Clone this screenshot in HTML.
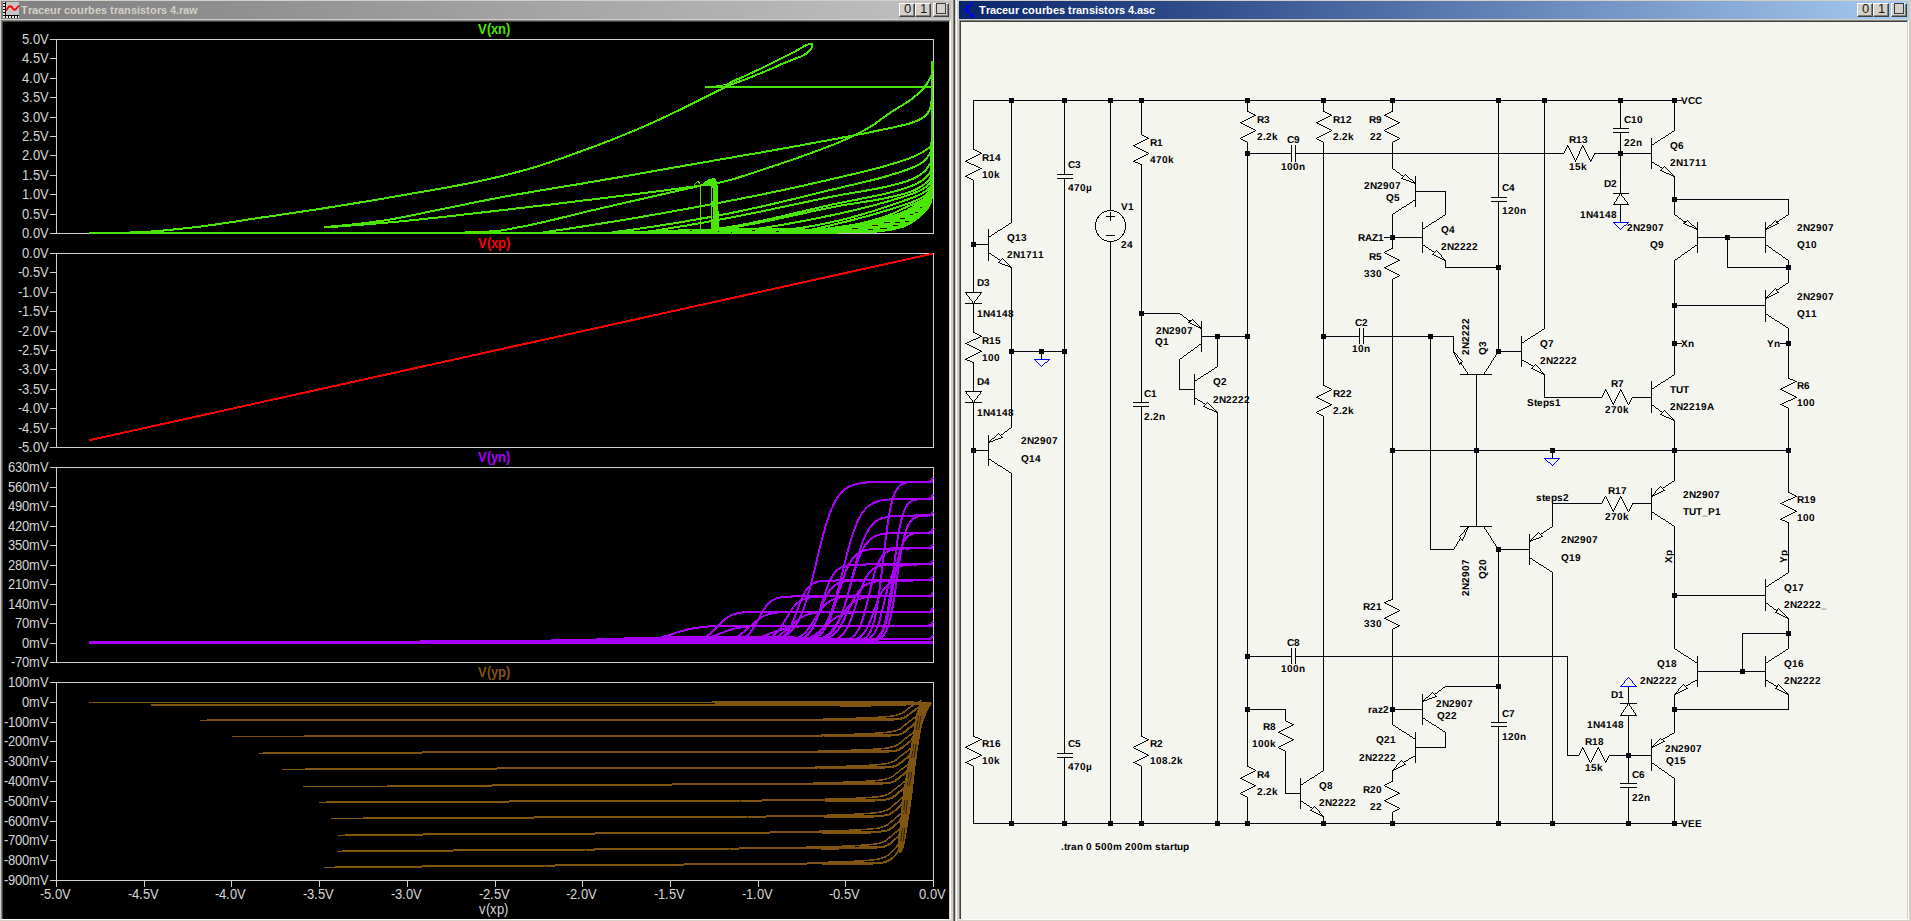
<!DOCTYPE html>
<html><head><meta charset="utf-8"><title>LTspice</title>
<style>
html,body{margin:0;padding:0}
body{width:1911px;height:921px;overflow:hidden;background:#d4d0c8;position:relative;font-family:"Liberation Sans",sans-serif}
.abs,.btn,.t,.r{position:absolute}
.r{display:block}
.t{top:1px;height:18px;font-weight:bold;font-size:11px;line-height:18px;white-space:nowrap}
.btn{top:3px;width:16px;height:14px;background:#d4d0c8;box-sizing:border-box;border-top:1px solid #fff;border-left:1px solid #fff;border-right:1px solid #404040;border-bottom:1px solid #404040;font-size:13px;line-height:12px;color:#1a1a1a;text-align:center}
.btn:after{content:"";position:absolute;left:0;top:0;right:0;bottom:0;border-right:1px solid #808080;border-bottom:1px solid #808080}
.btn span{position:relative;top:-1px;left:0.5px}
.bx{position:absolute;left:2px;top:-1px;width:8px;height:9px;border:1px solid #3a3a44}
svg text{font-family:"Liberation Sans",sans-serif}
#sch text{font-weight:bold;font-size:10px;fill:#000;text-rendering:geometricPrecision}
#plot .tk{font-size:13px;fill:#d6d6d6}
#plot .tt{font-size:13px;font-weight:bold}
</style></head><body>
<!-- left window (waveform viewer) -->
<div class="t" style="left:1px;width:950px;background:linear-gradient(to right,#808080,#c0c0c0);color:#d4d0c8"></div>
<svg class="abs" style="left:3px;top:2px" width="16" height="16" viewBox="0 0 16 16" shape-rendering="crispEdges"><rect x="0" y="0" width="16" height="16" fill="#000"/><rect x="3" y="0" width="13" height="13" fill="#c6c6c6"/><rect x="0" y="0" width="2" height="1" fill="#e8e8e8"/><rect x="0" y="2" width="2" height="2" fill="#e8e8e8"/><rect x="0" y="5" width="2" height="2" fill="#e8e8e8"/><rect x="0" y="8" width="2" height="2" fill="#e8e8e8"/><rect x="0" y="11" width="2" height="2" fill="#e8e8e8"/><rect x="0" y="14" width="2" height="2" fill="#e8e8e8"/><rect x="3" y="14" width="2" height="2" fill="#e8e8e8"/><rect x="6" y="14" width="2" height="2" fill="#e8e8e8"/><rect x="9" y="14" width="2" height="2" fill="#e8e8e8"/><rect x="12" y="14" width="2" height="2" fill="#e8e8e8"/><rect x="15" y="14" width="1" height="2" fill="#e8e8e8"/><path d="M3 8.5L6 4.5H8.5L10.5 7.5H12.5L16 3.5" stroke="#f00" stroke-width="1.8" fill="none" shape-rendering="auto"/></svg>
<div class="btn" style="left:899px"><span>0</span></div><div class="btn" style="left:915px"><span>1</span></div><div class="btn" style="left:933px"><i class="bx"></i></div>
<div class="r" style="left:1px;top:20px;width:950px;height:900px;background:#fff"></div>
<div class="r" style="left:1px;top:20px;width:949px;height:899px;background:#808080"></div>
<div class="r" style="left:2px;top:21px;width:948px;height:898px;background:#d4d0c8"></div>
<div class="r" style="left:2px;top:21px;width:947px;height:898px;background:#404040"></div>
<div class="r" style="left:3px;top:22px;width:946px;height:897px;background:#000"></div>
<div class="r" style="left:953px;top:0;width:1px;height:921px;background:#808080"></div>
<div class="r" style="left:954px;top:0;width:1px;height:921px;background:#404040"></div>
<div class="r" style="left:956px;top:0;width:1px;height:921px;background:#fff"></div>
<!-- right window (schematic) -->
<div class="t" style="left:959px;width:950px;background:linear-gradient(to right,#0a246a,#a6caf0);color:#fff"></div>
<svg class="abs" style="left:962px;top:1px" width="14" height="18" viewBox="0 0 14 18"><g stroke="#0000ff" fill="none" stroke-width="1.1"><path d="M1 8.5H5.5"/><path d="M5.6 4.3V12.7" stroke-width="2.2"/><path d="M6.3 6.4L11.3 1.3"/><path d="M6.3 10.8L12 16.5"/><path d="M12 16.7L8.4 15.4L10.8 13Z" fill="#0000ff" stroke-width="0.8"/></g></svg>
<div class="btn" style="left:1857px"><span>0</span></div><div class="btn" style="left:1873px"><span>1</span></div><div class="btn" style="left:1891px"><i class="bx"></i></div>
<div class="r" style="left:959px;top:20px;width:950px;height:900px;background:#fff"></div>
<div class="r" style="left:959px;top:20px;width:949px;height:899px;background:#808080"></div>
<div class="r" style="left:960px;top:21px;width:948px;height:898px;background:#d4d0c8"></div>
<div class="r" style="left:960px;top:21px;width:947px;height:898px;background:#404040"></div>
<div class="r" style="left:961px;top:22px;width:946px;height:897px;background:#f5f5f0"></div>
<svg class="abs" style="left:0;top:0" width="1911" height="22" viewBox="0 0 1911 22"><g font-weight="bold" font-size="11">
<text x="21 28 32 38 44 50 57 61 64 70 77 84 88 95 101 107 110 114 118 124 131 137 140 146 150 157 161 167 170 176 179 183 189" y="14" fill="#d4d0c8">Traceur courbes transistors 4.raw</text>
<text x="979 986 990 996 1002 1008 1015 1019 1022 1028 1035 1042 1046 1053 1059 1065 1068 1072 1076 1082 1089 1095 1098 1104 1108 1115 1119 1125 1128 1134 1137 1143 1149" y="14" fill="#ffffff">Traceur courbes transistors 4.asc</text>
</g></svg>
<svg id="plot" class="abs" style="left:0;top:0" width="955" height="921" viewBox="0 0 955 921">
<defs><clipPath id="cp"><rect x="3" y="22" width="946" height="897"/></clipPath></defs>
<g clip-path="url(#cp)">
<g fill="none" shape-rendering="crispEdges">
<path d="M56.5 39.5H933.5V233.5H56.5Z" stroke="#cfcfcf" stroke-width="1"/>
<text shape-rendering="auto" transform="translate(0 44) scale(1 1.075)" x="22 29 33 40" y="0" class="tk">5.0V</text>
<text shape-rendering="auto" transform="translate(0 63) scale(1 1.075)" x="22 29 33 40" y="0" class="tk">4.5V</text>
<text shape-rendering="auto" transform="translate(0 83) scale(1 1.075)" x="22 29 33 40" y="0" class="tk">4.0V</text>
<text shape-rendering="auto" transform="translate(0 102) scale(1 1.075)" x="22 29 33 40" y="0" class="tk">3.5V</text>
<text shape-rendering="auto" transform="translate(0 122) scale(1 1.075)" x="22 29 33 40" y="0" class="tk">3.0V</text>
<text shape-rendering="auto" transform="translate(0 141) scale(1 1.075)" x="22 29 33 40" y="0" class="tk">2.5V</text>
<text shape-rendering="auto" transform="translate(0 160) scale(1 1.075)" x="22 29 33 40" y="0" class="tk">2.0V</text>
<text shape-rendering="auto" transform="translate(0 180) scale(1 1.075)" x="22 29 33 40" y="0" class="tk">1.5V</text>
<text shape-rendering="auto" transform="translate(0 199) scale(1 1.075)" x="22 29 33 40" y="0" class="tk">1.0V</text>
<text shape-rendering="auto" transform="translate(0 219) scale(1 1.075)" x="22 29 33 40" y="0" class="tk">0.5V</text>
<text shape-rendering="auto" transform="translate(0 238) scale(1 1.075)" x="22 29 33 40" y="0" class="tk">0.0V</text>
<path d="M50 39.5H56M50 58.5H56M50 78.5H56M50 97.5H56M50 117.5H56M50 136.5H56M50 155.5H56M50 175.5H56M50 194.5H56M50 214.5H56M50 233.5H56" stroke="#cfcfcf" stroke-width="1"/>
<text shape-rendering="auto" transform="translate(0 34) scale(1 1.075)" x="478 487 491 498 506" y="0" class="tt" fill="#48e600">V(xn)</text>
<path d="M56.5 253.5H933.5V447.5H56.5Z" stroke="#cfcfcf" stroke-width="1"/>
<text shape-rendering="auto" transform="translate(0 258) scale(1 1.075)" x="22 29 33 40" y="0" class="tk">0.0V</text>
<text shape-rendering="auto" transform="translate(0 277) scale(1 1.075)" x="18 22 29 33 40" y="0" class="tk">-0.5V</text>
<text shape-rendering="auto" transform="translate(0 297) scale(1 1.075)" x="18 22 29 33 40" y="0" class="tk">-1.0V</text>
<text shape-rendering="auto" transform="translate(0 316) scale(1 1.075)" x="18 22 29 33 40" y="0" class="tk">-1.5V</text>
<text shape-rendering="auto" transform="translate(0 336) scale(1 1.075)" x="18 22 29 33 40" y="0" class="tk">-2.0V</text>
<text shape-rendering="auto" transform="translate(0 355) scale(1 1.075)" x="18 22 29 33 40" y="0" class="tk">-2.5V</text>
<text shape-rendering="auto" transform="translate(0 374) scale(1 1.075)" x="18 22 29 33 40" y="0" class="tk">-3.0V</text>
<text shape-rendering="auto" transform="translate(0 394) scale(1 1.075)" x="18 22 29 33 40" y="0" class="tk">-3.5V</text>
<text shape-rendering="auto" transform="translate(0 413) scale(1 1.075)" x="18 22 29 33 40" y="0" class="tk">-4.0V</text>
<text shape-rendering="auto" transform="translate(0 433) scale(1 1.075)" x="18 22 29 33 40" y="0" class="tk">-4.5V</text>
<text shape-rendering="auto" transform="translate(0 452) scale(1 1.075)" x="18 22 29 33 40" y="0" class="tk">-5.0V</text>
<path d="M50 253.5H56M50 272.5H56M50 292.5H56M50 311.5H56M50 331.5H56M50 350.5H56M50 369.5H56M50 389.5H56M50 408.5H56M50 428.5H56M50 447.5H56" stroke="#cfcfcf" stroke-width="1"/>
<text shape-rendering="auto" transform="translate(0 248) scale(1 1.075)" x="478 487 491 498 506" y="0" class="tt" fill="#ff0000">V(xp)</text>
<path d="M56.5 467.5H933.5V662.5H56.5Z" stroke="#cfcfcf" stroke-width="1"/>
<text shape-rendering="auto" transform="translate(0 472) scale(1 1.075)" x="8 15 22 29 40" y="0" class="tk">630mV</text>
<text shape-rendering="auto" transform="translate(0 492) scale(1 1.075)" x="8 15 22 29 40" y="0" class="tk">560mV</text>
<text shape-rendering="auto" transform="translate(0 511) scale(1 1.075)" x="8 15 22 29 40" y="0" class="tk">490mV</text>
<text shape-rendering="auto" transform="translate(0 531) scale(1 1.075)" x="8 15 22 29 40" y="0" class="tk">420mV</text>
<text shape-rendering="auto" transform="translate(0 550) scale(1 1.075)" x="8 15 22 29 40" y="0" class="tk">350mV</text>
<text shape-rendering="auto" transform="translate(0 570) scale(1 1.075)" x="8 15 22 29 40" y="0" class="tk">280mV</text>
<text shape-rendering="auto" transform="translate(0 589) scale(1 1.075)" x="8 15 22 29 40" y="0" class="tk">210mV</text>
<text shape-rendering="auto" transform="translate(0 609) scale(1 1.075)" x="8 15 22 29 40" y="0" class="tk">140mV</text>
<text shape-rendering="auto" transform="translate(0 628) scale(1 1.075)" x="15 22 29 40" y="0" class="tk">70mV</text>
<text shape-rendering="auto" transform="translate(0 648) scale(1 1.075)" x="22 29 40" y="0" class="tk">0mV</text>
<text shape-rendering="auto" transform="translate(0 667) scale(1 1.075)" x="11 15 22 29 40" y="0" class="tk">-70mV</text>
<path d="M50 467.5H56M50 487.5H56M50 506.5H56M50 526.5H56M50 545.5H56M50 565.5H56M50 584.5H56M50 604.5H56M50 623.5H56M50 643.5H56M50 662.5H56" stroke="#cfcfcf" stroke-width="1"/>
<text shape-rendering="auto" transform="translate(0 462) scale(1 1.075)" x="478 487 491 498 506" y="0" class="tt" fill="#a800f8">V(yn)</text>
<path d="M56.5 682.5H933.5V880.5H56.5Z" stroke="#cfcfcf" stroke-width="1"/>
<text shape-rendering="auto" transform="translate(0 687) scale(1 1.075)" x="8 15 22 29 40" y="0" class="tk">100mV</text>
<text shape-rendering="auto" transform="translate(0 707) scale(1 1.075)" x="22 29 40" y="0" class="tk">0mV</text>
<text shape-rendering="auto" transform="translate(0 727) scale(1 1.075)" x="4 8 15 22 29 40" y="0" class="tk">-100mV</text>
<text shape-rendering="auto" transform="translate(0 746) scale(1 1.075)" x="4 8 15 22 29 40" y="0" class="tk">-200mV</text>
<text shape-rendering="auto" transform="translate(0 766) scale(1 1.075)" x="4 8 15 22 29 40" y="0" class="tk">-300mV</text>
<text shape-rendering="auto" transform="translate(0 786) scale(1 1.075)" x="4 8 15 22 29 40" y="0" class="tk">-400mV</text>
<text shape-rendering="auto" transform="translate(0 806) scale(1 1.075)" x="4 8 15 22 29 40" y="0" class="tk">-500mV</text>
<text shape-rendering="auto" transform="translate(0 826) scale(1 1.075)" x="4 8 15 22 29 40" y="0" class="tk">-600mV</text>
<text shape-rendering="auto" transform="translate(0 845) scale(1 1.075)" x="4 8 15 22 29 40" y="0" class="tk">-700mV</text>
<text shape-rendering="auto" transform="translate(0 865) scale(1 1.075)" x="4 8 15 22 29 40" y="0" class="tk">-800mV</text>
<text shape-rendering="auto" transform="translate(0 885) scale(1 1.075)" x="4 8 15 22 29 40" y="0" class="tk">-900mV</text>
<path d="M50 682.5H56M50 702.5H56M50 722.5H56M50 741.5H56M50 761.5H56M50 781.5H56M50 801.5H56M50 821.5H56M50 840.5H56M50 860.5H56M50 880.5H56" stroke="#cfcfcf" stroke-width="1"/>
<text shape-rendering="auto" transform="translate(0 677) scale(1 1.075)" x="478 487 491 498 506" y="0" class="tt" fill="#80550f">V(yp)</text>
<text shape-rendering="auto" transform="translate(0 899) scale(1 1.075)" x="40 44 51 55 62" y="0" class="tk">-5.0V</text>
<text shape-rendering="auto" transform="translate(0 899) scale(1 1.075)" x="128 132 139 143 150" y="0" class="tk">-4.5V</text>
<text shape-rendering="auto" transform="translate(0 899) scale(1 1.075)" x="215 219 226 230 237" y="0" class="tk">-4.0V</text>
<text shape-rendering="auto" transform="translate(0 899) scale(1 1.075)" x="303 307 314 318 325" y="0" class="tk">-3.5V</text>
<text shape-rendering="auto" transform="translate(0 899) scale(1 1.075)" x="391 395 402 406 413" y="0" class="tk">-3.0V</text>
<text shape-rendering="auto" transform="translate(0 899) scale(1 1.075)" x="479 483 490 494 501" y="0" class="tk">-2.5V</text>
<text shape-rendering="auto" transform="translate(0 899) scale(1 1.075)" x="566 570 577 581 588" y="0" class="tk">-2.0V</text>
<text shape-rendering="auto" transform="translate(0 899) scale(1 1.075)" x="654 658 665 669 676" y="0" class="tk">-1.5V</text>
<text shape-rendering="auto" transform="translate(0 899) scale(1 1.075)" x="742 746 753 757 764" y="0" class="tk">-1.0V</text>
<text shape-rendering="auto" transform="translate(0 899) scale(1 1.075)" x="829 833 840 844 851" y="0" class="tk">-0.5V</text>
<text shape-rendering="auto" transform="translate(0 899) scale(1 1.075)" x="919 926 930 937" y="0" class="tk">0.0V</text>
<path d="M56.5 880V887M144.5 880V887M231.5 880V887M319.5 880V887M407.5 880V887M495.5 880V887M582.5 880V887M670.5 880V887M758.5 880V887M845.5 880V887M933.5 880V887" stroke="#cfcfcf" stroke-width="1"/>
<text shape-rendering="auto" transform="translate(0 914) scale(1 1.075)" x="479 486 490 497 504" y="0" class="tk">v(xp)</text>
</g>
<g fill="none" shape-rendering="crispEdges" stroke-linejoin="round">
<path d="M89 233L838 233" stroke="#48e600" stroke-width="2"/>
<path d="M120.6 232.8L123.6 232.7L126.6 232.6L129.6 232.5L132.6 232.4L135.6 232.3L138.6 232.1L141.6 232L144.6 231.8L147.6 231.6L150.6 231.5L153.6 231.3L156.6 231.1L159.6 230.8L162.6 230.6L165.6 230.3L168.6 230L171.6 229.7L174.6 229.4L177.6 229.1L180.5 228.8L183.5 228.5L186.5 228.1L189.5 227.8L192.5 227.5L195.5 227.1L198.5 226.8L201.4 226.4L204.4 226L207.4 225.6L210.4 225.2L213.3 224.8L216.3 224.4L219.3 223.9L222.3 223.5L225.2 223.1L228.2 222.6L231.2 222.2L234.2 221.7L237.1 221.3L240.1 220.8L243.1 220.3L246 219.9L249 219.4L252 219L255 218.5L257.9 218.1L260.9 217.6L263.9 217.2L266.8 216.8L269.8 216.3L272.8 215.9L275.8 215.5L278.7 215L281.7 214.6L284.7 214.2L287.7 213.7L290.6 213.3L293.6 212.8L296.6 212.4L299.5 212L302.5 211.5L305.5 211.1L308.5 210.6L311.4 210.2L314.4 209.7L317.4 209.3L320.3 208.8L323.3 208.4L326.3 207.9L329.2 207.4L332.2 207L335.2 206.5L338.1 206L341.1 205.5L344.1 205.1L347 204.6L350 204.1L353 203.6L355.9 203.1L358.9 202.6L361.9 202.2L364.8 201.7L367.8 201.2L370.8 200.7L373.7 200.2L376.7 199.7L379.6 199.2L382.6 198.7L385.6 198.2L388.5 197.6L391.5 197.1L394.5 196.6L397.4 196.1L400.4 195.6L403.3 195.1L406.3 194.6L409.3 194L412.2 193.5L415.2 193L418.1 192.5L421.1 192L424.1 191.5L427 191L430 190.5L433 189.9L435.9 189.4L438.9 188.9L441.8 188.4L444.8 187.8L447.8 187.3L450.7 186.8L453.7 186.2L456.6 185.7L459.6 185.1L462.5 184.5L465.5 184L468.4 183.4L471.4 182.8L474.3 182.2L477.2 181.6L480.2 181L483.1 180.3L486 179.7L489 179L491.9 178.4L494.8 177.7L497.8 177L500.7 176.3L503.6 175.6L506.5 174.9L509.4 174.1L512.4 173.4L515.3 172.6L518.2 171.8L521.1 171.1L524 170.3L526.9 169.5L529.7 168.6L532.6 167.8L535.5 166.9L538.4 166.1L541.2 165.2L544.1 164.2L546.9 163.3L549.8 162.4L552.6 161.4L555.5 160.4L558.3 159.4L561.2 158.4L564 157.4L566.8 156.4L569.7 155.4L572.5 154.4L575.3 153.4L578.2 152.3L581 151.3L583.8 150.3L586.6 149.3L589.4 148.2L592.3 147.2L595.1 146.1L597.9 145.1L600.7 144L603.5 142.9L606.3 141.9L609.1 140.8L611.9 139.7L614.7 138.6L617.5 137.5L620.3 136.3L623.1 135.2L625.9 134.1L628.6 132.9L631.4 131.8L634.2 130.6L637 129.5L639.7 128.3L642.5 127.1L645.2 125.9L648 124.7L650.7 123.4L653.5 122.2L656.2 121L658.9 119.7L661.6 118.4L664.4 117.2L667.1 115.9L669.8 114.6L672.5 113.3L675.2 112L677.9 110.7L680.6 109.4L683.3 108.1L686 106.7L688.7 105.4L691.4 104L694.1 102.7L696.8 101.3L699.5 100L702.1 98.7L704.8 97.3L707.5 96L710.2 94.6L712.9 93.3L715.6 91.9L718.3 90.6L721.1 89.4L723.8 88L726.1 86.3L728.2 84L730.5 82.3L733.1 80.9L735.9 79.8L738.8 78.7L741.6 77.5L744.4 76.3L747.1 75L749.8 73.7L752.5 72.5L755.2 71.2L758 69.9L760.7 68.6L763.4 67.3L766.1 66L768.8 64.7L771.5 63.3L774.2 62L776.8 60.6L779.5 59.2L782.2 57.9L784.9 56.6L787.6 55.2L790.3 53.9L793 52.6L795.6 51.1L798.2 49.6L800.8 48.1L803.4 46.6L806.1 45.3L808.9 44.1L812 44.2L812.1 47L810.4 49.6L808.4 51.8L806 53.7L803.5 55.2L800.8 56.5L797.9 57.6L795.1 58.7L792.3 59.8L789.5 60.9L786.7 62L783.9 63.1L781.1 64.3L778.4 65.5L775.7 66.8L772.9 68L770.2 69.3L767.4 70.4L764.7 71.6L761.9 72.7L759.1 73.8L756.3 74.9L753.5 76.1L750.7 77.2L747.9 78.3L745.1 79.4L742.3 80.5L739.5 81.5L736.7 82.5L733.8 83.5L731 84.5L728.2 85.5L725.3 86.4" stroke="#48e600" stroke-width="2"/>
<path d="M705 86.5L933 86.5" stroke="#48e600" stroke-width="2"/>
<path d="M706 86.5L716 86L727 84.5L742 78" stroke="#48e600" stroke-width="1"/>
<path d="M324 227L327 226.8L330 226.6L333 226.3L336 226.1L339 225.8L342 225.5L345 225.2L348 224.9L351 224.6L354 224.3L357 223.9L360 223.6L363 223.2L365.9 222.8L368.9 222.5L371.9 222.1L374.9 221.7L377.8 221.3L380.8 220.9L383.8 220.5L386.8 220L389.7 219.5L392.7 219L395.6 218.5L398.6 217.9L401.6 217.4L404.5 216.8L407.5 216.2L410.4 215.6L413.4 215L416.3 214.4L419.3 213.8L422.2 213.2L425.2 212.5L428.1 211.9L431 211.3L434 210.7L436.9 210.1L439.9 209.5L442.8 208.9L445.8 208.4L448.7 207.8L451.7 207.2L454.6 206.6L457.6 206L460.5 205.4L463.5 204.8L466.4 204.2L469.4 203.5L472.3 202.9L475.3 202.3L478.2 201.7L481.2 201.2L484.1 200.6L487.1 200L490 199.4L493 198.8L495.9 198.3L498.9 197.7L501.8 197.2L504.8 196.6L507.8 196.1L510.7 195.6L513.7 195L516.6 194.5L519.6 194L522.6 193.5L525.5 193L528.5 192.5L531.5 191.9L534.4 191.4L537.4 190.9L540.4 190.4L543.3 190L546.3 189.5L549.3 189L552.2 188.5L555.2 188L558.2 187.5L561.1 187L564.1 186.5L567.1 186L570 185.5L573 185L576 184.6L578.9 184.1L581.9 183.6L584.9 183.1L587.8 182.6L590.8 182.1L593.8 181.6L596.7 181.1L599.7 180.6L602.7 180L605.6 179.5L608.6 179L611.6 178.5L614.5 178L617.5 177.5L620.4 177L623.4 176.4L626.4 175.9L629.3 175.4L632.3 174.9L635.3 174.4L638.2 173.8L641.2 173.3L644.2 172.8L647.1 172.3L650.1 171.8L653 171.2L656 170.7L659 170.2L661.9 169.7L664.9 169.2L667.9 168.6L670.8 168.1L673.8 167.6L676.7 167.1L679.7 166.6L682.7 166L685.6 165.5L688.6 165L691.5 164.5L694.5 164L697.5 163.4L700.4 162.9L703.4 162.4L706.4 161.9L709.3 161.4L712.3 160.8L715.3 160.3L718.2 159.8L721.2 159.3L724.1 158.8L727.1 158.3L730.1 157.8L733 157.3L736 156.7L739 156.2L741.9 155.7L744.9 155.2L747.9 154.7L750.8 154.2L753.8 153.7L756.8 153.2L759.7 152.7L762.7 152.1L765.6 151.6L768.6 151.1L771.6 150.6L774.5 150.1L777.5 149.5L780.4 149L783.4 148.5L786.4 147.9L789.3 147.4L792.3 146.9L795.3 146.3L798.2 145.8L801.2 145.3L804.1 144.7L807.1 144.2L810 143.6L813 143.1L816 142.5L818.9 142L821.9 141.4L824.8 140.9L827.8 140.3L830.7 139.8L833.7 139.2L836.7 138.7L839.6 138.1L842.6 137.5L845.5 137L848.5 136.4L851.4 135.8L854.4 135.3L857.3 134.7L860.3 134.1L863.3 133.6L866.2 133L869.2 132.4L872.1 131.8L875.1 131.2L878 130.6L880.9 130L883.9 129.4L886.8 128.8L889.8 128.1L892.7 127.5L895.7 126.8L898.6 126.2L901.6 125.5L904.5 124.8L907.5 124.1L910.3 123.3L913.1 122.3L915.9 121.3L918.8 120L921.5 118.5L924 116.9L926.1 114.9L928.1 112.5L929.6 109.8L930.5 107.1L931.1 104.2L931.5 101.2L931.8 98.1L932 95.1L932.1 92.1L932.2 89.1L932.2 86.1L932.3 83.1L932.4 80.1L932.4 77.1L932.4 74.1L932.5 71.1L932.5 68L932.5 65L932.5 62" stroke="#48e600" stroke-width="2"/>
<path d="M324 227.5L327 227.3L330 227.1L333 226.9L336 226.7L339 226.4L342 226.2L345 226L348 225.8L351 225.5L354 225.3L357 225.1L360 224.8L363 224.6L366 224.4L369 224.1L372 223.9L375 223.6L378 223.3L381 223.1L384 222.8L387 222.6L390 222.3L392.9 222L395.9 221.7L398.9 221.5L401.9 221.2L404.9 220.9L407.9 220.6L410.9 220.3L413.9 220L416.9 219.7L419.9 219.4L422.9 219.1L425.9 218.8L428.9 218.4L431.8 218.1L434.8 217.8L437.8 217.5L440.8 217.1L443.8 216.8L446.8 216.5L449.8 216.1L452.8 215.8L455.8 215.5L458.7 215.1L461.7 214.8L464.7 214.4L467.7 214.1L470.7 213.8L473.7 213.4L476.7 213.1L479.7 212.7L482.6 212.4L485.6 212L488.6 211.7L491.6 211.4L494.6 211L497.6 210.7L500.6 210.3L503.6 210L506.6 209.7L509.5 209.3L512.5 209L515.5 208.6L518.5 208.3L521.5 207.9L524.5 207.6L527.5 207.2L530.4 206.9L533.4 206.5L536.4 206.2L539.4 205.8L542.4 205.5L545.4 205.1L548.4 204.8L551.4 204.4L554.3 204.1L557.3 203.7L560.3 203.3L563.3 203L566.3 202.6L569.3 202.3L572.3 201.9L575.2 201.5L578.2 201.2L581.2 200.8L584.2 200.4L587.2 200.1L590.2 199.7L593.1 199.3L596.1 199L599.1 198.6L602.1 198.2L605.1 197.9L608.1 197.5L611.1 197.1L614 196.8L617 196.4L620 196L623 195.6L626 195.3L629 194.9L631.9 194.5L634.9 194.2L637.9 193.8L640.9 193.4L643.9 193L646.9 192.7L649.9 192.3L652.8 191.9L655.8 191.5L658.8 191.2L661.8 190.8L664.8 190.4L667.7 190L670.7 189.6L673.7 189.2L676.7 188.8L679.7 188.4L682.7 188L685.6 187.6L688.6 187.2L691.6 186.8L694.6 186.4L697.5 185.9L700.5 185.5L703.5 185.1L706.5 184.7L709.5 184.3L712.5 183.8L715.4 183.3L718.4 182.8L721.3 182.2L724.2 181.5L727.1 180.8L730 180L732.9 179.2L735.8 178.4L738.7 177.5L741.5 176.5L744.4 175.6L747.3 174.7L750.1 173.7L753 172.8L755.9 171.8L758.7 170.9L761.6 170L764.5 169.1L767.3 168.2L770.2 167.2L773.1 166.3L775.9 165.3L778.8 164.4L781.6 163.4L784.5 162.4L787.3 161.5L790.1 160.5L793 159.5L795.8 158.5L798.6 157.5L801.5 156.5L804.3 155.5L807.1 154.4L810 153.4L812.8 152.4L815.6 151.4L818.5 150.3L821.3 149.3L824.1 148.2L826.9 147.2L829.7 146.1L832.5 145L835.3 143.9L838.1 142.7L840.9 141.5L843.6 140.3L846.4 139.1L849.1 137.9L851.8 136.6L854.5 135.3L857.2 134L859.9 132.6L862.6 131.2L865.2 129.7L867.8 128.3L870.4 126.7L873 125.1L875.4 123.5L877.9 121.7L880.3 119.9L882.7 118.1L885.2 116.3L887.6 114.6L890.1 112.9L892.6 111.2L895.1 109.6L897.7 108L900.3 106.4L902.9 104.9L905.5 103.3L908 101.7L910.5 100L912.8 98.2L915.1 96.3L917.4 94.3L919.7 92.2L921.8 90.1L923.8 87.8L925.7 85.5L927.3 83.1L928.8 80.5L930.2 77.8L931.5 75" stroke="#48e600" stroke-width="2"/>
<path d="M462 232.5L465.1 232.5L468.1 232.4L471.2 232.4L474.2 232.3L477.2 232.1L480.3 232L483.3 231.8L486.3 231.7L489.3 231.5L492.4 231.3L495.4 231L498.4 230.8L501.4 230.4L504.4 230L507.4 229.5L510.4 228.9L513.4 228.3L516.4 227.7L519.4 227.1L522.3 226.6L525.3 226L528.3 225.4L531.3 224.8L534.2 224.1L537.2 223.5L540.2 222.8L543.1 222.1L546.1 221.5L549 220.8L552 220.1L555 219.4L557.9 218.7L560.9 217.9L563.8 217.2L566.8 216.5L569.7 215.8L572.7 215.1L575.6 214.3L578.6 213.6L581.5 212.9L584.5 212.2L587.4 211.5L590.4 210.7L593.3 210L596.3 209.4L599.3 208.7L602.2 208L605.2 207.3L608.2 206.6L611.1 206L614.1 205.3L617 204.6L620 203.9L623 203.3L625.9 202.6L628.9 201.9L631.8 201.2L634.8 200.6L637.8 199.9L640.7 199.2L643.7 198.6L646.7 197.9L649.6 197.2L652.6 196.5L655.5 195.9L658.5 195.2L661.5 194.5L664.4 193.9L667.4 193.2L670.4 192.5L673.3 191.9L676.3 191.2L679.3 190.5L682.2 189.9L685.2 189.2L688.1 188.5L691.1 187.9L694.1 187.2L697 186.6L700 185.9" stroke="#48e600" stroke-width="2"/>
<path d="M542.8 232.4L545.8 232L548.7 231.5L551.7 231.1L554.7 230.7L557.7 230.2L560.6 229.8L563.6 229.4L566.6 228.9L569.5 228.5L572.5 228L575.5 227.6L578.5 227.1L581.4 226.7L584.4 226.2L587.4 225.7L590.3 225.3L593.3 224.8L596.3 224.3L599.2 223.9L602.2 223.4L605.1 222.9L608.1 222.4L611.1 221.9L614 221.5L617 221L620 220.5L622.9 220L625.9 219.5L628.8 219L631.8 218.5L634.8 218L637.7 217.5L640.7 217L643.6 216.5L646.6 216L649.6 215.4L652.5 214.9L655.5 214.4L658.4 213.9L661.4 213.4L664.3 212.9L667.3 212.3L670.3 211.8L673.2 211.3L676.2 210.7L679.1 210.2L682.1 209.7L685 209.1L688 208.6L690.9 208.1L693.9 207.5L696.8 207L699.8 206.4L702.7 205.9L705.7 205.4L708.6 204.8L711.6 204.3L714.5 203.7L717.5 203.1L720.4 202.6L723.4 202L726.3 201.5L729.3 200.9L732.2 200.3L735.2 199.8L738.1 199.2L741.1 198.6L744 198L746.9 197.4L749.9 196.9L752.8 196.3L755.8 195.7L758.7 195.1L761.7 194.5L764.6 193.9L767.5 193.3L770.5 192.7L773.4 192L776.4 191.4L779.3 190.8L782.2 190.2L785.2 189.6L788.1 188.9L791.1 188.3L794 187.7L796.9 187L799.9 186.4L802.8 185.7L805.7 185.1L808.6 184.4L811.6 183.7L814.5 183.1L817.4 182.4L820.3 181.7L823.3 181.1L826.2 180.4L829.1 179.7L832 179L835 178.3L837.9 177.7L840.8 177L843.7 176.3L846.7 175.6L849.6 174.9L852.6 174.3L855.5 173.6L858.4 172.9L861.4 172.2L864.3 171.5L867.2 170.8L870.1 170L873.1 169.3L876 168.5L878.9 167.8L881.8 167L884.7 166.2L887.5 165.3L890.4 164.5L893.3 163.6L896.1 162.8L899 161.9L901.8 160.9L904.6 160L907.5 159L910.3 157.9L913.1 156.8L915.9 155.6L918.6 154.3L921.2 152.9L923.8 151.4L926.3 149.8L928.7 147.9L931 146" stroke="#48e600" stroke-width="2"/>
<path d="M611.9 232.4L614.9 232L617.9 231.6L620.9 231.2L623.9 230.8L626.9 230.4L629.9 230L632.9 229.6L635.9 229.2L638.9 228.7L641.9 228.3L644.9 227.9L647.9 227.4L650.8 227L653.8 226.5L656.8 226L659.8 225.6L662.8 225.1L665.8 224.6L668.8 224.1L671.7 223.7L674.7 223.2L677.7 222.7L680.7 222.2L683.7 221.7L686.6 221.2L689.6 220.6L692.6 220.1L695.6 219.6L698.5 219.1L701.5 218.5L704.5 218L707.5 217.5L710.4 216.9L713.4 216.4L716.4 215.8L719.3 215.3L722.3 214.7L725.3 214.1L728.2 213.6L731.2 213L734.1 212.4L737.1 211.8L740.1 211.2L743 210.5L746 209.9L748.9 209.3L751.9 208.6L754.8 208L757.8 207.3L760.7 206.7L763.7 206L766.6 205.3L769.6 204.7L772.5 204L775.5 203.3L778.4 202.6L781.4 201.9L784.3 201.2L787.2 200.5L790.2 199.8L793.1 199.1L796.1 198.4L799 197.7L801.9 197L804.9 196.3L807.8 195.5L810.7 194.8L813.7 194.1L816.6 193.4L819.6 192.7L822.5 191.9L825.4 191.2L828.4 190.5L831.3 189.8L834.2 189.1L837.2 188.4L840.1 187.7L843.1 187L846 186.3L849 185.6L852 184.9L854.9 184.2L857.9 183.5L860.8 182.8L863.8 182.1L866.7 181.4L869.7 180.7L872.6 180L875.6 179.2L878.5 178.5L881.4 177.7L884.3 176.9L887.2 176L890.1 175.2L893 174.3L895.9 173.4L898.7 172.5L901.6 171.6L904.4 170.6L907.2 169.6L910.1 168.5L913 167.3L915.8 166.1L918.5 164.7L921 163.2L923.3 161.5L925.4 159.5L927.4 157.2L929.3 154.7L931 152" stroke="#48e600" stroke-width="2"/>
<path d="M643.3 232.4L646.3 231.9L649.2 231.5L652.2 231L655.2 230.6L658.1 230.1L661.1 229.6L664.1 229.2L667 228.7L670 228.2L673 227.7L675.9 227.2L678.9 226.7L681.8 226.3L684.8 225.8L687.8 225.3L690.7 224.8L693.7 224.2L696.6 223.7L699.6 223.2L702.5 222.7L705.5 222.2L708.4 221.7L711.4 221.1L714.3 220.6L717.3 220.1L720.3 219.5L723.2 219L726.1 218.4L729.1 217.9L732 217.3L735 216.7L737.9 216.2L740.9 215.6L743.8 215L746.8 214.4L749.7 213.8L752.6 213.2L755.6 212.6L758.5 212L761.5 211.4L764.4 210.8L767.3 210.2L770.3 209.6L773.2 208.9L776.2 208.3L779.1 207.7L782 207.1L785 206.5L787.9 205.8L790.8 205.2L793.8 204.6L796.7 204L799.6 203.4L802.6 202.7L805.5 202.1L808.5 201.5L811.4 200.9L814.3 200.3L817.3 199.6L820.2 199L823.1 198.4L826.1 197.8L829 197.2L832 196.6L834.9 196L837.9 195.5L840.8 194.9L843.8 194.4L846.8 193.9L849.8 193.4L852.8 192.9L855.8 192.3L858.8 191.8L861.8 191.3L864.7 190.8L867.7 190.3L870.7 189.8L873.7 189.2L876.6 188.7L879.6 188.1L882.5 187.5L885.5 186.9L888.4 186.2L891.3 185.5L894.1 184.8L897 184.1L899.9 183.3L902.7 182.4L905.5 181.6L908.3 180.6L911.2 179.5L914 178.3L916.8 176.9L919.3 175.4L921.7 173.7L923.8 171.9L925.9 169.8L927.7 167.4L929.4 164.8L931 162" stroke="#48e600" stroke-width="2"/>
<path d="M690 232.4L693 232L696 231.7L699 231.3L702 230.9L705 230.5L708 230.1L711 229.7L714 229.3L717 228.9L720 228.4L723 228L726 227.5L729 227L732 226.5L735 226L737.9 225.5L740.9 225L743.9 224.4L746.9 223.8L749.8 223.3L752.8 222.7L755.8 222L758.7 221.4L761.7 220.8L764.6 220.1L767.6 219.5L770.6 218.8L773.5 218.2L776.5 217.5L779.4 216.8L782.4 216.1L785.3 215.4L788.3 214.7L791.2 214L794.2 213.3L797.1 212.6L800.1 211.9L803 211.2L806 210.5L808.9 209.9L811.9 209.2L814.8 208.5L817.8 207.8L820.7 207.1L823.7 206.4L826.6 205.8L829.6 205.1L832.6 204.4L835.5 203.8L838.5 203.2L841.5 202.6L844.5 202L847.5 201.4L850.5 200.8L853.5 200.3L856.5 199.7L859.5 199.1L862.4 198.5L865.4 197.9L868.4 197.3L871.4 196.7L874.4 196.1L877.4 195.5L880.3 194.8L883.3 194.2L886.2 193.5L889.1 192.7L892.1 192L895 191.2L897.8 190.4L900.7 189.6L903.6 188.7L906.4 187.8L909.3 186.8L912.2 185.6L915 184.4L917.7 183.1L920.3 181.6L922.7 180L925 178.1L927.1 175.9L929.1 173.5L931 171" stroke="#48e600" stroke-width="2"/>
<path d="M704 232.4L707 231.9L710 231.4L713 230.9L715.9 230.4L718.9 229.9L721.9 229.4L724.9 228.9L727.9 228.4L730.9 227.9L733.8 227.3L736.8 226.8L739.8 226.3L742.8 225.7L745.8 225.2L748.7 224.6L751.7 224.1L754.7 223.5L757.7 223L760.6 222.4L763.6 221.8L766.6 221.2L769.5 220.6L772.5 220L775.4 219.4L778.4 218.7L781.4 218.1L784.3 217.5L787.3 216.8L790.2 216.2L793.2 215.5L796.2 214.9L799.1 214.2L802.1 213.6L805 212.9L808 212.3L810.9 211.6L813.9 211L816.9 210.3L819.8 209.7L822.8 209.1L825.7 208.5L828.7 207.9L831.7 207.3L834.6 206.7L837.6 206.2L840.6 205.6L843.6 205.1L846.6 204.6L849.7 204.1L852.7 203.7L855.7 203.2L858.7 202.7L861.7 202.2L864.7 201.8L867.7 201.3L870.8 200.8L873.8 200.3L876.8 199.8L879.7 199.3L882.7 198.7L885.7 198.1L888.6 197.5L891.6 196.9L894.5 196.2L897.4 195.5L900.3 194.8L903.2 194L906 193.2L908.9 192.3L911.8 191.2L914.6 190L917.4 188.7L920 187.2L922.5 185.7L924.8 183.8L927 181.8L929.1 179.5L931 177" stroke="#48e600" stroke-width="2"/>
<path d="M728 232.4L731 232.1L734 231.8L737 231.4L740 231.1L743 230.7L746 230.3L748.9 229.9L751.9 229.5L754.9 229.1L757.9 228.7L760.9 228.2L763.8 227.8L766.8 227.3L769.8 226.9L772.8 226.4L775.7 225.9L778.7 225.4L781.7 224.9L784.7 224.4L787.6 223.9L790.6 223.3L793.6 222.8L796.5 222.3L799.5 221.7L802.5 221.1L805.4 220.6L808.4 220L811.3 219.4L814.3 218.8L817.2 218.2L820.2 217.6L823.1 217L826.1 216.4L829 215.8L832 215.2L834.9 214.5L837.9 213.9L840.8 213.3L843.7 212.6L846.7 211.9L849.6 211.3L852.6 210.6L855.5 209.9L858.4 209.2L861.4 208.5L864.3 207.7L867.2 207L870.2 206.2L873.1 205.5L876 204.7L878.9 203.9L881.8 203.1L884.7 202.3L887.6 201.5L890.5 200.6L893.4 199.8L896.3 198.9L899.1 198L902 197.1L904.9 196.2L907.7 195.2L910.6 194.3L913.5 193.3L916.3 192.2L919.1 191L921.7 189.7L924.2 188.1L926.6 186.3L928.8 184.2L931 182" stroke="#48e600" stroke-width="2"/>
<path d="M768 232.4L771 232L774 231.7L777 231.3L780.1 230.9L783.1 230.5L786.1 230.1L789.1 229.6L792.1 229.2L795.1 228.7L798.1 228.3L801.1 227.8L804.1 227.3L807.1 226.8L810.1 226.3L813.1 225.8L816.1 225.3L819.1 224.7L822 224.1L825 223.5L828 222.9L830.9 222.3L833.9 221.6L836.8 221L839.8 220.3L842.7 219.6L845.7 218.8L848.6 218.1L851.6 217.3L854.5 216.5L857.4 215.7L860.3 214.8L863.3 214L866.2 213.1L869.1 212.3L872 211.4L874.9 210.5L877.8 209.5L880.7 208.6L883.6 207.7L886.5 206.7L889.4 205.7L892.3 204.8L895.2 203.8L898 202.8L900.9 201.8L903.8 200.8L906.6 199.8L909.5 198.8L912.4 197.7L915.2 196.6L918 195.5L920.8 194.2L923.3 192.7L925.8 191L928.2 189.1L930.5 187" stroke="#48e600" stroke-width="2"/>
<path d="M790 232.4L793 232.1L796 231.8L799 231.4L802 231L805 230.6L807.9 230.1L810.9 229.7L813.9 229.1L816.8 228.5L819.8 227.9L822.7 227.2L825.6 226.5L828.6 225.8L831.5 225.1L834.4 224.4L837.4 223.7L840.3 223L843.2 222.3L846.1 221.6L849.1 220.9L852 220.1L854.9 219.4L857.8 218.6L860.8 217.8L863.7 217.1L866.6 216.3L869.5 215.5L872.4 214.7L875.3 213.9L878.2 213L881.1 212.2L884 211.3L886.9 210.4L889.8 209.6L892.6 208.7L895.5 207.7L898.4 206.8L901.2 205.9L904 204.9L906.9 203.9L909.7 202.9L912.6 201.8L915.4 200.7L918.1 199.5L920.8 198.1L923.3 196.6L925.8 194.9L928.2 193L930.5 191" stroke="#48e600" stroke-width="2"/>
<path d="M818 232.4L821 231.9L824.1 231.4L827.1 230.8L830.1 230.2L833.1 229.6L836.1 229L839.1 228.4L842.1 227.8L845.1 227.1L848.1 226.4L851.1 225.7L854.1 225L857.1 224.3L860.1 223.6L863.1 222.9L866.1 222.1L869.1 221.3L872.1 220.5L875 219.7L878 218.8L880.9 217.9L883.8 216.9L886.7 216L889.6 214.9L892.4 213.7L895.2 212.5L897.9 211.1L900.7 209.7L903.5 208.4L906.3 207.1L909.1 205.9L911.9 204.7L914.8 203.5L917.6 202.2L920.3 200.9L923 199.4L925.5 197.7L928 195.9L930.5 194" stroke="#48e600" stroke-width="2"/>
<path d="M800 230.5L803 230.2L806.1 229.9L809.1 229.6L812.1 229.3L815.1 229L818.2 228.6L821.2 228.3L824.2 227.9L827.2 227.6L830.2 227.2L833.2 226.8L836.3 226.4L839.3 226L842.3 225.5L845.3 225.1L848.3 224.6L851.3 224.2L854.3 223.7L857.3 223.2L860.3 222.7L863.3 222.1L866.3 221.5L869.3 220.9L872.2 220.3L875.2 219.7L878.2 219L881.2 218.2L884.1 217.5L887.1 216.6L890 215.8L892.9 214.9L895.8 213.9L898.6 212.9L901.4 211.8L904.2 210.6L907 209.3L909.7 207.8L912.3 206.3L914.9 204.7L917.5 202.9L920 201.1L922.3 199L924.3 196.9L926 194.5L927.4 191.9L928.6 189L929.6 186L932.6 186L932.6 189.1L932.6 192.2L932.5 195.3L932.4 198.3L932 201.3L931 204.2L929.7 206.9L927.9 209.4L925.8 211.7L923.7 214L921.5 216.1L919.2 218.2L916.8 220L914.3 221.9L911.7 223.6L909.1 225.2L906.4 226.5L903.5 227.5L900.6 228.4L897.6 229.2L894.6 229.9L891.6 230.5L888.6 230.9L885.6 231.4L882.6 231.8L879.5 232.2L876.5 232.6L873.4 232.9L870.4 233.2L867.3 233.3L864.2 233.4L800 233.4Z" fill="#48e600" stroke="none"/>
<rect x="872" y="224.5" width="6" height="1" fill="#000" stroke="none"/>
<rect x="884" y="221.5" width="6" height="1" fill="#000" stroke="none"/>
<rect x="895" y="221.8" width="5" height="1" fill="#000" stroke="none"/>
<rect x="880" y="227.5" width="7" height="1" fill="#000" stroke="none"/>
<rect x="900" y="217.5" width="5" height="1" fill="#000" stroke="none"/>
<rect x="910" y="214" width="3" height="1" fill="#000" stroke="none"/>
<rect x="868" y="228.8" width="5" height="1" fill="#000" stroke="none"/>
<rect x="893" y="225.2" width="5" height="1" fill="#000" stroke="none"/>
<rect x="905" y="221.3" width="4" height="1" fill="#000" stroke="none"/>
<rect x="915" y="211.5" width="3" height="1" fill="#000" stroke="none"/>
<rect x="852" y="228.2" width="6" height="1" fill="#000" stroke="none"/>
<rect x="920" y="207" width="2" height="1" fill="#000" stroke="none"/>
<path d="M700.5 187L700.5 229" stroke="#48e600" stroke-width="1"/>
<path d="M694 184.6L698.2 181.2L700.4 184.4" stroke="#48e600" stroke-width="1"/>
<path d="M710.5 232L710.5 186L702.8 185.2L702.8 183.6L708.5 179.1L714.6 178L715.9 179.9L717.3 182.4L718.1 192.8L718.9 228.5L718.9 232Z" fill="#48e600" stroke="none"/>
<rect x="711.6" y="187.5" width="1.2" height="13.5" fill="#000" stroke="none"/>
<rect x="711.6" y="207" width="1.2" height="12" fill="#000" stroke="none"/>
<path d="M600 232.2L620 231.2L660 230.2L694 228.9L720 228.4L800 228.4L838 229.2L838 234L600 234Z" fill="#48e600" stroke="none"/>
<rect x="690" y="230.3" width="2" height="1" fill="#000" stroke="none"/>
<rect x="718" y="231.2" width="1.4" height="1" fill="#000" stroke="none"/>
<rect x="731" y="232" width="1.4" height="1" fill="#000" stroke="none"/>
<rect x="752" y="230.4" width="3" height="1" fill="#000" stroke="none"/>
<rect x="776" y="231.3" width="3" height="1" fill="#000" stroke="none"/>
<path d="M931.2 61L933 61L933 199L928.8 199L929.5 186L930.4 150L931 110L931.2 75Z" fill="#48e600" stroke="none"/>
<path d="M89 440.3L933 253.6" stroke="#ff0000" stroke-width="2"/>
<path d="M89 642.2L933 642.2" stroke="#a800f8" stroke-width="3"/>
<path d="M89 641.3L95 641.3" stroke="#a800f8" stroke-width="1"/>
<path d="M430 641.2L480 640.4L560 639.4L600 638.4L640 636.9L700 635.8L760 635.9L800 636.6L830 637.9L830 643.7L430 643.7Z" fill="#a800f8" stroke="none"/>
<path d="M712 641.4L713.5 641.4L715 641.4L716.5 641.4L718 641.4L719.5 641.4L721 641.4L722.5 641.4L724 641.4L725.5 641.4L727 641.4L728.5 641.4L730 641.4L731.5 641.4L733 641.4L734.5 641.4L736 641.4L737.5 641.4L739 641.4L740.5 641.3L742 641.3L743.5 641.3L745 641.3L746.5 641.3L748 641.3L749.5 641.3L751 641.2L752.5 641.2L754 641.2L755.5 641.1L757 641.1L758.5 641L760 641L761.5 640.9L763 640.8L764.5 640.7L766 640.6L767.5 640.5L769 640.3L770.5 640.1L772 639.9L773.5 639.7L775 639.4L776.5 639.1L778 638.7L779.5 638.2L781 637.7L782.5 637.1L784 636.3L785.5 635.5L787 634.6L788.5 633.4L790 632.2L791.5 630.7L793 629L794.5 627.1L796 624.9L797.5 622.4L799 619.6L800.5 616.4L802 612.9L803.5 609L805 604.7L806.5 600.1L808 595.1L809.5 589.7L811 584L812.5 578.1L814 572L815.5 565.7L817 559.4L818.5 553.2L820 547L821.5 541L823 535.3L824.5 529.8L826 524.6L827.5 519.9L829 515.5L830.5 511.5L832 507.8L833.5 504.6L835 501.6L836.5 499L838 496.7L839.5 494.7L841 493L842.5 491.4L844 490.1L845.5 488.9L847 487.9L848.5 487L850 486.3L851.5 485.6L853 485.1L854.5 484.6L856 484.2L857.5 483.8L859 483.5L860.5 483.2L862 483L863.5 482.8L865 482.7L866.5 482.5L868 482.4L869.5 482.3L871 482.2L872.5 482.1L874 482.1L875.5 482L877 482L878.5 481.9L880 481.9L881.5 481.9L883 481.8L884.5 481.8L886 481.8L887.5 481.8L889 481.8L890.5 481.8L892 481.8L893.5 481.7L895 481.7L896.5 481.7L898 481.7L899.5 481.7L901 481.7L902.5 481.7L904 481.7L905.5 481.7L907 481.7L908.5 481.7L910 481.7L911.5 481.7L913 481.7L914.5 481.7L916 481.7L917.5 481.7L919 481.7L920.5 481.7L922 481.7L923.5 481.7L925 481.7L926.5 481.7L928 481.7L929.5 481.7L931.5 480.5L933 477.7" stroke="#a800f8" stroke-width="2"/>
<path d="M832.4 641.4L833.9 641.4L835.4 641.4L836.9 641.4L838.4 641.4L839.9 641.4L841.4 641.4L842.9 641.4L844.4 641.4L845.9 641.3L847.4 641.3L848.9 641.3L850.4 641.3L851.9 641.2L853.4 641.1L854.9 641L856.4 640.9L857.9 640.7L859.4 640.5L860.9 640.1L862.4 639.6L863.9 638.9L865.4 638L866.9 636.7L868.4 635L869.9 632.6L871.4 629.5L872.9 625.4L874.4 620.1L875.9 613.3L877.4 604.9L878.9 595L880.4 583.5L881.9 571.1L883.4 558.1L884.9 545.3L886.4 533.3L887.9 522.6L889.4 513.5L890.9 506L892.4 500L893.9 495.4L895.4 491.8L896.9 489.1L898.4 487.1L899.9 485.7L901.4 484.6L902.9 483.8L904.4 483.2L905.9 482.8L907.4 482.5L908.9 482.3L910.4 482.1L911.9 482L913.4 481.9L914.9 481.9L916.4 481.8L917.9 481.8L919.4 481.8L920.9 481.7L922.4 481.7L923.9 481.7L925.4 481.7L926.9 481.7L928.4 481.7L929.9 481.7L933 481.7" stroke="#a800f8" stroke-width="2"/>
<path d="M746.2 641.4L747.7 641.4L749.2 641.4L750.7 641.4L752.2 641.4L753.7 641.4L755.2 641.4L756.7 641.4L758.2 641.4L759.7 641.4L761.2 641.4L762.7 641.4L764.2 641.4L765.7 641.4L767.2 641.4L768.7 641.4L770.2 641.4L771.7 641.4L773.2 641.3L774.7 641.3L776.2 641.3L777.7 641.3L779.2 641.3L780.7 641.3L782.2 641.3L783.7 641.2L785.2 641.2L786.7 641.2L788.2 641.1L789.7 641.1L791.2 641L792.7 640.9L794.2 640.8L795.7 640.7L797.2 640.6L798.7 640.5L800.2 640.3L801.7 640.1L803.2 639.9L804.7 639.6L806.2 639.3L807.7 638.9L809.2 638.4L810.7 637.9L812.2 637.2L813.7 636.5L815.2 635.6L816.7 634.6L818.2 633.4L819.7 632L821.2 630.3L822.7 628.5L824.2 626.3L825.7 623.9L827.2 621.1L828.7 617.9L830.2 614.4L831.7 610.5L833.2 606.1L834.7 601.4L836.2 596.3L837.7 590.9L839.2 585.2L840.7 579.3L842.2 573.3L843.7 567.2L845.2 561.2L846.7 555.3L848.2 549.6L849.7 544.1L851.2 539L852.7 534.3L854.2 529.9L855.7 526L857.2 522.4L858.7 519.2L860.2 516.4L861.7 513.9L863.2 511.8L864.7 509.9L866.2 508.2L867.7 506.8L869.2 505.6L870.7 504.6L872.2 503.7L873.7 502.9L875.2 502.3L876.7 501.7L878.2 501.3L879.7 500.9L881.2 500.5L882.7 500.3L884.2 500L885.7 499.8L887.2 499.6L888.7 499.5L890.2 499.4L891.7 499.3L893.2 499.2L894.7 499.1L896.2 499L897.7 499L899.2 498.9L900.7 498.9L902.2 498.9L903.7 498.8L905.2 498.8L906.7 498.8L908.2 498.8L909.7 498.8L911.2 498.8L912.7 498.8L914.2 498.7L915.7 498.7L917.2 498.7L918.7 498.7L920.2 498.7L921.7 498.7L923.2 498.7L924.7 498.7L926.2 498.7L927.7 498.7L929.2 498.7L931.5 497.5L933 494.7" stroke="#a800f8" stroke-width="2"/>
<path d="M844 641.4L845.5 641.4L847 641.4L848.5 641.4L850 641.4L851.5 641.4L853 641.4L854.5 641.4L856 641.4L857.5 641.4L859 641.3L860.5 641.3L862 641.3L863.5 641.2L865 641.1L866.5 641L868 640.9L869.5 640.7L871 640.4L872.5 640.1L874 639.6L875.5 638.8L877 637.8L878.5 636.5L880 634.6L881.5 632.1L883 628.8L884.5 624.4L886 618.7L887.5 611.6L889 603L890.5 593L892 581.8L893.5 570L895 558.3L896.5 547.1L898 537.1L899.5 528.5L901 521.4L902.5 515.7L904 511.3L905.5 508L907 505.5L908.5 503.6L910 502.3L911.5 501.3L913 500.5L914.5 500L916 499.7L917.5 499.4L919 499.2L920.5 499.1L922 499L923.5 498.9L925 498.8L926.5 498.8L928 498.8L929.5 498.7L933 498.7" stroke="#a800f8" stroke-width="2"/>
<path d="M764 641.4L765.5 641.4L767 641.4L768.5 641.4L770 641.4L771.5 641.4L773 641.4L774.5 641.4L776 641.4L777.5 641.4L779 641.4L780.5 641.4L782 641.4L783.5 641.4L785 641.4L786.5 641.4L788 641.4L789.5 641.3L791 641.3L792.5 641.3L794 641.3L795.5 641.3L797 641.3L798.5 641.2L800 641.2L801.5 641.2L803 641.1L804.5 641.1L806 641L807.5 640.9L809 640.8L810.5 640.7L812 640.6L813.5 640.4L815 640.2L816.5 639.9L818 639.6L819.5 639.3L821 638.8L822.5 638.3L824 637.7L825.5 637L827 636.1L828.5 635.1L830 633.8L831.5 632.4L833 630.7L834.5 628.7L836 626.4L837.5 623.7L839 620.7L840.5 617.2L842 613.3L843.5 609L845 604.3L846.5 599.2L848 593.8L849.5 588.2L851 582.3L852.5 576.4L854 570.6L855.5 564.8L857 559.3L858.5 554.1L860 549.3L861.5 544.8L863 540.8L864.5 537.2L866 534.1L867.5 531.3L869 528.8L870.5 526.8L872 525L873.5 523.4L875 522.1L876.5 521L878 520.1L879.5 519.3L881 518.7L882.5 518.1L884 517.7L885.5 517.3L887 517L888.5 516.7L890 516.5L891.5 516.3L893 516.1L894.5 516L896 515.9L897.5 515.8L899 515.8L900.5 515.7L902 515.6L903.5 515.6L905 515.6L906.5 515.5L908 515.5L909.5 515.5L911 515.5L912.5 515.5L914 515.5L915.5 515.4L917 515.4L918.5 515.4L920 515.4L921.5 515.4L923 515.4L924.5 515.4L926 515.4L927.5 515.4L929 515.4L931.5 514.2L933 511.4" stroke="#a800f8" stroke-width="2"/>
<path d="M847.5 641.4L849 641.4L850.5 641.4L852 641.4L853.5 641.4L855 641.4L856.5 641.4L858 641.4L859.5 641.4L861 641.4L862.5 641.3L864 641.3L865.5 641.3L867 641.2L868.5 641.2L870 641.1L871.5 641L873 640.8L874.5 640.6L876 640.2L877.5 639.8L879 639.1L880.5 638.3L882 637.1L883.5 635.4L885 633.2L886.5 630.3L888 626.4L889.5 621.4L891 615.1L892.5 607.5L894 598.7L895.5 588.8L897 578.4L898.5 568L900 558.1L901.5 549.3L903 541.7L904.5 535.4L906 530.4L907.5 526.5L909 523.6L910.5 521.4L912 519.7L913.5 518.5L915 517.7L916.5 517L918 516.6L919.5 516.2L921 516L922.5 515.8L924 515.7L925.5 515.6L927 515.6L928.5 515.5L930 515.5L933 515.4" stroke="#a800f8" stroke-width="2"/>
<path d="M767.5 641.4L769 641.4L770.5 641.4L772 641.4L773.5 641.4L775 641.4L776.5 641.4L778 641.4L779.5 641.4L781 641.4L782.5 641.4L784 641.4L785.5 641.4L787 641.4L788.5 641.4L790 641.4L791.5 641.4L793 641.3L794.5 641.3L796 641.3L797.5 641.3L799 641.3L800.5 641.3L802 641.2L803.5 641.2L805 641.1L806.5 641.1L808 641L809.5 640.9L811 640.8L812.5 640.7L814 640.5L815.5 640.3L817 640.1L818.5 639.8L820 639.4L821.5 639L823 638.5L824.5 637.9L826 637.1L827.5 636.2L829 635.2L830.5 633.9L832 632.3L833.5 630.5L835 628.4L836.5 626L838 623.1L839.5 619.9L841 616.2L842.5 612.1L844 607.6L845.5 602.8L847 597.7L848.5 592.4L850 587L851.5 581.5L853 576.2L854.5 571.1L856 566.3L857.5 561.8L859 557.7L860.5 554L862 550.8L863.5 547.9L865 545.5L866.5 543.4L868 541.6L869.5 540L871 538.7L872.5 537.7L874 536.8L875.5 536L877 535.4L878.5 534.9L880 534.5L881.5 534.1L883 533.8L884.5 533.6L886 533.4L887.5 533.2L889 533.1L890.5 533L892 532.9L893.5 532.8L895 532.8L896.5 532.7L898 532.7L899.5 532.6L901 532.6L902.5 532.6L904 532.6L905.5 532.6L907 532.6L908.5 532.5L910 532.5L911.5 532.5L913 532.5L914.5 532.5L916 532.5L917.5 532.5L919 532.5L920.5 532.5L922 532.5L923.5 532.5L925 532.5L926.5 532.5L928 532.5L929.5 532.5L931.5 531.3L933 528.5" stroke="#a800f8" stroke-width="2"/>
<path d="M843.5 641.4L845 641.4L846.5 641.4L848 641.4L849.5 641.4L851 641.4L852.5 641.4L854 641.4L855.5 641.4L857 641.4L858.5 641.3L860 641.3L861.5 641.3L863 641.3L864.5 641.2L866 641.1L867.5 641L869 640.9L870.5 640.7L872 640.4L873.5 640L875 639.4L876.5 638.7L878 637.6L879.5 636.2L881 634.3L882.5 631.8L884 628.4L885.5 624.1L887 618.7L888.5 612.1L890 604.5L891.5 595.9L893 587L894.5 578L896 569.4L897.5 561.8L899 555.2L900.5 549.8L902 545.5L903.5 542.1L905 539.6L906.5 537.7L908 536.3L909.5 535.2L911 534.5L912.5 533.9L914 533.5L915.5 533.2L917 533L918.5 532.9L920 532.8L921.5 532.7L923 532.6L924.5 532.6L926 532.6L927.5 532.6L929 532.5L933 532.5" stroke="#a800f8" stroke-width="2"/>
<path d="M761 641.4L762.5 641.4L764 641.4L765.5 641.4L767 641.4L768.5 641.4L770 641.4L771.5 641.4L773 641.4L774.5 641.4L776 641.4L777.5 641.4L779 641.4L780.5 641.4L782 641.4L783.5 641.4L785 641.4L786.5 641.3L788 641.3L789.5 641.3L791 641.3L792.5 641.3L794 641.2L795.5 641.2L797 641.1L798.5 641.1L800 641L801.5 640.9L803 640.8L804.5 640.6L806 640.4L807.5 640.2L809 639.9L810.5 639.6L812 639.2L813.5 638.7L815 638L816.5 637.3L818 636.3L819.5 635.2L821 633.9L822.5 632.2L824 630.3L825.5 628L827 625.4L828.5 622.4L830 618.9L831.5 615.1L833 610.8L834.5 606.3L836 601.5L837.5 596.6L839 591.6L840.5 586.7L842 582L843.5 577.5L845 573.4L846.5 569.7L848 566.4L849.5 563.5L851 561L852.5 558.8L854 557L855.5 555.5L857 554.2L858.5 553.1L860 552.2L861.5 551.5L863 550.9L864.5 550.5L866 550.1L867.5 549.8L869 549.5L870.5 549.3L872 549.1L873.5 549L875 548.9L876.5 548.8L878 548.7L879.5 548.6L881 548.6L882.5 548.6L884 548.5L885.5 548.5L887 548.5L888.5 548.5L890 548.5L891.5 548.4L893 548.4L894.5 548.4L896 548.4L897.5 548.4L899 548.4L900.5 548.4L902 548.4L903.5 548.4L905 548.4L906.5 548.4L908 548.4L909.5 548.4L911 548.4L912.5 548.4L914 548.4L915.5 548.4L917 548.4L918.5 548.4L920 548.4L921.5 548.4L923 548.4L924.5 548.4L926 548.4L927.5 548.4L929 548.4L931.5 547.2L933 544.4" stroke="#a800f8" stroke-width="2"/>
<path d="M808.5 641.4L810 641.4L811.5 641.4L813 641.4L814.5 641.4L816 641.4L817.5 641.4L819 641.4L820.5 641.4L822 641.4L823.5 641.4L825 641.4L826.5 641.4L828 641.3L829.5 641.3L831 641.3L832.5 641.3L834 641.2L835.5 641.2L837 641.1L838.5 641L840 640.9L841.5 640.8L843 640.6L844.5 640.3L846 640L847.5 639.6L849 639L850.5 638.3L852 637.4L853.5 636.2L855 634.6L856.5 632.7L858 630.3L859.5 627.4L861 623.8L862.5 619.6L864 614.7L865.5 609.2L867 603.3L868.5 597L870 590.7L871.5 584.5L873 578.7L874.5 573.4L876 568.7L877.5 564.7L879 561.4L880.5 558.6L882 556.4L883.5 554.6L885 553.2L886.5 552.1L888 551.2L889.5 550.6L891 550.1L892.5 549.7L894 549.4L895.5 549.1L897 549L898.5 548.8L900 548.7L901.5 548.7L903 548.6L904.5 548.5L906 548.5L907.5 548.5L909 548.5L910.5 548.4L912 548.4L913.5 548.4L915 548.4L916.5 548.4L918 548.4L919.5 548.4L921 548.4L922.5 548.4L924 548.4L925.5 548.4L927 548.4L928.5 548.4L930 548.4L933 548.4" stroke="#a800f8" stroke-width="2"/>
<path d="M756 641.4L757.5 641.4L759 641.4L760.5 641.4L762 641.4L763.5 641.4L765 641.4L766.5 641.4L768 641.4L769.5 641.4L771 641.4L772.5 641.4L774 641.4L775.5 641.4L777 641.4L778.5 641.3L780 641.3L781.5 641.3L783 641.3L784.5 641.3L786 641.2L787.5 641.2L789 641.1L790.5 641L792 640.9L793.5 640.7L795 640.6L796.5 640.3L798 640L799.5 639.6L801 639.1L802.5 638.5L804 637.7L805.5 636.8L807 635.6L808.5 634.1L810 632.2L811.5 630L813 627.4L814.5 624.3L816 620.7L817.5 616.7L819 612.3L820.5 607.7L822 602.9L823.5 598.1L825 593.5L826.5 589.1L828 585.1L829.5 581.5L831 578.4L832.5 575.8L834 573.6L835.5 571.7L837 570.2L838.5 569L840 568.1L841.5 567.3L843 566.7L844.5 566.2L846 565.8L847.5 565.5L849 565.2L850.5 565.1L852 564.9L853.5 564.8L855 564.7L856.5 564.6L858 564.6L859.5 564.5L861 564.5L862.5 564.5L864 564.5L865.5 564.5L867 564.4L868.5 564.4L870 564.4L871.5 564.4L873 564.4L874.5 564.4L876 564.4L877.5 564.4L879 564.4L880.5 564.4L882 564.4L883.5 564.4L885 564.4L886.5 564.4L888 564.4L889.5 564.4L891 564.4L892.5 564.4L894 564.4L895.5 564.4L897 564.4L898.5 564.4L900 564.4L901.5 564.4L903 564.4L904.5 564.4L906 564.4L907.5 564.4L909 564.4L910.5 564.4L912 564.4L913.5 564.4L915 564.4L916.5 564.4L918 564.4L919.5 564.4L921 564.4L922.5 564.4L924 564.4L925.5 564.4L927 564.4L928.5 564.4L930 564.4L931.5 563.2L933 560.4" stroke="#a800f8" stroke-width="2"/>
<path d="M790.5 641.4L792 641.4L793.5 641.4L795 641.4L796.5 641.4L798 641.4L799.5 641.4L801 641.4L802.5 641.4L804 641.4L805.5 641.4L807 641.4L808.5 641.4L810 641.4L811.5 641.4L813 641.3L814.5 641.3L816 641.3L817.5 641.3L819 641.3L820.5 641.2L822 641.2L823.5 641.1L825 641L826.5 640.9L828 640.7L829.5 640.6L831 640.3L832.5 640L834 639.6L835.5 639.1L837 638.5L838.5 637.7L840 636.8L841.5 635.6L843 634.1L844.5 632.2L846 630L847.5 627.4L849 624.3L850.5 620.7L852 616.7L853.5 612.3L855 607.7L856.5 602.9L858 598.1L859.5 593.5L861 589.1L862.5 585.1L864 581.5L865.5 578.4L867 575.8L868.5 573.6L870 571.7L871.5 570.2L873 569L874.5 568.1L876 567.3L877.5 566.7L879 566.2L880.5 565.8L882 565.5L883.5 565.2L885 565.1L886.5 564.9L888 564.8L889.5 564.7L891 564.6L892.5 564.6L894 564.5L895.5 564.5L897 564.5L898.5 564.5L900 564.5L901.5 564.4L903 564.4L904.5 564.4L906 564.4L907.5 564.4L909 564.4L910.5 564.4L912 564.4L913.5 564.4L915 564.4L916.5 564.4L918 564.4L919.5 564.4L921 564.4L922.5 564.4L924 564.4L925.5 564.4L927 564.4L928.5 564.4L930 564.4L933 564.4" stroke="#a800f8" stroke-width="2"/>
<path d="M834.5 641.4L836 641.4L837.5 641.4L839 641.4L840.5 641.4L842 641.4L843.5 641.4L845 641.4L846.5 641.4L848 641.4L849.5 641.4L851 641.3L852.5 641.3L854 641.3L855.5 641.3L857 641.2L858.5 641.1L860 641L861.5 640.9L863 640.7L864.5 640.4L866 640L867.5 639.5L869 638.7L870.5 637.7L872 636.4L873.5 634.6L875 632.2L876.5 629.2L878 625.3L879.5 620.7L881 615.3L882.5 609.3L884 602.9L885.5 596.5L887 590.5L888.5 585.1L890 580.5L891.5 576.6L893 573.6L894.5 571.2L896 569.4L897.5 568.1L899 567.1L900.5 566.3L902 565.8L903.5 565.4L905 565.1L906.5 564.9L908 564.8L909.5 564.7L911 564.6L912.5 564.5L914 564.5L915.5 564.5L917 564.5L918.5 564.4L920 564.4L921.5 564.4L923 564.4L924.5 564.4L926 564.4L927.5 564.4L929 564.4L933 564.4" stroke="#a800f8" stroke-width="2"/>
<path d="M736.5 641.4L738 641.4L739.5 641.4L741 641.4L742.5 641.4L744 641.4L745.5 641.4L747 641.4L748.5 641.4L750 641.4L751.5 641.4L753 641.4L754.5 641.4L756 641.4L757.5 641.4L759 641.3L760.5 641.3L762 641.3L763.5 641.3L765 641.2L766.5 641.2L768 641.1L769.5 641L771 640.9L772.5 640.7L774 640.5L775.5 640.2L777 639.8L778.5 639.4L780 638.7L781.5 638L783 637L784.5 635.7L786 634.1L787.5 632.2L789 629.9L790.5 627.1L792 623.9L793.5 620.3L795 616.4L796.5 612.3L798 608.1L799.5 604.1L801 600.3L802.5 596.8L804 593.7L805.5 591.1L807 588.9L808.5 587.1L810 585.6L811.5 584.5L813 583.6L814.5 582.8L816 582.3L817.5 581.8L819 581.5L820.5 581.2L822 581L823.5 580.9L825 580.8L826.5 580.7L828 580.6L829.5 580.6L831 580.5L832.5 580.5L834 580.5L835.5 580.5L837 580.4L838.5 580.4L840 580.4L841.5 580.4L843 580.4L844.5 580.4L846 580.4L847.5 580.4L849 580.4L850.5 580.4L852 580.4L853.5 580.4L855 580.4L856.5 580.4L858 580.4L859.5 580.4L861 580.4L862.5 580.4L864 580.4L865.5 580.4L867 580.4L868.5 580.4L870 580.4L871.5 580.4L873 580.4L874.5 580.4L876 580.4L877.5 580.4L879 580.4L880.5 580.4L882 580.4L883.5 580.4L885 580.4L886.5 580.4L888 580.4L889.5 580.4L891 580.4L892.5 580.4L894 580.4L895.5 580.4L897 580.4L898.5 580.4L900 580.4L901.5 580.4L903 580.4L904.5 580.4L906 580.4L907.5 580.4L909 580.4L910.5 580.4L912 580.4L913.5 580.4L915 580.4L916.5 580.4L918 580.4L919.5 580.4L921 580.4L922.5 580.4L924 580.4L925.5 580.4L927 580.4L928.5 580.4L930 580.4L931.5 579.2L933 576.4" stroke="#a800f8" stroke-width="2"/>
<path d="M754 641.4L755.5 641.4L757 641.4L758.5 641.4L760 641.4L761.5 641.4L763 641.4L764.5 641.4L766 641.4L767.5 641.4L769 641.4L770.5 641.4L772 641.4L773.5 641.4L775 641.4L776.5 641.4L778 641.3L779.5 641.3L781 641.3L782.5 641.3L784 641.2L785.5 641.2L787 641.2L788.5 641.1L790 641L791.5 640.9L793 640.7L794.5 640.5L796 640.3L797.5 640L799 639.6L800.5 639.1L802 638.5L803.5 637.7L805 636.8L806.5 635.6L808 634.1L809.5 632.4L811 630.3L812.5 627.8L814 625L815.5 621.8L817 618.4L818.5 614.7L820 610.9L821.5 607.1L823 603.4L824.5 600L826 596.8L827.5 594L829 591.5L830.5 589.4L832 587.7L833.5 586.2L835 585L836.5 584.1L838 583.3L839.5 582.7L841 582.2L842.5 581.8L844 581.5L845.5 581.3L847 581.1L848.5 580.9L850 580.8L851.5 580.7L853 580.6L854.5 580.6L856 580.6L857.5 580.5L859 580.5L860.5 580.5L862 580.5L863.5 580.4L865 580.4L866.5 580.4L868 580.4L869.5 580.4L871 580.4L872.5 580.4L874 580.4L875.5 580.4L877 580.4L878.5 580.4L880 580.4L881.5 580.4L883 580.4L884.5 580.4L886 580.4L887.5 580.4L889 580.4L890.5 580.4L892 580.4L893.5 580.4L895 580.4L896.5 580.4L898 580.4L899.5 580.4L901 580.4L902.5 580.4L904 580.4L905.5 580.4L907 580.4L908.5 580.4L910 580.4L911.5 580.4L913 580.4L914.5 580.4L916 580.4L917.5 580.4L919 580.4L920.5 580.4L922 580.4L923.5 580.4L925 580.4L926.5 580.4L928 580.4L929.5 580.4L933 580.4" stroke="#a800f8" stroke-width="2"/>
<path d="M771 641.4L772.5 641.4L774 641.4L775.5 641.4L777 641.4L778.5 641.4L780 641.4L781.5 641.4L783 641.4L784.5 641.4L786 641.4L787.5 641.4L789 641.4L790.5 641.4L792 641.4L793.5 641.4L795 641.4L796.5 641.4L798 641.4L799.5 641.3L801 641.3L802.5 641.3L804 641.3L805.5 641.3L807 641.2L808.5 641.2L810 641.1L811.5 641.1L813 641L814.5 640.9L816 640.8L817.5 640.6L819 640.4L820.5 640.2L822 639.9L823.5 639.6L825 639.2L826.5 638.7L828 638.1L829.5 637.3L831 636.5L832.5 635.4L834 634.1L835.5 632.6L837 630.9L838.5 628.9L840 626.7L841.5 624.1L843 621.4L844.5 618.4L846 615.2L847.5 612L849 608.7L850.5 605.5L852 602.4L853.5 599.5L855 596.8L856.5 594.4L858 592.2L859.5 590.3L861 588.6L862.5 587.2L864 586L865.5 585L867 584.2L868.5 583.5L870 582.9L871.5 582.5L873 582.1L874.5 581.8L876 581.5L877.5 581.3L879 581.1L880.5 581L882 580.9L883.5 580.8L885 580.7L886.5 580.6L888 580.6L889.5 580.6L891 580.5L892.5 580.5L894 580.5L895.5 580.5L897 580.5L898.5 580.4L900 580.4L901.5 580.4L903 580.4L904.5 580.4L906 580.4L907.5 580.4L909 580.4L910.5 580.4L912 580.4L913.5 580.4L915 580.4L916.5 580.4L918 580.4L919.5 580.4L921 580.4L922.5 580.4L924 580.4L925.5 580.4L927 580.4L928.5 580.4L930 580.4L933 580.4" stroke="#a800f8" stroke-width="2"/>
<path d="M813.5 641.4L815 641.4L816.5 641.4L818 641.4L819.5 641.4L821 641.4L822.5 641.4L824 641.4L825.5 641.4L827 641.4L828.5 641.4L830 641.4L831.5 641.4L833 641.4L834.5 641.4L836 641.3L837.5 641.3L839 641.3L840.5 641.3L842 641.2L843.5 641.2L845 641.1L846.5 641L848 640.9L849.5 640.7L851 640.5L852.5 640.2L854 639.8L855.5 639.4L857 638.7L858.5 638L860 637L861.5 635.7L863 634.1L864.5 632.2L866 629.9L867.5 627.1L869 623.9L870.5 620.3L872 616.4L873.5 612.3L875 608.1L876.5 604.1L878 600.3L879.5 596.8L881 593.7L882.5 591.1L884 588.9L885.5 587.1L887 585.6L888.5 584.5L890 583.6L891.5 582.8L893 582.3L894.5 581.8L896 581.5L897.5 581.2L899 581L900.5 580.9L902 580.8L903.5 580.7L905 580.6L906.5 580.6L908 580.5L909.5 580.5L911 580.5L912.5 580.5L914 580.4L915.5 580.4L917 580.4L918.5 580.4L920 580.4L921.5 580.4L923 580.4L924.5 580.4L926 580.4L927.5 580.4L929 580.4L933 580.4" stroke="#a800f8" stroke-width="2"/>
<path d="M692.5 641.4L694 641.4L695.5 641.4L697 641.4L698.5 641.4L700 641.4L701.5 641.4L703 641.4L704.5 641.4L706 641.4L707.5 641.4L709 641.4L710.5 641.4L712 641.4L713.5 641.4L715 641.4L716.5 641.4L718 641.3L719.5 641.3L721 641.3L722.5 641.3L724 641.3L725.5 641.2L727 641.2L728.5 641.1L730 641L731.5 640.9L733 640.8L734.5 640.6L736 640.4L737.5 640.1L739 639.7L740.5 639.3L742 638.7L743.5 638L745 637.1L746.5 636L748 634.7L749.5 633.2L751 631.4L752.5 629.3L754 626.9L755.5 624.4L757 621.7L758.5 618.8L760 616L761.5 613.3L763 610.8L764.5 608.4L766 606.3L767.5 604.5L769 603L770.5 601.7L772 600.6L773.5 599.7L775 599L776.5 598.4L778 598L779.5 597.6L781 597.3L782.5 597.1L784 596.9L785.5 596.8L787 596.7L788.5 596.6L790 596.5L791.5 596.5L793 596.4L794.5 596.4L796 596.4L797.5 596.4L799 596.4L800.5 596.3L802 596.3L803.5 596.3L805 596.3L806.5 596.3L808 596.3L809.5 596.3L811 596.3L812.5 596.3L814 596.3L815.5 596.3L817 596.3L818.5 596.3L820 596.3L821.5 596.3L823 596.3L824.5 596.3L826 596.3L827.5 596.3L829 596.3L830.5 596.3L832 596.3L833.5 596.3L835 596.3L836.5 596.3L838 596.3L839.5 596.3L841 596.3L842.5 596.3L844 596.3L845.5 596.3L847 596.3L848.5 596.3L850 596.3L851.5 596.3L853 596.3L854.5 596.3L856 596.3L857.5 596.3L859 596.3L860.5 596.3L862 596.3L863.5 596.3L865 596.3L866.5 596.3L868 596.3L869.5 596.3L871 596.3L872.5 596.3L874 596.3L875.5 596.3L877 596.3L878.5 596.3L880 596.3L881.5 596.3L883 596.3L884.5 596.3L886 596.3L887.5 596.3L889 596.3L890.5 596.3L892 596.3L893.5 596.3L895 596.3L896.5 596.3L898 596.3L899.5 596.3L901 596.3L902.5 596.3L904 596.3L905.5 596.3L907 596.3L908.5 596.3L910 596.3L911.5 596.3L913 596.3L914.5 596.3L916 596.3L917.5 596.3L919 596.3L920.5 596.3L922 596.3L923.5 596.3L925 596.3L926.5 596.3L928 596.3L929.5 596.3L931.5 595.1L933 592.3" stroke="#a800f8" stroke-width="2"/>
<path d="M714.5 641.4L716 641.4L717.5 641.4L719 641.4L720.5 641.4L722 641.4L723.5 641.4L725 641.4L726.5 641.4L728 641.4L729.5 641.4L731 641.4L732.5 641.4L734 641.4L735.5 641.4L737 641.4L738.5 641.4L740 641.4L741.5 641.4L743 641.3L744.5 641.3L746 641.3L747.5 641.3L749 641.2L750.5 641.2L752 641.2L753.5 641.1L755 641L756.5 640.9L758 640.8L759.5 640.6L761 640.5L762.5 640.2L764 639.9L765.5 639.6L767 639.1L768.5 638.5L770 637.9L771.5 637L773 636L774.5 634.8L776 633.4L777.5 631.8L779 629.9L780.5 627.9L782 625.6L783.5 623.1L785 620.6L786.5 618L788 615.4L789.5 612.9L791 610.6L792.5 608.4L794 606.5L795.5 604.8L797 603.3L798.5 602.1L800 601L801.5 600.1L803 599.4L804.5 598.8L806 598.3L807.5 597.9L809 597.6L810.5 597.3L812 597.1L813.5 596.9L815 596.8L816.5 596.7L818 596.6L819.5 596.6L821 596.5L822.5 596.5L824 596.4L825.5 596.4L827 596.4L828.5 596.4L830 596.4L831.5 596.3L833 596.3L834.5 596.3L836 596.3L837.5 596.3L839 596.3L840.5 596.3L842 596.3L843.5 596.3L845 596.3L846.5 596.3L848 596.3L849.5 596.3L851 596.3L852.5 596.3L854 596.3L855.5 596.3L857 596.3L858.5 596.3L860 596.3L861.5 596.3L863 596.3L864.5 596.3L866 596.3L867.5 596.3L869 596.3L870.5 596.3L872 596.3L873.5 596.3L875 596.3L876.5 596.3L878 596.3L879.5 596.3L881 596.3L882.5 596.3L884 596.3L885.5 596.3L887 596.3L888.5 596.3L890 596.3L891.5 596.3L893 596.3L894.5 596.3L896 596.3L897.5 596.3L899 596.3L900.5 596.3L902 596.3L903.5 596.3L905 596.3L906.5 596.3L908 596.3L909.5 596.3L911 596.3L912.5 596.3L914 596.3L915.5 596.3L917 596.3L918.5 596.3L920 596.3L921.5 596.3L923 596.3L924.5 596.3L926 596.3L927.5 596.3L929 596.3L933 596.3" stroke="#a800f8" stroke-width="2"/>
<path d="M738 641.4L739.5 641.4L741 641.4L742.5 641.4L744 641.4L745.5 641.4L747 641.4L748.5 641.4L750 641.4L751.5 641.4L753 641.4L754.5 641.4L756 641.4L757.5 641.4L759 641.4L760.5 641.4L762 641.4L763.5 641.4L765 641.4L766.5 641.4L768 641.3L769.5 641.3L771 641.3L772.5 641.3L774 641.3L775.5 641.2L777 641.2L778.5 641.2L780 641.1L781.5 641L783 640.9L784.5 640.8L786 640.7L787.5 640.5L789 640.3L790.5 640.1L792 639.8L793.5 639.4L795 639L796.5 638.4L798 637.7L799.5 637L801 636L802.5 634.9L804 633.6L805.5 632.2L807 630.5L808.5 628.6L810 626.6L811.5 624.4L813 622L814.5 619.7L816 617.2L817.5 614.9L819 612.6L820.5 610.4L822 608.4L823.5 606.6L825 605L826.5 603.6L828 602.4L829.5 601.3L831 600.5L832.5 599.7L834 599.1L835.5 598.6L837 598.2L838.5 597.8L840 597.5L841.5 597.3L843 597.1L844.5 597L846 596.8L847.5 596.7L849 596.6L850.5 596.6L852 596.5L853.5 596.5L855 596.4L856.5 596.4L858 596.4L859.5 596.4L861 596.4L862.5 596.4L864 596.3L865.5 596.3L867 596.3L868.5 596.3L870 596.3L871.5 596.3L873 596.3L874.5 596.3L876 596.3L877.5 596.3L879 596.3L880.5 596.3L882 596.3L883.5 596.3L885 596.3L886.5 596.3L888 596.3L889.5 596.3L891 596.3L892.5 596.3L894 596.3L895.5 596.3L897 596.3L898.5 596.3L900 596.3L901.5 596.3L903 596.3L904.5 596.3L906 596.3L907.5 596.3L909 596.3L910.5 596.3L912 596.3L913.5 596.3L915 596.3L916.5 596.3L918 596.3L919.5 596.3L921 596.3L922.5 596.3L924 596.3L925.5 596.3L927 596.3L928.5 596.3L930 596.3L933 596.3" stroke="#a800f8" stroke-width="2"/>
<path d="M763 641.4L764.5 641.4L766 641.4L767.5 641.4L769 641.4L770.5 641.4L772 641.4L773.5 641.4L775 641.4L776.5 641.4L778 641.4L779.5 641.4L781 641.4L782.5 641.4L784 641.4L785.5 641.4L787 641.4L788.5 641.4L790 641.4L791.5 641.4L793 641.3L794.5 641.3L796 641.3L797.5 641.3L799 641.3L800.5 641.2L802 641.2L803.5 641.2L805 641.1L806.5 641L808 640.9L809.5 640.8L811 640.7L812.5 640.5L814 640.3L815.5 640.1L817 639.8L818.5 639.4L820 639L821.5 638.4L823 637.7L824.5 637L826 636L827.5 634.9L829 633.6L830.5 632.2L832 630.5L833.5 628.6L835 626.6L836.5 624.4L838 622L839.5 619.7L841 617.2L842.5 614.9L844 612.6L845.5 610.4L847 608.4L848.5 606.6L850 605L851.5 603.6L853 602.4L854.5 601.3L856 600.5L857.5 599.7L859 599.1L860.5 598.6L862 598.2L863.5 597.8L865 597.5L866.5 597.3L868 597.1L869.5 597L871 596.8L872.5 596.7L874 596.6L875.5 596.6L877 596.5L878.5 596.5L880 596.4L881.5 596.4L883 596.4L884.5 596.4L886 596.4L887.5 596.4L889 596.3L890.5 596.3L892 596.3L893.5 596.3L895 596.3L896.5 596.3L898 596.3L899.5 596.3L901 596.3L902.5 596.3L904 596.3L905.5 596.3L907 596.3L908.5 596.3L910 596.3L911.5 596.3L913 596.3L914.5 596.3L916 596.3L917.5 596.3L919 596.3L920.5 596.3L922 596.3L923.5 596.3L925 596.3L926.5 596.3L928 596.3L929.5 596.3L933 596.3" stroke="#a800f8" stroke-width="2"/>
<path d="M640.5 641.4L642 641.4L643.5 641.4L645 641.4L646.5 641.4L648 641.4L649.5 641.4L651 641.4L652.5 641.4L654 641.4L655.5 641.4L657 641.4L658.5 641.4L660 641.4L661.5 641.4L663 641.4L664.5 641.4L666 641.4L667.5 641.4L669 641.4L670.5 641.4L672 641.4L673.5 641.3L675 641.3L676.5 641.3L678 641.3L679.5 641.3L681 641.2L682.5 641.2L684 641.2L685.5 641.1L687 641L688.5 640.9L690 640.8L691.5 640.7L693 640.5L694.5 640.3L696 640.1L697.5 639.8L699 639.4L700.5 639L702 638.5L703.5 637.8L705 637.1L706.5 636.3L708 635.3L709.5 634.2L711 633L712.5 631.6L714 630.1L715.5 628.6L717 627L718.5 625.4L720 623.9L721.5 622.4L723 620.9L724.5 619.6L726 618.4L727.5 617.4L729 616.4L730.5 615.6L732 614.9L733.5 614.4L735 613.9L736.5 613.5L738 613.1L739.5 612.8L741 612.6L742.5 612.4L744 612.3L745.5 612.1L747 612L748.5 612L750 611.9L751.5 611.8L753 611.8L754.5 611.8L756 611.7L757.5 611.7L759 611.7L760.5 611.7L762 611.7L763.5 611.6L765 611.6L766.5 611.6L768 611.6L769.5 611.6L771 611.6L772.5 611.6L774 611.6L775.5 611.6L777 611.6L778.5 611.6L780 611.6L781.5 611.6L783 611.6L784.5 611.6L786 611.6L787.5 611.6L789 611.6L790.5 611.6L792 611.6L793.5 611.6L795 611.6L796.5 611.6L798 611.6L799.5 611.6L801 611.6L802.5 611.6L804 611.6L805.5 611.6L807 611.6L808.5 611.6L810 611.6L811.5 611.6L813 611.6L814.5 611.6L816 611.6L817.5 611.6L819 611.6L820.5 611.6L822 611.6L823.5 611.6L825 611.6L826.5 611.6L828 611.6L829.5 611.6L831 611.6L832.5 611.6L834 611.6L835.5 611.6L837 611.6L838.5 611.6L840 611.6L841.5 611.6L843 611.6L844.5 611.6L846 611.6L847.5 611.6L849 611.6L850.5 611.6L852 611.6L853.5 611.6L855 611.6L856.5 611.6L858 611.6L859.5 611.6L861 611.6L862.5 611.6L864 611.6L865.5 611.6L867 611.6L868.5 611.6L870 611.6L871.5 611.6L873 611.6L874.5 611.6L876 611.6L877.5 611.6L879 611.6L880.5 611.6L882 611.6L883.5 611.6L885 611.6L886.5 611.6L888 611.6L889.5 611.6L891 611.6L892.5 611.6L894 611.6L895.5 611.6L897 611.6L898.5 611.6L900 611.6L901.5 611.6L903 611.6L904.5 611.6L906 611.6L907.5 611.6L909 611.6L910.5 611.6L912 611.6L913.5 611.6L915 611.6L916.5 611.6L918 611.6L919.5 611.6L921 611.6L922.5 611.6L924 611.6L925.5 611.6L927 611.6L928.5 611.6L930 611.6L931.5 610.4L933 607.6" stroke="#a800f8" stroke-width="2"/>
<path d="M662 641.4L663.5 641.4L665 641.4L666.5 641.4L668 641.4L669.5 641.4L671 641.4L672.5 641.4L674 641.4L675.5 641.4L677 641.4L678.5 641.4L680 641.4L681.5 641.4L683 641.4L684.5 641.4L686 641.4L687.5 641.4L689 641.4L690.5 641.4L692 641.4L693.5 641.4L695 641.4L696.5 641.4L698 641.4L699.5 641.3L701 641.3L702.5 641.3L704 641.3L705.5 641.3L707 641.3L708.5 641.2L710 641.2L711.5 641.2L713 641.1L714.5 641.1L716 641L717.5 640.9L719 640.8L720.5 640.7L722 640.5L723.5 640.4L725 640.1L726.5 639.9L728 639.6L729.5 639.3L731 638.9L732.5 638.4L734 637.8L735.5 637.2L737 636.5L738.5 635.7L740 634.8L741.5 633.7L743 632.6L744.5 631.4L746 630.1L747.5 628.8L749 627.4L750.5 626L752 624.6L753.5 623.3L755 622L756.5 620.8L758 619.6L759.5 618.6L761 617.6L762.5 616.8L764 616L765.5 615.4L767 614.8L768.5 614.3L770 613.9L771.5 613.5L773 613.2L774.5 612.9L776 612.7L777.5 612.5L779 612.4L780.5 612.2L782 612.1L783.5 612L785 612L786.5 611.9L788 611.9L789.5 611.8L791 611.8L792.5 611.7L794 611.7L795.5 611.7L797 611.7L798.5 611.7L800 611.7L801.5 611.6L803 611.6L804.5 611.6L806 611.6L807.5 611.6L809 611.6L810.5 611.6L812 611.6L813.5 611.6L815 611.6L816.5 611.6L818 611.6L819.5 611.6L821 611.6L822.5 611.6L824 611.6L825.5 611.6L827 611.6L828.5 611.6L830 611.6L831.5 611.6L833 611.6L834.5 611.6L836 611.6L837.5 611.6L839 611.6L840.5 611.6L842 611.6L843.5 611.6L845 611.6L846.5 611.6L848 611.6L849.5 611.6L851 611.6L852.5 611.6L854 611.6L855.5 611.6L857 611.6L858.5 611.6L860 611.6L861.5 611.6L863 611.6L864.5 611.6L866 611.6L867.5 611.6L869 611.6L870.5 611.6L872 611.6L873.5 611.6L875 611.6L876.5 611.6L878 611.6L879.5 611.6L881 611.6L882.5 611.6L884 611.6L885.5 611.6L887 611.6L888.5 611.6L890 611.6L891.5 611.6L893 611.6L894.5 611.6L896 611.6L897.5 611.6L899 611.6L900.5 611.6L902 611.6L903.5 611.6L905 611.6L906.5 611.6L908 611.6L909.5 611.6L911 611.6L912.5 611.6L914 611.6L915.5 611.6L917 611.6L918.5 611.6L920 611.6L921.5 611.6L923 611.6L924.5 611.6L926 611.6L927.5 611.6L929 611.6L933 611.6" stroke="#a800f8" stroke-width="2"/>
<path d="M702 641.4L703.5 641.4L705 641.4L706.5 641.4L708 641.4L709.5 641.4L711 641.4L712.5 641.4L714 641.4L715.5 641.4L717 641.4L718.5 641.4L720 641.4L721.5 641.4L723 641.4L724.5 641.4L726 641.4L727.5 641.4L729 641.4L730.5 641.4L732 641.4L733.5 641.4L735 641.4L736.5 641.4L738 641.4L739.5 641.3L741 641.3L742.5 641.3L744 641.3L745.5 641.3L747 641.3L748.5 641.2L750 641.2L751.5 641.2L753 641.1L754.5 641.1L756 641L757.5 640.9L759 640.8L760.5 640.7L762 640.5L763.5 640.4L765 640.1L766.5 639.9L768 639.6L769.5 639.3L771 638.9L772.5 638.4L774 637.8L775.5 637.2L777 636.5L778.5 635.7L780 634.8L781.5 633.7L783 632.6L784.5 631.4L786 630.1L787.5 628.8L789 627.4L790.5 626L792 624.6L793.5 623.3L795 622L796.5 620.8L798 619.6L799.5 618.6L801 617.6L802.5 616.8L804 616L805.5 615.4L807 614.8L808.5 614.3L810 613.9L811.5 613.5L813 613.2L814.5 612.9L816 612.7L817.5 612.5L819 612.4L820.5 612.2L822 612.1L823.5 612L825 612L826.5 611.9L828 611.9L829.5 611.8L831 611.8L832.5 611.7L834 611.7L835.5 611.7L837 611.7L838.5 611.7L840 611.7L841.5 611.6L843 611.6L844.5 611.6L846 611.6L847.5 611.6L849 611.6L850.5 611.6L852 611.6L853.5 611.6L855 611.6L856.5 611.6L858 611.6L859.5 611.6L861 611.6L862.5 611.6L864 611.6L865.5 611.6L867 611.6L868.5 611.6L870 611.6L871.5 611.6L873 611.6L874.5 611.6L876 611.6L877.5 611.6L879 611.6L880.5 611.6L882 611.6L883.5 611.6L885 611.6L886.5 611.6L888 611.6L889.5 611.6L891 611.6L892.5 611.6L894 611.6L895.5 611.6L897 611.6L898.5 611.6L900 611.6L901.5 611.6L903 611.6L904.5 611.6L906 611.6L907.5 611.6L909 611.6L910.5 611.6L912 611.6L913.5 611.6L915 611.6L916.5 611.6L918 611.6L919.5 611.6L921 611.6L922.5 611.6L924 611.6L925.5 611.6L927 611.6L928.5 611.6L930 611.6L933 611.6" stroke="#a800f8" stroke-width="2"/>
<path d="M737 641.4L738.5 641.4L740 641.4L741.5 641.4L743 641.4L744.5 641.4L746 641.4L747.5 641.4L749 641.4L750.5 641.4L752 641.4L753.5 641.4L755 641.4L756.5 641.4L758 641.4L759.5 641.4L761 641.4L762.5 641.4L764 641.4L765.5 641.4L767 641.4L768.5 641.4L770 641.4L771.5 641.4L773 641.4L774.5 641.3L776 641.3L777.5 641.3L779 641.3L780.5 641.3L782 641.3L783.5 641.2L785 641.2L786.5 641.2L788 641.1L789.5 641.1L791 641L792.5 640.9L794 640.8L795.5 640.7L797 640.5L798.5 640.4L800 640.1L801.5 639.9L803 639.6L804.5 639.3L806 638.9L807.5 638.4L809 637.8L810.5 637.2L812 636.5L813.5 635.7L815 634.8L816.5 633.7L818 632.6L819.5 631.4L821 630.1L822.5 628.8L824 627.4L825.5 626L827 624.6L828.5 623.3L830 622L831.5 620.8L833 619.6L834.5 618.6L836 617.6L837.5 616.8L839 616L840.5 615.4L842 614.8L843.5 614.3L845 613.9L846.5 613.5L848 613.2L849.5 612.9L851 612.7L852.5 612.5L854 612.4L855.5 612.2L857 612.1L858.5 612L860 612L861.5 611.9L863 611.9L864.5 611.8L866 611.8L867.5 611.7L869 611.7L870.5 611.7L872 611.7L873.5 611.7L875 611.7L876.5 611.6L878 611.6L879.5 611.6L881 611.6L882.5 611.6L884 611.6L885.5 611.6L887 611.6L888.5 611.6L890 611.6L891.5 611.6L893 611.6L894.5 611.6L896 611.6L897.5 611.6L899 611.6L900.5 611.6L902 611.6L903.5 611.6L905 611.6L906.5 611.6L908 611.6L909.5 611.6L911 611.6L912.5 611.6L914 611.6L915.5 611.6L917 611.6L918.5 611.6L920 611.6L921.5 611.6L923 611.6L924.5 611.6L926 611.6L927.5 611.6L929 611.6L933 611.6" stroke="#a800f8" stroke-width="2"/>
<path d="M542 641.4L543.5 641.4L545 641.4L546.5 641.4L548 641.4L549.5 641.4L551 641.4L552.5 641.4L554 641.4L555.5 641.4L557 641.4L558.5 641.4L560 641.4L561.5 641.4L563 641.4L564.5 641.4L566 641.4L567.5 641.4L569 641.4L570.5 641.4L572 641.4L573.5 641.4L575 641.4L576.5 641.4L578 641.4L579.5 641.4L581 641.4L582.5 641.4L584 641.4L585.5 641.4L587 641.4L588.5 641.4L590 641.4L591.5 641.4L593 641.4L594.5 641.4L596 641.4L597.5 641.4L599 641.4L600.5 641.4L602 641.4L603.5 641.4L605 641.4L606.5 641.3L608 641.3L609.5 641.3L611 641.3L612.5 641.3L614 641.3L615.5 641.3L617 641.3L618.5 641.2L620 641.2L621.5 641.2L623 641.2L624.5 641.2L626 641.1L627.5 641.1L629 641L630.5 641L632 640.9L633.5 640.9L635 640.8L636.5 640.7L638 640.7L639.5 640.6L641 640.5L642.5 640.3L644 640.2L645.5 640.1L647 639.9L648.5 639.7L650 639.5L651.5 639.3L653 639.1L654.5 638.8L656 638.5L657.5 638.2L659 637.9L660.5 637.6L662 637.2L663.5 636.8L665 636.4L666.5 635.9L668 635.5L669.5 635L671 634.5L672.5 634L674 633.5L675.5 633.1L677 632.6L678.5 632.1L680 631.6L681.5 631.2L683 630.7L684.5 630.3L686 629.9L687.5 629.5L689 629.2L690.5 628.9L692 628.6L693.5 628.3L695 628L696.5 627.8L698 627.6L699.5 627.4L701 627.2L702.5 627L704 626.9L705.5 626.8L707 626.6L708.5 626.5L710 626.4L711.5 626.4L713 626.3L714.5 626.2L716 626.2L717.5 626.1L719 626.1L720.5 626L722 626L723.5 625.9L725 625.9L726.5 625.9L728 625.9L729.5 625.9L731 625.8L732.5 625.8L734 625.8L735.5 625.8L737 625.8L738.5 625.8L740 625.8L741.5 625.8L743 625.7L744.5 625.7L746 625.7L747.5 625.7L749 625.7L750.5 625.7L752 625.7L753.5 625.7L755 625.7L756.5 625.7L758 625.7L759.5 625.7L761 625.7L762.5 625.7L764 625.7L765.5 625.7L767 625.7L768.5 625.7L770 625.7L771.5 625.7L773 625.7L774.5 625.7L776 625.7L777.5 625.7L779 625.7L780.5 625.7L782 625.7L783.5 625.7L785 625.7L786.5 625.7L788 625.7L789.5 625.7L791 625.7L792.5 625.7L794 625.7L795.5 625.7L797 625.7L798.5 625.7L800 625.7L801.5 625.7L803 625.7L804.5 625.7L806 625.7L807.5 625.7L809 625.7L810.5 625.7L812 625.7L813.5 625.7L815 625.7L816.5 625.7L818 625.7L819.5 625.7L821 625.7L822.5 625.7L824 625.7L825.5 625.7L827 625.7L828.5 625.7L830 625.7L831.5 625.7L833 625.7L834.5 625.7L836 625.7L837.5 625.7L839 625.7L840.5 625.7L842 625.7L843.5 625.7L845 625.7L846.5 625.7L848 625.7L849.5 625.7L851 625.7L852.5 625.7L854 625.7L855.5 625.7L857 625.7L858.5 625.7L860 625.7L861.5 625.7L863 625.7L864.5 625.7L866 625.7L867.5 625.7L869 625.7L870.5 625.7L872 625.7L873.5 625.7L875 625.7L876.5 625.7L878 625.7L879.5 625.7L881 625.7L882.5 625.7L884 625.7L885.5 625.7L887 625.7L888.5 625.7L890 625.7L891.5 625.7L893 625.7L894.5 625.7L896 625.7L897.5 625.7L899 625.7L900.5 625.7L902 625.7L903.5 625.7L905 625.7L906.5 625.7L908 625.7L909.5 625.7L911 625.7L912.5 625.7L914 625.7L915.5 625.7L917 625.7L918.5 625.7L920 625.7L921.5 625.7L923 625.7L924.5 625.7L926 625.7L927.5 625.7L929 625.7L931.5 624.5L933 621.7" stroke="#a800f8" stroke-width="2"/>
<path d="M610 641.4L611.5 641.4L613 641.4L614.5 641.4L616 641.4L617.5 641.4L619 641.4L620.5 641.4L622 641.4L623.5 641.4L625 641.4L626.5 641.4L628 641.4L629.5 641.4L631 641.4L632.5 641.4L634 641.4L635.5 641.4L637 641.4L638.5 641.4L640 641.4L641.5 641.4L643 641.4L644.5 641.4L646 641.4L647.5 641.4L649 641.4L650.5 641.4L652 641.4L653.5 641.4L655 641.4L656.5 641.4L658 641.4L659.5 641.4L661 641.4L662.5 641.4L664 641.3L665.5 641.3L667 641.3L668.5 641.3L670 641.3L671.5 641.3L673 641.3L674.5 641.2L676 641.2L677.5 641.2L679 641.1L680.5 641.1L682 641.1L683.5 641L685 640.9L686.5 640.9L688 640.8L689.5 640.7L691 640.6L692.5 640.5L694 640.3L695.5 640.2L697 640L698.5 639.8L700 639.5L701.5 639.3L703 639L704.5 638.7L706 638.3L707.5 637.9L709 637.5L710.5 637L712 636.5L713.5 636L715 635.5L716.5 634.9L718 634.3L719.5 633.7L721 633.2L722.5 632.6L724 632L725.5 631.4L727 630.9L728.5 630.4L730 629.9L731.5 629.5L733 629.1L734.5 628.7L736 628.3L737.5 628L739 627.7L740.5 627.5L742 627.3L743.5 627.1L745 626.9L746.5 626.7L748 626.6L749.5 626.5L751 626.4L752.5 626.3L754 626.2L755.5 626.1L757 626.1L758.5 626L760 626L761.5 625.9L763 625.9L764.5 625.9L766 625.9L767.5 625.8L769 625.8L770.5 625.8L772 625.8L773.5 625.8L775 625.8L776.5 625.8L778 625.7L779.5 625.7L781 625.7L782.5 625.7L784 625.7L785.5 625.7L787 625.7L788.5 625.7L790 625.7L791.5 625.7L793 625.7L794.5 625.7L796 625.7L797.5 625.7L799 625.7L800.5 625.7L802 625.7L803.5 625.7L805 625.7L806.5 625.7L808 625.7L809.5 625.7L811 625.7L812.5 625.7L814 625.7L815.5 625.7L817 625.7L818.5 625.7L820 625.7L821.5 625.7L823 625.7L824.5 625.7L826 625.7L827.5 625.7L829 625.7L830.5 625.7L832 625.7L833.5 625.7L835 625.7L836.5 625.7L838 625.7L839.5 625.7L841 625.7L842.5 625.7L844 625.7L845.5 625.7L847 625.7L848.5 625.7L850 625.7L851.5 625.7L853 625.7L854.5 625.7L856 625.7L857.5 625.7L859 625.7L860.5 625.7L862 625.7L863.5 625.7L865 625.7L866.5 625.7L868 625.7L869.5 625.7L871 625.7L872.5 625.7L874 625.7L875.5 625.7L877 625.7L878.5 625.7L880 625.7L881.5 625.7L883 625.7L884.5 625.7L886 625.7L887.5 625.7L889 625.7L890.5 625.7L892 625.7L893.5 625.7L895 625.7L896.5 625.7L898 625.7L899.5 625.7L901 625.7L902.5 625.7L904 625.7L905.5 625.7L907 625.7L908.5 625.7L910 625.7L911.5 625.7L913 625.7L914.5 625.7L916 625.7L917.5 625.7L919 625.7L920.5 625.7L922 625.7L923.5 625.7L925 625.7L926.5 625.7L928 625.7L929.5 625.7L933 625.7" stroke="#a800f8" stroke-width="2"/>
<path d="M660 641.4L661.5 641.4L663 641.4L664.5 641.4L666 641.4L667.5 641.4L669 641.4L670.5 641.4L672 641.4L673.5 641.4L675 641.4L676.5 641.4L678 641.4L679.5 641.4L681 641.4L682.5 641.4L684 641.4L685.5 641.4L687 641.4L688.5 641.4L690 641.4L691.5 641.4L693 641.4L694.5 641.4L696 641.4L697.5 641.4L699 641.4L700.5 641.4L702 641.4L703.5 641.4L705 641.4L706.5 641.4L708 641.4L709.5 641.4L711 641.4L712.5 641.4L714 641.3L715.5 641.3L717 641.3L718.5 641.3L720 641.3L721.5 641.3L723 641.3L724.5 641.2L726 641.2L727.5 641.2L729 641.1L730.5 641.1L732 641.1L733.5 641L735 640.9L736.5 640.9L738 640.8L739.5 640.7L741 640.6L742.5 640.5L744 640.3L745.5 640.2L747 640L748.5 639.8L750 639.5L751.5 639.3L753 639L754.5 638.7L756 638.3L757.5 637.9L759 637.5L760.5 637L762 636.5L763.5 636L765 635.5L766.5 634.9L768 634.3L769.5 633.7L771 633.2L772.5 632.6L774 632L775.5 631.4L777 630.9L778.5 630.4L780 629.9L781.5 629.5L783 629.1L784.5 628.7L786 628.3L787.5 628L789 627.7L790.5 627.5L792 627.3L793.5 627.1L795 626.9L796.5 626.7L798 626.6L799.5 626.5L801 626.4L802.5 626.3L804 626.2L805.5 626.1L807 626.1L808.5 626L810 626L811.5 625.9L813 625.9L814.5 625.9L816 625.9L817.5 625.8L819 625.8L820.5 625.8L822 625.8L823.5 625.8L825 625.8L826.5 625.8L828 625.7L829.5 625.7L831 625.7L832.5 625.7L834 625.7L835.5 625.7L837 625.7L838.5 625.7L840 625.7L841.5 625.7L843 625.7L844.5 625.7L846 625.7L847.5 625.7L849 625.7L850.5 625.7L852 625.7L853.5 625.7L855 625.7L856.5 625.7L858 625.7L859.5 625.7L861 625.7L862.5 625.7L864 625.7L865.5 625.7L867 625.7L868.5 625.7L870 625.7L871.5 625.7L873 625.7L874.5 625.7L876 625.7L877.5 625.7L879 625.7L880.5 625.7L882 625.7L883.5 625.7L885 625.7L886.5 625.7L888 625.7L889.5 625.7L891 625.7L892.5 625.7L894 625.7L895.5 625.7L897 625.7L898.5 625.7L900 625.7L901.5 625.7L903 625.7L904.5 625.7L906 625.7L907.5 625.7L909 625.7L910.5 625.7L912 625.7L913.5 625.7L915 625.7L916.5 625.7L918 625.7L919.5 625.7L921 625.7L922.5 625.7L924 625.7L925.5 625.7L927 625.7L928.5 625.7L930 625.7L933 625.7" stroke="#a800f8" stroke-width="2"/>
<path d="M420 641.4L421.5 641.4L423 641.4L424.5 641.4L426 641.4L427.5 641.4L429 641.4L430.5 641.4L432 641.4L433.5 641.4L435 641.4L436.5 641.4L438 641.4L439.5 641.4L441 641.4L442.5 641.4L444 641.4L445.5 641.4L447 641.4L448.5 641.4L450 641.4L451.5 641.4L453 641.4L454.5 641.4L456 641.4L457.5 641.4L459 641.4L460.5 641.4L462 641.4L463.5 641.4L465 641.4L466.5 641.4L468 641.4L469.5 641.4L471 641.4L472.5 641.4L474 641.4L475.5 641.4L477 641.4L478.5 641.4L480 641.4L481.5 641.4L483 641.4L484.5 641.3L486 641.3L487.5 641.3L489 641.3L490.5 641.3L492 641.3L493.5 641.3L495 641.3L496.5 641.3L498 641.3L499.5 641.3L501 641.3L502.5 641.3L504 641.3L505.5 641.3L507 641.3L508.5 641.3L510 641.3L511.5 641.3L513 641.3L514.5 641.3L516 641.3L517.5 641.2L519 641.2L520.5 641.2L522 641.2L523.5 641.2L525 641.2L526.5 641.2L528 641.2L529.5 641.2L531 641.2L532.5 641.2L534 641.2L535.5 641.1L537 641.1L538.5 641.1L540 641.1L541.5 641.1L543 641.1L544.5 641.1L546 641L547.5 641L549 641L550.5 641L552 641L553.5 641L555 640.9L556.5 640.9L558 640.9L559.5 640.9L561 640.9L562.5 640.8L564 640.8L565.5 640.8L567 640.8L568.5 640.8L570 640.7L571.5 640.7L573 640.7L574.5 640.7L576 640.6L577.5 640.6L579 640.6L580.5 640.5L582 640.5L583.5 640.5L585 640.5L586.5 640.4L588 640.4L589.5 640.4L591 640.3L592.5 640.3L594 640.3L595.5 640.2L597 640.2L598.5 640.2L600 640.1L601.5 640.1L603 640.1L604.5 640.1L606 640L607.5 640L609 640L610.5 639.9L612 639.9L613.5 639.9L615 639.8L616.5 639.8L618 639.8L619.5 639.8L621 639.7L622.5 639.7L624 639.7L625.5 639.6L627 639.6L628.5 639.6L630 639.6L631.5 639.5L633 639.5L634.5 639.5L636 639.5L637.5 639.5L639 639.4L640.5 639.4L642 639.4L643.5 639.4L645 639.4L646.5 639.3L648 639.3L649.5 639.3L651 639.3L652.5 639.3L654 639.3L655.5 639.2L657 639.2L658.5 639.2L660 639.2L661.5 639.2L663 639.2L664.5 639.2L666 639.1L667.5 639.1L669 639.1L670.5 639.1L672 639.1L673.5 639.1L675 639.1L676.5 639.1L678 639.1L679.5 639.1L681 639.1L682.5 639.1L684 639L685.5 639L687 639L688.5 639L690 639L691.5 639L693 639L694.5 639L696 639L697.5 639L699 639L700.5 639L702 639L703.5 639L705 639L706.5 639L708 639L709.5 639L711 639L712.5 639L714 639L715.5 639L717 638.9L718.5 638.9L720 638.9L721.5 638.9L723 638.9L724.5 638.9L726 638.9L727.5 638.9L729 638.9L730.5 638.9L732 638.9L733.5 638.9L735 638.9L736.5 638.9L738 638.9L739.5 638.9L741 638.9L742.5 638.9L744 638.9L745.5 638.9L747 638.9L748.5 638.9L750 638.9L751.5 638.9L753 638.9L754.5 638.9L756 638.9L757.5 638.9L759 638.9L760.5 638.9L762 638.9L763.5 638.9L765 638.9L766.5 638.9L768 638.9L769.5 638.9L771 638.9L772.5 638.9L774 638.9L775.5 638.9L777 638.9L778.5 638.9L780 638.9L781.5 638.9L783 638.9L784.5 638.9L786 638.9L787.5 638.9L789 638.9L790.5 638.9L792 638.9L793.5 638.9L795 638.9L796.5 638.9L798 638.9L799.5 638.9L801 638.9L802.5 638.9L804 638.9L805.5 638.9L807 638.9L808.5 638.9L810 638.9L811.5 638.9L813 638.9L814.5 638.9L816 638.9L817.5 638.9L819 638.9L820.5 638.9L822 638.9L823.5 638.9L825 638.9L826.5 638.9L828 638.9L829.5 638.9L831 638.9L832.5 638.9L834 638.9L835.5 638.9L837 638.9L838.5 638.9L840 638.9L841.5 638.9L843 638.9L844.5 638.9L846 638.9L847.5 638.9L849 638.9L850.5 638.9L852 638.9L853.5 638.9L855 638.9L856.5 638.9L858 638.9L859.5 638.9L861 638.9L862.5 638.9L864 638.9L865.5 638.9L867 638.9L868.5 638.9L870 638.9L871.5 638.9L873 638.9L874.5 638.9L876 638.9L877.5 638.9L879 638.9L880.5 638.9L882 638.9L883.5 638.9L885 638.9L886.5 638.9L888 638.9L889.5 638.9L891 638.9L892.5 638.9L894 638.9L895.5 638.9L897 638.9L898.5 638.9L900 638.9L901.5 638.9L903 638.9L904.5 638.9L906 638.9L907.5 638.9L909 638.9L910.5 638.9L912 638.9L913.5 638.9L915 638.9L916.5 638.9L918 638.9L919.5 638.9L921 638.9L922.5 638.9L924 638.9L925.5 638.9L927 638.9L928.5 638.9L930 638.9L931.5 637.7L933 634.9" stroke="#a800f8" stroke-width="2"/>
<path d="M932.2 703.1L930.5 705.7L928.9 708.3L927.5 710.9L926.3 713.7L925.1 716.5L924 719.4L923.1 722.3L922.3 725.2L921.6 728.1L920.9 731.1L920.3 734L919.8 737L919.3 740.1L918.8 743.1L918.3 746.1L917.9 749.1L917.4 752.1L917 755.1L916.6 758.1L916.2 761.1L915.8 764.1L915.4 767.1L915.1 770.1L914.7 773.2L914.4 776.2L914 779.2L913.7 782.2L913.4 785.2L913 788.3L912.7 791.3L912.3 794.3L911.9 797.3L911.5 800.3L911.1 803.3L910.7 806.3L910.2 809.3L909.8 812.3L909.3 815.3L908.8 818.3L908.4 821.3L907.9 824.3L907.4 827.3L906.9 830.3L906.5 833.3L906 836.3L905.5 839.3L904.9 842.3L904.3 845.3L903.5 848.2L902.2 850.9L900.5 853.5L898.5 852L897.7 849.1L897.7 846.1L898 843.1L898.3 840L898.6 837L899 834L899.4 831L899.7 828L900 825L900.2 822L900.5 819L900.7 816L901 813L901.2 809.9L901.5 806.9L901.7 803.9L902 800.9L902.4 797.9L902.7 794.9L903.1 791.9L903.6 788.9L904.1 786L904.6 783L905.1 780L905.7 777L906.2 774L906.8 771.1L907.3 768.1L907.8 765.1L908.3 762.1L908.8 759.1L909.3 756.2L909.7 753.2L910.2 750.2L910.6 747.2L911.1 744.2L911.6 741.2L912.2 738.2L912.7 735.3L913.2 732.3L913.7 729.3L914.2 726.3L914.7 723.3L915 720.3L915.5 717.3L916 714.4L916.9 711.5L918.1 708.7L919.5 706L921 703.4Z" fill="#80550f" stroke="none"/>
<path d="M918.4 716L918.1 718L917.8 720L917.5 722L917.2 724L916.9 726L916.5 728L916.2 730" stroke="#1a1103" stroke-width="0.8"/>
<path d="M913.8 744L913.4 746L913.1 748L912.8 750L912.5 752L912.2 754L911.9 756L911.6 758" stroke="#1a1103" stroke-width="0.8"/>
<path d="M909.3 772L908.9 774L908.6 776L908.3 778L907.9 780L907.6 782L907.3 784L906.9 786" stroke="#1a1103" stroke-width="0.8"/>
<path d="M904.8 800L904.6 802L904.4 804L904.2 806L904.1 808L903.9 810L903.7 812L903.5 814" stroke="#1a1103" stroke-width="0.8"/>
<path d="M902.3 828L902.1 830L901.9 832L901.6 834L901.4 836L901.2 838L900.9 840L900.7 842" stroke="#1a1103" stroke-width="0.8"/>
<path d="M920.8 716L920.5 718L920.2 720L919.9 722L919.6 724L919.3 726L918.9 728L918.6 730" stroke="#1a1103" stroke-width="0.8"/>
<path d="M916.2 744L915.8 746L915.5 748L915.2 750L914.9 752L914.6 754L914.3 756L914 758" stroke="#1a1103" stroke-width="0.8"/>
<path d="M911.7 772L911.3 774L911 776L910.7 778L910.3 780L910 782L909.7 784L909.3 786" stroke="#1a1103" stroke-width="0.8"/>
<path d="M907.2 800L907 802L906.8 804L906.6 806L906.5 808L906.3 810L906.1 812L905.9 814" stroke="#1a1103" stroke-width="0.8"/>
<path d="M904.7 828L904.5 830L904.3 832L904 834L903.8 836L903.6 838L903.3 840L903.1 842" stroke="#1a1103" stroke-width="0.8"/>
<path d="M89 702.4L760 702" stroke="#80550f" stroke-width="1"/>
<path d="M151 704.9L700 704.6L860 705.2" stroke="#80550f" stroke-width="2"/>
<path d="M700 701.6L780 701L860 700.6L905 701L932.2 702.6L932.2 703.8L905 705.6L860 706.8L780 705.6L700 703Z" fill="#80550f" stroke="none"/>
<path d="M200 720.6L207 720.4" stroke="#80550f" stroke-width="1"/>
<path d="M207 720L210 720L213 720L216 720L219 720L222.1 720L225.1 720L228.1 720L231.1 720L234.1 720L237.1 720L240.1 720L243.1 720L246.1 720L249.1 720L252.2 720L255.2 720L258.2 720L261.2 720L264.2 720L267.2 719.9L270.2 719.9L273.2 719.9L276.2 719.9L279.2 719.9L282.3 719.9L285.3 719.9L288.3 719.9L291.3 719.9L294.3 719.9L297.3 719.9L300.3 719.9L303.3 719.9L306.3 719.9L309.3 719.9L312.4 719.9L315.4 719.9L318.4 719.9L321.4 719.9L324.4 719.9L327.4 719.9L330.4 719.9L333.4 719.9L336.4 719.9L339.5 719.9L342.5 719.9L345.5 719.9L348.5 719.9L351.5 719.9L354.5 719.9L357.5 719.9L360.5 719.9L363.5 719.9L366.5 719.9L369.6 719.9L372.6 719.9L375.6 719.9L378.6 719.9L381.6 719.9L384.6 719.8L387.6 719.8L390.6 719.8L393.6 719.8L396.6 719.8L399.7 719.8L402.7 719.8L405.7 719.8L408.7 719.8L411.7 719.8L414.7 719.8L417.7 719.8L420.7 719.8L423.7 719.8L426.8 719.8L429.8 719.8L432.8 719.8L435.8 719.8L438.8 719.8L441.8 719.8L444.8 719.8L447.8 719.8L450.8 719.8L453.8 719.8L456.9 719.8L459.9 719.8L462.9 719.8L465.9 719.8L468.9 719.8L471.9 719.8L474.9 719.8L477.9 719.8L480.9 719.8L483.9 719.8L487 719.8L490 719.8L493 719.8L496 719.8L499 719.7L502 719.7L505 719.7L508 719.7L511 719.7L514 719.7L517.1 719.7L520.1 719.7L523.1 719.7L526.1 719.7L529.1 719.7L532.1 719.7L535.1 719.7L538.1 719.7L541.1 719.7L544.2 719.7L547.2 719.7L550.2 719.7L553.2 719.7L556.2 719.7L559.2 719.7L562.2 719.7L565.2 719.7L568.2 719.7L571.2 719.7L574.3 719.7L577.3 719.7L580.3 719.7L583.3 719.7L586.3 719.7L589.3 719.7L592.3 719.7L595.3 719.7L598.3 719.7L601.3 719.7L604.4 719.7L607.4 719.7L610.4 719.7L613.4 719.7L616.4 719.7L619.4 719.7L622.4 719.7L625.4 719.7L628.4 719.6L631.5 719.6L634.5 719.6L637.5 719.6L640.5 719.6L643.5 719.6L646.5 719.6L649.5 719.6L652.5 719.6L655.5 719.6L658.5 719.6L661.6 719.6L664.6 719.6L667.6 719.6L670.6 719.6L673.6 719.6L676.6 719.6L679.6 719.6L682.6 719.6L685.6 719.6L688.6 719.6L691.7 719.6L694.7 719.6L697.7 719.6L700.7 719.6L703.7 719.6L706.7 719.6L709.7 719.6L712.7 719.6L715.7 719.6L718.8 719.6L721.8 719.6L724.8 719.6L727.8 719.6L730.8 719.6L733.8 719.6L736.8 719.6L739.8 719.6L742.8 719.6L745.8 719.6L748.9 719.6L751.9 719.6L754.9 719.6L757.9 719.6L760.9 719.6L763.9 719.6L766.9 719.6L769.9 719.6L772.9 719.6L775.9 719.6L779 719.6L782 719.5L785 719.5L788 719.5L791 719.5L794 719.5L797 719.5L800 719.5L803 719.5L806 719.5L809.1 719.5L812.1 719.5L815.1 719.5L818.1 719.5L821.1 719.5L824.1 719.5L827.1 719.5L830.1 719.5L833.1 719.5L836.2 719.5L839.2 719.5L842.2 719.5L845.2 719.5L848.2 719.5L851.2 719.4L854.2 719.4L857.2 719.4L860.2 719.4L863.2 719.4L866.3 719.4L869.3 719.4L872.3 719.4L875.3 719.4L878.3 719.4L881.3 719.4L884.4 719.3L887.4 719.3L890.4 719.3L893.4 719.2L896.4 719.1L899.4 719L902.3 718.3L905.1 717.3L907.6 715.7L909.9 713.6L912.3 711.8L914.8 710.1L917.3 708.4L919.7 706.5L921.9 704.5" stroke="#80550f" stroke-width="2"/>
<path d="M823.3 719L826.3 719L829.3 719L832.3 718.9L835.3 718.9L838.4 718.8L841.4 718.8L844.4 718.7L847.4 718.6L850.4 718.5L853.5 718.4L856.5 718.3L859.5 718.2L862.5 718L865.5 717.9L868.5 717.8L871.5 717.7L874.6 717.5L877.6 717.3L880.6 717.1L883.6 716.9L886.6 716.6L889.6 716.3L892.6 716L895.6 715.4L898.6 714.6L901.4 713.6L903.9 712.2L906.2 710.1L908.6 708.2L911.1 706.5L913.6 704.9L916.2 703.3L918.8 701.8L921.5 700.4" stroke="#80550f" stroke-width="1.6"/>
<path d="M838.3 720.9L841.3 720.9L844.4 720.9L847.5 720.9L850.5 720.9L853.6 720.9L856.6 720.9L859.7 720.8L862.7 720.8L865.8 720.8L868.8 720.8L871.9 720.8L874.9 720.7L878 720.7L881 720.7L884 720.6L887.1 720.6L890.2 720.4L893.3 720.1L896.3 719.7L899.3 719.1L902 718.3L904.7 716.8L907.3 714.9" stroke="#80550f" stroke-width="1"/>
<path d="M232 736.9L304 736.7" stroke="#80550f" stroke-width="1"/>
<path d="M304 736.3L307 736.3L310 736.3L313 736.3L316 736.3L319 736.3L322 736.3L325 736.3L328 736.3L331 736.3L334 736.3L337 736.3L340.1 736.2L343.1 736.2L346.1 736.2L349.1 736.2L352.1 736.2L355.1 736.2L358.1 736.2L361.1 736.2L364.1 736.2L367.1 736.2L370.1 736.2L373.1 736.2L376.1 736.2L379.1 736.2L382.1 736.2L385.1 736.2L388.1 736.2L391.1 736.2L394.1 736.2L397.1 736.2L400.1 736.2L403.1 736.2L406.1 736.1L409.2 736.1L412.2 736.1L415.2 736.1L418.2 736.1L421.2 736.1L424.2 736.1L427.2 736.1L430.2 736.1L433.2 736.1L436.2 736.1L439.2 736.1L442.2 736.1L445.2 736.1L448.2 736.1L451.2 736.1L454.2 736.1L457.2 736.1L460.2 736.1L463.2 736.1L466.2 736.1L469.2 736.1L472.2 736L475.2 736L478.3 736L481.3 736L484.3 736L487.3 736L490.3 736L493.3 736L496.3 736L499.3 736L502.3 736L505.3 736L508.3 736L511.3 736L514.3 736L517.3 736L520.3 736L523.3 736L526.3 736L529.3 736L532.3 736L535.3 736L538.3 735.9L541.3 735.9L544.3 735.9L547.3 735.9L550.4 735.9L553.4 735.9L556.4 735.9L559.4 735.9L562.4 735.9L565.4 735.9L568.4 735.9L571.4 735.9L574.4 735.9L577.4 735.9L580.4 735.9L583.4 735.9L586.4 735.9L589.4 735.9L592.4 735.9L595.4 735.9L598.4 735.9L601.4 735.8L604.4 735.8L607.4 735.8L610.4 735.8L613.4 735.8L616.4 735.8L619.5 735.8L622.5 735.8L625.5 735.8L628.5 735.8L631.5 735.8L634.5 735.8L637.5 735.8L640.5 735.8L643.5 735.8L646.5 735.8L649.5 735.8L652.5 735.8L655.5 735.8L658.5 735.8L661.5 735.8L664.5 735.8L667.5 735.8L670.5 735.8L673.5 735.8L676.5 735.8L679.5 735.8L682.5 735.8L685.5 735.7L688.6 735.7L691.6 735.7L694.6 735.7L697.6 735.7L700.6 735.7L703.6 735.7L706.6 735.7L709.6 735.7L712.6 735.7L715.6 735.7L718.6 735.7L721.6 735.7L724.6 735.7L727.6 735.7L730.6 735.7L733.6 735.7L736.6 735.7L739.6 735.7L742.6 735.7L745.6 735.7L748.6 735.7L751.6 735.7L754.6 735.7L757.7 735.7L760.7 735.7L763.7 735.7L766.7 735.7L769.7 735.7L772.7 735.6L775.7 735.6L778.7 735.6L781.7 735.6L784.7 735.6L787.7 735.6L790.7 735.6L793.7 735.6L796.7 735.6L799.7 735.6L802.7 735.6L805.7 735.6L808.7 735.6L811.7 735.6L814.7 735.6L817.7 735.6L820.7 735.6L823.7 735.5L826.8 735.5L829.8 735.5L832.8 735.5L835.8 735.5L838.8 735.5L841.8 735.5L844.8 735.5L847.8 735.5L850.8 735.5L853.8 735.5L856.8 735.4L859.8 735.4L862.8 735.4L865.8 735.4L868.8 735.4L871.8 735.4L874.8 735.4L877.9 735.4L880.9 735.3L883.9 735.3L886.9 735.3L889.9 735.2L892.9 735.2L895.8 735.1L898.8 734.6L901.7 733.6L904.3 732.3L906.6 730.3L908.9 728.3L911.5 726.4L913.8 724.4L915.4 722.1L916.5 719.5L917.4 716.6L917.8 713.4" stroke="#80550f" stroke-width="2"/>
<path d="M820.6 735L823.7 735L826.7 735L829.8 734.9L832.8 734.9L835.9 734.8L838.9 734.7L842 734.7L845 734.6L848 734.5L851.1 734.4L854.1 734.3L857.2 734.1L860.2 734L863.2 733.9L866.3 733.8L869.3 733.6L872.4 733.5L875.4 733.3L878.5 733.1L881.5 732.9L884.5 732.6L887.5 732.3L890.5 731.9L893.6 731.3L896.5 730.4L899.3 729.3L901.8 727.8L904.1 725.7L906.5 723.7L908.9 721.9L911.3 720L913.8 718.2L916.2 716.4" stroke="#80550f" stroke-width="1.6"/>
<path d="M835.6 736.9L838.7 736.9L841.8 736.9L844.8 736.9L847.9 736.9L851 736.9L854 736.9L857.1 736.8L860.1 736.8L863.2 736.8L866.2 736.8L869.3 736.8L872.3 736.7L875.3 736.7L878.4 736.7L881.4 736.6L884.5 736.6L887.5 736.4L890.6 736.1L893.7 735.7L896.6 735.1L899.4 734.3L902.1 732.8L904.6 730.9" stroke="#80550f" stroke-width="1"/>
<path d="M259 753.4L263 753.2" stroke="#80550f" stroke-width="1"/>
<path d="M263 752.8L266 752.8L269 752.8L272 752.8L275 752.8L278 752.8L281 752.8L284 752.8L287 752.7L290 752.7L293 752.7L296 752.7L299 752.7L302 752.7L305 752.7L308 752.7L311 752.7L314 752.7L317 752.7L320 752.7L323 752.7L326 752.7L329 752.7L332 752.7L335 752.6L338 752.6L341 752.6L344 752.6L347 752.6L350 752.6L353 752.6L356 752.6L359 752.6L362 752.6L365 752.6L368 752.6L371 752.6L374 752.6L377 752.6L380 752.5L383 752.5L386 752.5L389 752.5L392 752.5L395 752.5L398 752.5L401.1 752.5L404.1 752.5L407.1 752.5L410.1 752.5L413.1 752.5L416.1 752.5L419.1 752.5L422.1 752.5L425.1 752.4L428.1 752.4L431.1 752.4L434.1 752.4L437.1 752.4L440.1 752.4L443.1 752.4L446.1 752.4L449.1 752.4L452.1 752.4L455.1 752.4L458.1 752.4L461.1 752.4L464.1 752.4L467.1 752.4L470.1 752.3L473.1 752.3L476.1 752.3L479.1 752.3L482.1 752.3L485.1 752.3L488.1 752.3L491.1 752.3L494.1 752.3L497.1 752.3L500.1 752.3L503.1 752.3L506.1 752.3L509.1 752.3L512.1 752.3L515.1 752.2L518.1 752.2L521.1 752.2L524.1 752.2L527.1 752.2L530.1 752.2L533.1 752.2L536.1 752.2L539.1 752.2L542.1 752.2L545.1 752.2L548.1 752.2L551.1 752.2L554.1 752.2L557.1 752.1L560.1 752.1L563.1 752.1L566.1 752.1L569.1 752.1L572.1 752.1L575.1 752.1L578.1 752.1L581.1 752.1L584.1 752.1L587.1 752.1L590.1 752.1L593.1 752.1L596.1 752.1L599.1 752.1L602.1 752L605.1 752L608.1 752L611.1 752L614.1 752L617.1 752L620.1 752L623.1 752L626.1 752L629.1 752L632.1 752L635.1 752L638.1 752L641.1 752L644.1 752L647.1 752L650.1 752L653.1 752L656.1 752L659.1 751.9L662.1 751.9L665.1 751.9L668.1 751.9L671.1 751.9L674.2 751.9L677.2 751.9L680.2 751.9L683.2 751.9L686.2 751.9L689.2 751.9L692.2 751.9L695.2 751.9L698.2 751.9L701.2 751.9L704.2 751.9L707.2 751.9L710.2 751.9L713.2 751.9L716.2 751.9L719.2 751.9L722.2 751.8L725.2 751.8L728.2 751.8L731.2 751.8L734.2 751.8L737.2 751.8L740.2 751.8L743.2 751.8L746.2 751.8L749.2 751.8L752.2 751.8L755.2 751.8L758.2 751.8L761.2 751.8L764.2 751.8L767.2 751.8L770.2 751.7L773.2 751.7L776.2 751.7L779.2 751.7L782.2 751.7L785.2 751.7L788.2 751.7L791.2 751.7L794.2 751.7L797.2 751.7L800.2 751.7L803.2 751.7L806.2 751.6L809.2 751.6L812.2 751.6L815.2 751.6L818.2 751.6L821.2 751.6L824.2 751.6L827.2 751.6L830.2 751.6L833.2 751.6L836.2 751.5L839.2 751.5L842.2 751.5L845.2 751.5L848.2 751.5L851.2 751.5L854.2 751.5L857.2 751.5L860.2 751.4L863.2 751.4L866.2 751.4L869.2 751.4L872.2 751.4L875.3 751.4L878.3 751.3L881.3 751.3L884.3 751.3L887.3 751.2L890.3 751.2L893.2 751.1L896.2 750.6L899.1 749.6L901.6 748.2L904 746.3L906.3 744.3L908.8 742.4L911.2 740.4L912.8 738.1L913.9 735.5L914.8 732.6L915.2 729.4" stroke="#80550f" stroke-width="2"/>
<path d="M818 751L821 751L824.1 751L827.1 750.9L830.2 750.9L833.2 750.8L836.3 750.7L839.3 750.7L842.4 750.6L845.4 750.5L848.5 750.4L851.5 750.3L854.5 750.1L857.6 750L860.6 749.9L863.7 749.8L866.7 749.6L869.8 749.5L872.8 749.3L875.9 749.1L878.9 748.9L881.9 748.6L884.9 748.3L887.9 747.9L891 747.2L894 746.4L896.7 745.3L899.2 743.7L901.5 741.7L903.9 739.7L906.3 737.8L908.8 736L911.2 734.2L913.7 732.4" stroke="#80550f" stroke-width="1.6"/>
<path d="M833 752.9L836.1 752.9L839.1 752.9L842.2 752.9L845.2 752.9L848.3 752.9L851.4 752.9L854.4 752.8L857.5 752.8L860.5 752.8L863.6 752.8L866.6 752.8L869.6 752.7L872.7 752.7L875.7 752.7L878.8 752.6L881.8 752.6L884.9 752.4L888 752.1L891 751.7L894 751.1L896.8 750.3L899.4 748.8L902 746.9" stroke="#80550f" stroke-width="1"/>
<path d="M282 769.6L305 769.4" stroke="#80550f" stroke-width="1"/>
<path d="M305 769L308 769L311 769L314 769L317 769L320 769L323 769L326 768.9L329 768.9L332 768.9L335 768.9L338 768.9L341 768.9L344 768.9L347 768.9L350 768.9L353 768.9L356.1 768.9L359.1 768.8L362.1 768.8L365.1 768.8L368.1 768.8L371.1 768.8L374.1 768.8L377.1 768.8L380.1 768.8L383.1 768.8L386.1 768.8L389.1 768.8L392.1 768.8L395.1 768.7L398.1 768.7L401.1 768.7L404.1 768.7L407.1 768.7L410.1 768.7L413.1 768.7L416.1 768.7L419.1 768.7L422.1 768.7L425.1 768.7L428.1 768.7L431.1 768.6L434.1 768.6L437.1 768.6L440.1 768.6L443.1 768.6L446.1 768.6L449.1 768.6L452.1 768.6L455.2 768.6L458.2 768.6L461.2 768.6L464.2 768.5L467.2 768.5L470.2 768.5L473.2 768.5L476.2 768.5L479.2 768.5L482.2 768.5L485.2 768.5L488.2 768.5L491.2 768.5L494.2 768.5L497.2 768.5L500.2 768.4L503.2 768.4L506.2 768.4L509.2 768.4L512.2 768.4L515.2 768.4L518.2 768.4L521.2 768.4L524.2 768.4L527.2 768.4L530.2 768.4L533.2 768.3L536.2 768.3L539.2 768.3L542.2 768.3L545.2 768.3L548.2 768.3L551.2 768.3L554.3 768.3L557.3 768.3L560.3 768.3L563.3 768.3L566.3 768.2L569.3 768.2L572.3 768.2L575.3 768.2L578.3 768.2L581.3 768.2L584.3 768.2L587.3 768.2L590.3 768.2L593.3 768.2L596.3 768.2L599.3 768.1L602.3 768.1L605.3 768.1L608.3 768.1L611.3 768.1L614.3 768.1L617.3 768.1L620.3 768.1L623.3 768.1L626.3 768.1L629.3 768.1L632.3 768.1L635.3 768L638.3 768L641.3 768L644.3 768L647.3 768L650.3 768L653.4 768L656.4 768L659.4 768L662.4 768L665.4 768L668.4 768L671.4 768L674.4 768L677.4 767.9L680.4 767.9L683.4 767.9L686.4 767.9L689.4 767.9L692.4 767.9L695.4 767.9L698.4 767.9L701.4 767.9L704.4 767.9L707.4 767.9L710.4 767.9L713.4 767.9L716.4 767.9L719.4 767.9L722.4 767.8L725.4 767.8L728.4 767.8L731.4 767.8L734.4 767.8L737.4 767.8L740.4 767.8L743.4 767.8L746.4 767.8L749.4 767.8L752.5 767.8L755.5 767.8L758.5 767.8L761.5 767.7L764.5 767.7L767.5 767.7L770.5 767.7L773.5 767.7L776.5 767.7L779.5 767.7L782.5 767.7L785.5 767.7L788.5 767.7L791.5 767.6L794.5 767.6L797.5 767.6L800.5 767.6L803.5 767.6L806.5 767.6L809.5 767.6L812.5 767.6L815.5 767.6L818.5 767.5L821.5 767.5L824.5 767.5L827.5 767.5L830.5 767.5L833.5 767.5L836.5 767.5L839.5 767.4L842.5 767.4L845.5 767.4L848.5 767.4L851.6 767.4L854.6 767.4L857.6 767.3L860.6 767.3L863.6 767.3L866.6 767.3L869.6 767.3L872.6 767.3L875.6 767.2L878.6 767.2L881.7 767.2L884.7 767.1L887.6 767.1L890.6 767L893.6 766.5L896.5 765.5L899 764.2L901.4 762.2L903.7 760.2L906.2 758.3L908.6 756.3L910.2 754.1L911.2 751.4L912.1 748.5L912.5 745.3" stroke="#80550f" stroke-width="2"/>
<path d="M815.4 766.9L818.5 766.9L821.5 766.9L824.6 766.8L827.6 766.8L830.7 766.7L833.7 766.6L836.7 766.6L839.8 766.5L842.8 766.4L845.9 766.3L848.9 766.2L851.9 766L855 765.9L858 765.8L861.1 765.7L864.1 765.5L867.2 765.4L870.2 765.2L873.3 765L876.3 764.8L879.3 764.5L882.3 764.2L885.3 763.8L888.3 763.2L891.3 762.3L894.1 761.2L896.6 759.7L898.9 757.6L901.3 755.6L903.7 753.8L906.1 751.9L908.5 750.1L911 748.3" stroke="#80550f" stroke-width="1.6"/>
<path d="M830.4 768.8L833.5 768.8L836.6 768.8L839.6 768.8L842.7 768.8L845.8 768.8L848.8 768.8L851.9 768.7L854.9 768.7L858 768.7L861 768.7L864.1 768.7L867.1 768.6L870.1 768.6L873.2 768.6L876.2 768.5L879.3 768.5L882.3 768.3L885.4 768L888.5 767.6L891.4 767L894.2 766.2L896.9 764.7L899.4 762.8" stroke="#80550f" stroke-width="1"/>
<path d="M303 786.6L387 786.4" stroke="#80550f" stroke-width="1"/>
<path d="M387 786L390 786L393 786L396 786L399 785.9L402 785.9L405 785.9L408 785.9L411 785.9L414 785.9L417 785.8L420 785.8L423 785.8L426 785.8L429 785.8L432 785.8L435 785.8L438 785.7L441 785.7L444 785.7L447 785.7L450 785.7L453 785.7L456 785.6L459 785.6L462 785.6L465 785.6L468 785.6L471 785.6L474 785.5L477 785.5L480 785.5L483 785.5L486 785.5L489 785.5L492 785.5L495 785.4L498 785.4L501 785.4L504 785.4L507 785.4L510 785.4L513 785.3L516 785.3L519 785.3L522 785.3L525 785.3L528 785.3L531 785.2L534 785.2L537 785.2L540 785.2L543 785.2L546 785.2L549 785.1L552 785.1L555 785.1L558 785.1L561 785.1L564 785.1L567 785L570 785L573 785L576 785L579 785L582 785L585 784.9L588 784.9L591 784.9L594 784.9L597 784.9L600 784.9L603 784.8L606 784.8L609 784.8L612 784.8L615 784.8L618 784.8L621 784.7L624 784.7L627 784.7L630 784.7L633 784.7L636 784.7L639 784.6L642 784.6L645 784.6L648 784.6L651 784.6L654 784.6L657 784.5L660 784.5L663 784.5L666 784.5L669 784.5L672 784.5L675 784.4L678 784.4L681 784.4L684 784.4L687 784.4L690 784.4L693 784.4L696 784.3L699 784.3L702 784.3L705 784.3L708 784.3L711 784.3L714 784.2L717 784.2L720 784.2L723 784.2L726 784.2L729 784.2L732 784.2L735 784.1L738 784.1L741 784.1L744 784.1L747 784.1L750 784.1L753 784L756 784L759 784L762 784L765 784L768 784L771 783.9L774 783.9L777 783.9L780 783.9L783 783.9L786 783.9L789 783.8L792 783.8L795 783.8L798 783.8L801 783.8L804 783.7L807 783.7L810 783.7L813 783.7L816 783.7L819 783.6L822 783.6L825 783.6L828 783.6L831 783.6L834 783.5L837 783.5L840 783.5L843 783.5L846 783.4L849 783.4L852 783.4L855 783.4L858 783.3L861 783.3L864 783.3L867 783.3L870.1 783.2L873.1 783.2L876.1 783.2L879.1 783.2L882.1 783.1L885.1 783.1L888 783L891 782.5L893.9 781.5L896.4 780.1L898.8 778.1L901.1 776.2L903.6 774.3L906 772.3L907.6 770L908.7 767.4L909.5 764.5L909.9 761.3" stroke="#80550f" stroke-width="2"/>
<path d="M812.8 782.9L815.8 782.9L818.9 782.9L821.9 782.8L825 782.8L828 782.7L831.1 782.6L834.1 782.6L837.1 782.5L840.2 782.4L843.2 782.3L846.3 782.2L849.3 782L852.4 781.9L855.4 781.8L858.4 781.7L861.5 781.5L864.5 781.4L867.6 781.2L870.6 781L873.7 780.8L876.7 780.5L879.7 780.2L882.7 779.8L885.7 779.1L888.7 778.3L891.5 777.2L894 775.6L896.3 773.5L898.7 771.6L901.1 769.7L903.5 767.9L906 766.1L908.4 764.3" stroke="#80550f" stroke-width="1.6"/>
<path d="M827.8 784.8L830.8 784.8L833.9 784.8L837 784.8L840 784.8L843.1 784.8L846.1 784.8L849.2 784.7L852.2 784.7L855.3 784.7L858.3 784.7L861.4 784.7L864.4 784.6L867.5 784.6L870.5 784.6L873.5 784.5L876.6 784.5L879.7 784.3L882.8 784L885.8 783.6L888.8 783L891.6 782.2L894.2 780.7L896.8 778.8" stroke="#80550f" stroke-width="1"/>
<path d="M319 802.8L326 802.6" stroke="#80550f" stroke-width="1"/>
<path d="M326 802.2L329 802.2L332 802.2L335 802.2L338 802.2L341 802.1L344 802.1L347 802.1L350.1 802.1L353.1 802.1L356.1 802.1L359.1 802.1L362.1 802.1L365.1 802L368.1 802L371.1 802L374.1 802L377.1 802L380.1 802L383.1 802L386.1 802L389.1 802L392.1 801.9L395.2 801.9L398.2 801.9L401.2 801.9L404.2 801.9L407.2 801.9L410.2 801.9L413.2 801.9L416.2 801.8L419.2 801.8L422.2 801.8L425.2 801.8L428.2 801.8L431.2 801.8L434.2 801.8L437.2 801.8L440.3 801.7L443.3 801.7L446.3 801.7L449.3 801.7L452.3 801.7L455.3 801.7L458.3 801.7L461.3 801.7L464.3 801.6L467.3 801.6L470.3 801.6L473.3 801.6L476.3 801.6L479.3 801.6L482.3 801.6L485.4 801.6L488.4 801.5L491.4 801.5L494.4 801.5L497.4 801.5L500.4 801.5L503.4 801.5L506.4 801.5L509.4 801.5L512.4 801.4L515.4 801.4L518.4 801.4L521.4 801.4L524.4 801.4L527.4 801.4L530.5 801.4L533.5 801.4L536.5 801.3L539.5 801.3L542.5 801.3L545.5 801.3L548.5 801.3L551.5 801.3L554.5 801.3L557.5 801.3L560.5 801.2L563.5 801.2L566.5 801.2L569.5 801.2L572.5 801.2L575.6 801.2L578.6 801.2L581.6 801.2L584.6 801.1L587.6 801.1L590.6 801.1L593.6 801.1L596.6 801.1L599.6 801.1L602.6 801.1L605.6 801L608.6 801L611.6 801L614.6 801L617.6 801L620.6 801L623.7 801L626.7 801L629.7 801L632.7 800.9L635.7 800.9L638.7 800.9L641.7 800.9L644.7 800.9L647.7 800.9L650.7 800.9L653.7 800.9L656.7 800.9L659.7 800.8L662.7 800.8L665.7 800.8L668.8 800.8L671.8 800.8L674.8 800.8L677.8 800.8L680.8 800.8L683.8 800.8L686.8 800.7L689.8 800.7L692.8 800.7L695.8 800.7L698.8 800.7L701.8 800.7L704.8 800.7L707.8 800.7L710.8 800.7L713.9 800.6L716.9 800.6L719.9 800.6L722.9 800.6L725.9 800.6L728.9 800.6L731.9 800.6L734.9 800.6L737.9 800.6L740.9 800.5L743.9 800.5L746.9 800.5L749.9 800.5L752.9 800.5L755.9 800.5L759 800.5L762 800.5L765 800.4L768 800.4L771 800.4L774 800.4L777 800.4L780 800.4L783 800.4L786 800.3L789 800.3L792 800.3L795 800.3L798 800.3L801 800.3L804.1 800.3L807.1 800.2L810.1 800.2L813.1 800.2L816.1 800.2L819.1 800.2L822.1 800.2L825.1 800.1L828.1 800.1L831.1 800.1L834.1 800.1L837.1 800.1L840.1 800L843.1 800L846.1 800L849.2 800L852.2 800L855.2 799.9L858.2 799.9L861.2 799.9L864.2 799.9L867.2 799.9L870.2 799.8L873.3 799.8L876.3 799.8L879.3 799.7L882.3 799.7L885.2 799.6L888.2 799.1L891.1 798.1L893.7 796.8L896 794.9L898.3 792.9L900.9 790.9L903.2 788.9L904.8 786.6L905.9 784L906.8 781.1L907.2 777.9" stroke="#80550f" stroke-width="2"/>
<path d="M810.2 799.5L813.2 799.5L816.3 799.5L819.3 799.4L822.4 799.4L825.4 799.3L828.4 799.2L831.5 799.2L834.5 799.1L837.6 799L840.6 798.9L843.6 798.8L846.7 798.6L849.7 798.5L852.7 798.4L855.8 798.3L858.8 798.1L861.9 798L864.9 797.8L868 797.6L871 797.4L874 797.1L877 796.8L880 796.4L883.1 795.8L886 794.9L888.8 793.9L891.3 792.3L893.6 790.2L896 788.3L898.4 786.4L900.8 784.6L903.2 782.7L905.7 780.9" stroke="#80550f" stroke-width="1.6"/>
<path d="M825.2 801.4L828.3 801.4L831.3 801.4L834.4 801.4L837.4 801.4L840.5 801.4L843.5 801.4L846.6 801.3L849.7 801.3L852.7 801.3L855.7 801.3L858.8 801.3L861.8 801.2L864.9 801.2L867.9 801.2L871 801.1L874 801.1L877.1 800.9L880.2 800.6L883.2 800.2L886.2 799.6L889 798.8L891.6 797.3L894.2 795.4" stroke="#80550f" stroke-width="1"/>
<path d="M331 818.8L363 818.6" stroke="#80550f" stroke-width="1"/>
<path d="M363 818.2L366 818.2L369 818.2L372 818.2L375 818.1L378 818.1L381 818.1L384 818.1L387.1 818.1L390.1 818.1L393.1 818.1L396.1 818.1L399.1 818L402.1 818L405.1 818L408.1 818L411.1 818L414.1 818L417.1 818L420.1 818L423.1 817.9L426.1 817.9L429.1 817.9L432.1 817.9L435.2 817.9L438.2 817.9L441.2 817.9L444.2 817.9L447.2 817.8L450.2 817.8L453.2 817.8L456.2 817.8L459.2 817.8L462.2 817.8L465.2 817.8L468.2 817.8L471.2 817.7L474.2 817.7L477.2 817.7L480.3 817.7L483.3 817.7L486.3 817.7L489.3 817.7L492.3 817.6L495.3 817.6L498.3 817.6L501.3 817.6L504.3 817.6L507.3 817.6L510.3 817.6L513.3 817.6L516.3 817.5L519.3 817.5L522.3 817.5L525.3 817.5L528.4 817.5L531.4 817.5L534.4 817.5L537.4 817.4L540.4 817.4L543.4 817.4L546.4 817.4L549.4 817.4L552.4 817.4L555.4 817.4L558.4 817.3L561.4 817.3L564.4 817.3L567.4 817.3L570.4 817.3L573.5 817.3L576.5 817.3L579.5 817.3L582.5 817.2L585.5 817.2L588.5 817.2L591.5 817.2L594.5 817.2L597.5 817.2L600.5 817.2L603.5 817.1L606.5 817.1L609.5 817.1L612.5 817.1L615.5 817.1L618.5 817.1L621.6 817.1L624.6 817L627.6 817L630.6 817L633.6 817L636.6 817L639.6 817L642.6 817L645.6 817L648.6 816.9L651.6 816.9L654.6 816.9L657.6 816.9L660.6 816.9L663.6 816.9L666.7 816.9L669.7 816.9L672.7 816.8L675.7 816.8L678.7 816.8L681.7 816.8L684.7 816.8L687.7 816.8L690.7 816.8L693.7 816.8L696.7 816.7L699.7 816.7L702.7 816.7L705.7 816.7L708.7 816.7L711.7 816.7L714.8 816.7L717.8 816.7L720.8 816.7L723.8 816.6L726.8 816.6L729.8 816.6L732.8 816.6L735.8 816.6L738.8 816.6L741.8 816.6L744.8 816.6L747.8 816.5L750.8 816.5L753.8 816.5L756.8 816.5L759.9 816.5L762.9 816.5L765.9 816.5L768.9 816.4L771.9 816.4L774.9 816.4L777.9 816.4L780.9 816.4L783.9 816.4L786.9 816.4L789.9 816.3L792.9 816.3L795.9 816.3L798.9 816.3L801.9 816.3L804.9 816.3L808 816.2L811 816.2L814 816.2L817 816.2L820 816.2L823 816.2L826 816.1L829 816.1L832 816.1L835 816.1L838 816.1L841 816L844 816L847 816L850 816L853.1 815.9L856.1 815.9L859.1 815.9L862.1 815.9L865.1 815.9L868.1 815.8L871.2 815.8L874.2 815.8L877.2 815.7L880.2 815.7L883.1 815.6L886.1 815.3L889 814.4L891.7 813.2L894.1 811.4L896.4 809.3L898.7 807.3L901 805.1L902.5 802.7L903.5 800L904.2 797.1L904.5 793.9" stroke="#80550f" stroke-width="2"/>
<path d="M808.8 815.5L811.8 815.5L814.8 815.5L817.8 815.4L820.8 815.4L823.8 815.3L826.8 815.3L829.8 815.2L832.9 815.1L835.9 815L838.9 814.9L841.9 814.8L844.9 814.7L847.9 814.5L850.9 814.4L853.9 814.3L856.9 814.2L859.9 814L863 813.8L866 813.6L869 813.4L872 813.1L875 812.8L877.9 812.5L880.9 811.9L883.9 811.1L886.7 810.1L889.3 808.8L891.6 806.8L893.9 804.8L896.2 802.9L898.5 800.9L900.8 798.9L903 796.9" stroke="#80550f" stroke-width="1.6"/>
<path d="M823.8 817.4L826.8 817.4L829.9 817.4L832.9 817.4L836 817.4L839.1 817.4L842.1 817.4L845.2 817.3L848.2 817.3L851.3 817.3L854.3 817.3L857.4 817.3L860.4 817.2L863.4 817.2L866.5 817.2L869.5 817.1L872.6 817.1L875.7 816.9L878.7 816.6L881.8 816.2L884.7 815.6L887.5 814.8L890.2 813.3L892.8 811.4" stroke="#80550f" stroke-width="1"/>
<path d="M338 835.5L345 835.3" stroke="#80550f" stroke-width="1"/>
<path d="M345 834.9L348 834.9L351 834.9L354 834.9L357.1 834.8L360.1 834.8L363.1 834.8L366.1 834.8L369.1 834.8L372.1 834.8L375.1 834.7L378.2 834.7L381.2 834.7L384.2 834.7L387.2 834.7L390.2 834.7L393.2 834.6L396.2 834.6L399.3 834.6L402.3 834.6L405.3 834.6L408.3 834.5L411.3 834.5L414.3 834.5L417.3 834.5L420.4 834.5L423.4 834.5L426.4 834.4L429.4 834.4L432.4 834.4L435.4 834.4L438.4 834.4L441.5 834.4L444.5 834.3L447.5 834.3L450.5 834.3L453.5 834.3L456.5 834.3L459.5 834.3L462.6 834.2L465.6 834.2L468.6 834.2L471.6 834.2L474.6 834.2L477.6 834.2L480.6 834.1L483.7 834.1L486.7 834.1L489.7 834.1L492.7 834.1L495.7 834.1L498.7 834L501.7 834L504.8 834L507.8 834L510.8 834L513.8 833.9L516.8 833.9L519.8 833.9L522.8 833.9L525.9 833.9L528.9 833.9L531.9 833.8L534.9 833.8L537.9 833.8L540.9 833.8L543.9 833.8L547 833.7L550 833.7L553 833.7L556 833.7L559 833.7L562 833.7L565 833.6L568.1 833.6L571.1 833.6L574.1 833.6L577.1 833.6L580.1 833.6L583.1 833.5L586.1 833.5L589.2 833.5L592.2 833.5L595.2 833.5L598.2 833.4L601.2 833.4L604.2 833.4L607.2 833.4L610.3 833.4L613.3 833.4L616.3 833.3L619.3 833.3L622.3 833.3L625.3 833.3L628.3 833.3L631.4 833.2L634.4 833.2L637.4 833.2L640.4 833.2L643.4 833.2L646.4 833.2L649.4 833.1L652.5 833.1L655.5 833.1L658.5 833.1L661.5 833.1L664.5 833.1L667.5 833L670.5 833L673.6 833L676.6 833L679.6 833L682.6 833L685.6 832.9L688.6 832.9L691.6 832.9L694.7 832.9L697.7 832.9L700.7 832.9L703.7 832.8L706.7 832.8L709.7 832.8L712.7 832.8L715.8 832.8L718.8 832.8L721.8 832.7L724.8 832.7L727.8 832.7L730.8 832.7L733.8 832.7L736.9 832.7L739.9 832.6L742.9 832.6L745.9 832.6L748.9 832.6L751.9 832.6L754.9 832.6L758 832.5L761 832.5L764 832.5L767 832.5L770 832.5L773 832.4L776 832.4L779.1 832.4L782.1 832.4L785.1 832.4L788.1 832.3L791.1 832.3L794.1 832.3L797.1 832.3L800.2 832.3L803.2 832.2L806.2 832.2L809.2 832.2L812.2 832.2L815.2 832.1L818.2 832.1L821.3 832.1L824.3 832.1L827.3 832.1L830.3 832L833.3 832L836.3 832L839.3 832L842.4 831.9L845.4 831.9L848.4 831.9L851.4 831.9L854.4 831.8L857.4 831.8L860.4 831.8L863.5 831.8L866.5 831.7L869.5 831.7L872.6 831.7L875.6 831.6L878.6 831.6L881.5 831.5L884.5 831.2L887.5 830.3L890.2 829.2L892.6 827.3L894.8 825.2L897.3 823.2L899.6 821.1L901 818.7L901.9 816L902.6 813L902.8 809.8" stroke="#80550f" stroke-width="2"/>
<path d="M807.3 831.4L810.3 831.4L813.3 831.4L816.3 831.3L819.3 831.3L822.4 831.2L825.4 831.2L828.4 831.1L831.4 831L834.4 830.9L837.4 830.8L840.4 830.7L843.4 830.6L846.4 830.4L849.4 830.3L852.4 830.2L855.5 830.1L858.5 829.9L861.5 829.7L864.5 829.5L867.5 829.3L870.5 829L873.5 828.7L876.5 828.4L879.5 827.8L882.4 827L885.3 826L887.8 824.7L890.1 822.7L892.4 820.7L894.7 818.8L897 816.8L899.3 814.8L901.5 812.8" stroke="#80550f" stroke-width="1.6"/>
<path d="M822.3 833.3L825.4 833.3L828.4 833.3L831.5 833.3L834.5 833.3L837.6 833.3L840.6 833.3L843.7 833.2L846.8 833.2L849.8 833.2L852.8 833.2L855.9 833.2L858.9 833.1L862 833.1L865 833.1L868.1 833L871.1 833L874.2 832.8L877.3 832.5L880.3 832.1L883.3 831.5L886.1 830.7L888.7 829.2L891.3 827.3" stroke="#80550f" stroke-width="1"/>
<path d="M337 851.8L342 851.6" stroke="#80550f" stroke-width="1"/>
<path d="M342 851.2L345 851.2L348 851.2L351 851.1L354 851.1L357 851.1L360 851.1L363 851.1L366 851L369.1 851L372.1 851L375.1 851L378.1 851L381.1 850.9L384.1 850.9L387.1 850.9L390.1 850.9L393.1 850.9L396.1 850.8L399.1 850.8L402.1 850.8L405.1 850.8L408.1 850.8L411.1 850.7L414.1 850.7L417.2 850.7L420.2 850.7L423.2 850.7L426.2 850.6L429.2 850.6L432.2 850.6L435.2 850.6L438.2 850.6L441.2 850.5L444.2 850.5L447.2 850.5L450.2 850.5L453.2 850.5L456.2 850.4L459.2 850.4L462.2 850.4L465.2 850.4L468.3 850.4L471.3 850.3L474.3 850.3L477.3 850.3L480.3 850.3L483.3 850.3L486.3 850.2L489.3 850.2L492.3 850.2L495.3 850.2L498.3 850.1L501.3 850.1L504.3 850.1L507.3 850.1L510.3 850.1L513.3 850L516.4 850L519.4 850L522.4 850L525.4 850L528.4 849.9L531.4 849.9L534.4 849.9L537.4 849.9L540.4 849.9L543.4 849.8L546.4 849.8L549.4 849.8L552.4 849.8L555.4 849.7L558.4 849.7L561.4 849.7L564.4 849.7L567.5 849.7L570.5 849.6L573.5 849.6L576.5 849.6L579.5 849.6L582.5 849.6L585.5 849.5L588.5 849.5L591.5 849.5L594.5 849.5L597.5 849.4L600.5 849.4L603.5 849.4L606.5 849.4L609.5 849.4L612.5 849.3L615.6 849.3L618.6 849.3L621.6 849.3L624.6 849.3L627.6 849.2L630.6 849.2L633.6 849.2L636.6 849.2L639.6 849.2L642.6 849.1L645.6 849.1L648.6 849.1L651.6 849.1L654.6 849L657.6 849L660.6 849L663.7 849L666.7 849L669.7 848.9L672.7 848.9L675.7 848.9L678.7 848.9L681.7 848.9L684.7 848.8L687.7 848.8L690.7 848.8L693.7 848.8L696.7 848.8L699.7 848.7L702.7 848.7L705.7 848.7L708.7 848.7L711.7 848.7L714.8 848.6L717.8 848.6L720.8 848.6L723.8 848.6L726.8 848.6L729.8 848.5L732.8 848.5L735.8 848.5L738.8 848.5L741.8 848.4L744.8 848.4L747.8 848.4L750.8 848.4L753.8 848.4L756.8 848.3L759.8 848.3L762.9 848.3L765.9 848.3L768.9 848.2L771.9 848.2L774.9 848.2L777.9 848.2L780.9 848.2L783.9 848.1L786.9 848.1L789.9 848.1L792.9 848.1L795.9 848L798.9 848L801.9 848L804.9 848L807.9 847.9L810.9 847.9L814 847.9L817 847.9L820 847.8L823 847.8L826 847.8L829 847.8L832 847.7L835 847.7L838 847.7L841 847.6L844 847.6L847 847.6L850 847.6L853 847.5L856 847.5L859.1 847.5L862.1 847.4L865.1 847.4L868.1 847.4L871.1 847.4L874.1 847.3L877.1 847.3L880.1 847.2L883.1 846.9L886 846L888.7 844.8L891.1 842.9L893.3 840.8L895.7 838.8L898 836.7L899.5 834.3L900.4 831.7L901.1 828.7L901.4 825.5" stroke="#80550f" stroke-width="2"/>
<path d="M805.6 847.1L808.7 847.1L811.7 847.1L814.7 847L817.7 847L820.7 846.9L823.8 846.9L826.8 846.8L829.8 846.7L832.8 846.6L835.8 846.5L838.8 846.4L841.8 846.3L844.9 846.1L847.9 846L850.9 845.9L853.9 845.8L856.9 845.6L860 845.4L863 845.2L866 845L869 844.7L872 844.4L874.9 844.1L877.9 843.5L880.9 842.7L883.7 841.7L886.3 840.3L888.6 838.3L890.9 836.3L893.2 834.4L895.5 832.4L897.8 830.5L900.1 828.5" stroke="#80550f" stroke-width="1.6"/>
<path d="M820.6 849L823.7 849L826.8 849L829.8 849L832.9 849L836 849L839 849L842.1 848.9L845.1 848.9L848.2 848.9L851.2 848.9L854.2 848.9L857.3 848.8L860.3 848.8L863.4 848.8L866.4 848.7L869.5 848.7L872.5 848.5L875.6 848.2L878.7 847.8L881.6 847.2L884.4 846.4L887.1 844.9L889.6 843" stroke="#80550f" stroke-width="1"/>
<path d="M324 867.7L335 867.5" stroke="#80550f" stroke-width="1"/>
<path d="M335 867.1L338 867.1L341 867.1L344 867L347 867L350 867L353.1 867L356.1 866.9L359.1 866.9L362.1 866.9L365.1 866.9L368.1 866.9L371.1 866.8L374.1 866.8L377.1 866.8L380.1 866.8L383.1 866.8L386.2 866.7L389.2 866.7L392.2 866.7L395.2 866.7L398.2 866.6L401.2 866.6L404.2 866.6L407.2 866.6L410.2 866.6L413.2 866.5L416.2 866.5L419.3 866.5L422.3 866.5L425.3 866.4L428.3 866.4L431.3 866.4L434.3 866.4L437.3 866.4L440.3 866.3L443.3 866.3L446.3 866.3L449.3 866.3L452.4 866.2L455.4 866.2L458.4 866.2L461.4 866.2L464.4 866.2L467.4 866.1L470.4 866.1L473.4 866.1L476.4 866.1L479.4 866L482.4 866L485.5 866L488.5 866L491.5 866L494.5 865.9L497.5 865.9L500.5 865.9L503.5 865.9L506.5 865.8L509.5 865.8L512.5 865.8L515.5 865.8L518.6 865.7L521.6 865.7L524.6 865.7L527.6 865.7L530.6 865.7L533.6 865.6L536.6 865.6L539.6 865.6L542.6 865.6L545.6 865.5L548.6 865.5L551.7 865.5L554.7 865.5L557.7 865.4L560.7 865.4L563.7 865.4L566.7 865.4L569.7 865.4L572.7 865.3L575.7 865.3L578.7 865.3L581.7 865.3L584.8 865.2L587.8 865.2L590.8 865.2L593.8 865.2L596.8 865.1L599.8 865.1L602.8 865.1L605.8 865.1L608.8 865L611.8 865L614.8 865L617.9 865L620.9 865L623.9 864.9L626.9 864.9L629.9 864.9L632.9 864.9L635.9 864.8L638.9 864.8L641.9 864.8L644.9 864.8L647.9 864.7L651 864.7L654 864.7L657 864.7L660 864.7L663 864.6L666 864.6L669 864.6L672 864.6L675 864.5L678 864.5L681 864.5L684.1 864.5L687.1 864.4L690.1 864.4L693.1 864.4L696.1 864.4L699.1 864.4L702.1 864.3L705.1 864.3L708.1 864.3L711.1 864.3L714.1 864.2L717.2 864.2L720.2 864.2L723.2 864.2L726.2 864.1L729.2 864.1L732.2 864.1L735.2 864.1L738.2 864.1L741.2 864L744.2 864L747.2 864L750.3 864L753.3 863.9L756.3 863.9L759.3 863.9L762.3 863.9L765.3 863.8L768.3 863.8L771.3 863.8L774.3 863.8L777.3 863.7L780.3 863.7L783.4 863.7L786.4 863.7L789.4 863.6L792.4 863.6L795.4 863.6L798.4 863.6L801.4 863.5L804.4 863.5L807.4 863.5L810.4 863.4L813.4 863.4L816.5 863.4L819.5 863.4L822.5 863.3L825.5 863.3L828.5 863.3L831.5 863.2L834.5 863.2L837.5 863.2L840.5 863.2L843.5 863.1L846.5 863.1L849.6 863.1L852.6 863L855.6 863L858.6 863L861.6 863L864.6 862.9L867.7 862.9L870.7 862.9L873.7 862.9L876.7 862.8L879.7 862.7L882.6 862.6L885.6 861.9L888.4 860.8L891 859.3L893.3 857.2L895.4 855.1L897.3 852.6L898.6 850L899.1 847.2L899.5 844.2L899.7 841" stroke="#80550f" stroke-width="2"/>
<path d="M806.5 862.6L809.6 862.6L812.6 862.6L815.7 862.5L818.7 862.5L821.8 862.4L824.8 862.3L827.9 862.3L830.9 862.2L834 862.1L837 862L840.1 861.9L843.2 861.7L846.2 861.6L849.3 861.5L852.3 861.4L855.4 861.2L858.4 861.1L861.5 860.9L864.5 860.7L867.6 860.4L870.6 860.2L873.7 859.8L876.7 859.4L879.7 858.8L882.7 857.9L885.5 856.8L888 855.2L890.3 853.1L892.5 851L894.6 848.8L896.6 846.5L898.4 844" stroke="#80550f" stroke-width="1.6"/>
<path d="M821.5 864.5L824.6 864.5L827.6 864.5L830.7 864.5L833.8 864.5L836.8 864.5L839.9 864.5L842.9 864.4L846 864.4L849 864.4L852.1 864.4L855.1 864.4L858.1 864.3L861.2 864.3L864.2 864.3L867.3 864.2L870.3 864.2L873.4 864L876.5 863.7L879.5 863.3L882.5 862.7L885.3 861.9L887.9 860.4L890.5 858.5" stroke="#80550f" stroke-width="1"/>
</g>
</g>
</svg>
<svg id="sch" class="abs" style="left:0;top:0" width="1911" height="921" viewBox="0 0 1911 921">
<g fill="none" stroke-width="1" shape-rendering="crispEdges">
<ellipse cx="1110.5" cy="226.0" rx="15.0" ry="15.5" stroke="#06060f"/>
<rect x="1009" y="98" width="5" height="5" fill="#06060f" stroke="none"/>
<rect x="1062" y="98" width="5" height="5" fill="#06060f" stroke="none"/>
<rect x="1108" y="98" width="5" height="5" fill="#06060f" stroke="none"/>
<rect x="1139" y="98" width="5" height="5" fill="#06060f" stroke="none"/>
<rect x="1245" y="98" width="5" height="5" fill="#06060f" stroke="none"/>
<rect x="1321" y="98" width="5" height="5" fill="#06060f" stroke="none"/>
<rect x="1390" y="98" width="5" height="5" fill="#06060f" stroke="none"/>
<rect x="1496" y="98" width="5" height="5" fill="#06060f" stroke="none"/>
<rect x="1542" y="98" width="5" height="5" fill="#06060f" stroke="none"/>
<rect x="1618" y="98" width="5" height="5" fill="#06060f" stroke="none"/>
<rect x="1672" y="98" width="5" height="5" fill="#06060f" stroke="none"/>
<rect x="1009" y="821" width="5" height="5" fill="#06060f" stroke="none"/>
<rect x="1062" y="821" width="5" height="5" fill="#06060f" stroke="none"/>
<rect x="1108" y="821" width="5" height="5" fill="#06060f" stroke="none"/>
<rect x="1139" y="821" width="5" height="5" fill="#06060f" stroke="none"/>
<rect x="1215" y="821" width="5" height="5" fill="#06060f" stroke="none"/>
<rect x="1245" y="821" width="5" height="5" fill="#06060f" stroke="none"/>
<rect x="1321" y="821" width="5" height="5" fill="#06060f" stroke="none"/>
<rect x="1390" y="821" width="5" height="5" fill="#06060f" stroke="none"/>
<rect x="1496" y="821" width="5" height="5" fill="#06060f" stroke="none"/>
<rect x="1550" y="821" width="5" height="5" fill="#06060f" stroke="none"/>
<rect x="1626" y="821" width="5" height="5" fill="#06060f" stroke="none"/>
<rect x="1672" y="821" width="5" height="5" fill="#06060f" stroke="none"/>
<rect x="971" y="242" width="5" height="5" fill="#06060f" stroke="none"/>
<rect x="971" y="448" width="5" height="5" fill="#06060f" stroke="none"/>
<rect x="1009" y="349" width="5" height="5" fill="#06060f" stroke="none"/>
<rect x="1039" y="349" width="5" height="5" fill="#06060f" stroke="none"/>
<rect x="1062" y="349" width="5" height="5" fill="#06060f" stroke="none"/>
<rect x="1139" y="311" width="5" height="5" fill="#06060f" stroke="none"/>
<rect x="1215" y="334" width="5" height="5" fill="#06060f" stroke="none"/>
<rect x="1245" y="334" width="5" height="5" fill="#06060f" stroke="none"/>
<rect x="1245" y="151" width="5" height="5" fill="#06060f" stroke="none"/>
<rect x="1321" y="334" width="5" height="5" fill="#06060f" stroke="none"/>
<rect x="1428" y="334" width="5" height="5" fill="#06060f" stroke="none"/>
<rect x="1245" y="654" width="5" height="5" fill="#06060f" stroke="none"/>
<rect x="1245" y="707" width="5" height="5" fill="#06060f" stroke="none"/>
<rect x="1390" y="235" width="5" height="5" fill="#06060f" stroke="none"/>
<rect x="1390" y="448" width="5" height="5" fill="#06060f" stroke="none"/>
<rect x="1390" y="707" width="5" height="5" fill="#06060f" stroke="none"/>
<rect x="1496" y="265" width="5" height="5" fill="#06060f" stroke="none"/>
<rect x="1496" y="349" width="5" height="5" fill="#06060f" stroke="none"/>
<rect x="1474" y="448" width="5" height="5" fill="#06060f" stroke="none"/>
<rect x="1550" y="448" width="5" height="5" fill="#06060f" stroke="none"/>
<rect x="1672" y="448" width="5" height="5" fill="#06060f" stroke="none"/>
<rect x="1786" y="448" width="5" height="5" fill="#06060f" stroke="none"/>
<rect x="1618" y="151" width="5" height="5" fill="#06060f" stroke="none"/>
<rect x="1672" y="197" width="5" height="5" fill="#06060f" stroke="none"/>
<rect x="1725" y="235" width="5" height="5" fill="#06060f" stroke="none"/>
<rect x="1786" y="265" width="5" height="5" fill="#06060f" stroke="none"/>
<rect x="1672" y="303" width="5" height="5" fill="#06060f" stroke="none"/>
<rect x="1672" y="341" width="5" height="5" fill="#06060f" stroke="none"/>
<rect x="1786" y="341" width="5" height="5" fill="#06060f" stroke="none"/>
<rect x="1496" y="547" width="5" height="5" fill="#06060f" stroke="none"/>
<rect x="1496" y="684" width="5" height="5" fill="#06060f" stroke="none"/>
<rect x="1672" y="593" width="5" height="5" fill="#06060f" stroke="none"/>
<rect x="1786" y="631" width="5" height="5" fill="#06060f" stroke="none"/>
<rect x="1740" y="669" width="5" height="5" fill="#06060f" stroke="none"/>
<rect x="1672" y="707" width="5" height="5" fill="#06060f" stroke="none"/>
<rect x="1626" y="753" width="5" height="5" fill="#06060f" stroke="none"/>
<path d="M973 100h709v1h-709zM973 823h709v1h-709zM973 100h1v46h-1zM973 183h1v100h-1zM973 313h1v16h-1zM973 366h1v16h-1zM973 412h1v321h-1zM973 770h1v54h-1zM973 244h9v1h-9zM973 450h9v1h-9zM1011 100h1v123h-1zM1011 267h1v161h-1zM1011 473h1v351h-1zM1011 351h54v1h-54zM1064 100h1v62h-1zM1064 191h1v549h-1zM1064 770h1v54h-1zM1110 100h1v107h-1zM1110 244h1v580h-1zM1141 100h1v31h-1zM1141 168h1v222h-1zM1141 420h1v313h-1zM1141 770h1v54h-1zM1141 313h39v1h-39zM1179 359h1v31h-1zM1179 389h8v1h-8zM1209 336h39v1h-39zM1217 336h1v31h-1zM1217 412h1v412h-1zM1247 100h1v8h-1zM1247 145h1v618h-1zM1247 800h1v24h-1zM1247 153h32v1h-32zM1308 153h252v1h-252zM1598 153h46v1h-46zM1323 100h1v8h-1zM1323 145h1v237h-1zM1323 420h1v351h-1zM1323 816h1v8h-1zM1323 336h24v1h-24zM1377 336h77v1h-77zM1453 336h1v16h-1zM1247 656h32v1h-32zM1308 656h260v1h-260zM1567 656h1v100h-1zM1567 755h9v1h-9zM1613 755h31v1h-31zM1247 709h39v1h-39zM1285 709h1v9h-1zM1285 755h1v39h-1zM1285 793h9v1h-9zM1392 100h1v8h-1zM1392 145h1v24h-1zM1392 214h1v31h-1zM1392 282h1v314h-1zM1392 633h1v92h-1zM1392 770h1v9h-1zM1392 816h1v8h-1zM1384 237h32v1h-32zM1392 709h24v1h-24zM1422 191h24v1h-24zM1445 191h1v24h-1zM1445 260h1v8h-1zM1445 267h54v1h-54zM1498 100h1v84h-1zM1498 214h1v138h-1zM1498 351h17v1h-17zM1430 336h1v214h-1zM1430 549h24v1h-24zM1476 381h1v139h-1zM1392 450h397v1h-397zM1544 100h1v229h-1zM1544 374h1v24h-1zM1544 397h55v1h-55zM1636 397h8v1h-8zM1620 100h1v16h-1zM1620 145h1v39h-1zM1674 100h1v31h-1zM1674 176h1v39h-1zM1674 199h115v1h-115zM1788 199h1v16h-1zM1704 237h54v1h-54zM1727 237h1v31h-1zM1727 267h62v1h-62zM1788 260h1v23h-1zM1674 260h1v115h-1zM1674 305h84v1h-84zM1674 343h8v1h-8zM1788 328h1v47h-1zM1780 343h9v1h-9zM1788 412h1v77h-1zM1788 526h1v47h-1zM1674 420h1v61h-1zM1674 526h1v123h-1zM1674 595h84v1h-84zM1788 618h1v31h-1zM1742 633h47v1h-47zM1742 633h1v39h-1zM1704 671h54v1h-54zM1788 694h1v16h-1zM1674 709h115v1h-115zM1674 694h1v39h-1zM1674 778h1v46h-1zM1552 503h47v1h-47zM1636 503h8v1h-8zM1552 503h1v24h-1zM1552 572h1v252h-1zM1498 549h24v1h-24zM1498 549h1v161h-1zM1498 739h1v85h-1zM1445 686h54v1h-54zM1445 732h1v16h-1zM1422 747h24v1h-24zM1628 724h1v47h-1zM1628 800h1v24h-1zM973 145h1v5h-1zM973 149h2v1h-2zM975 150h2v1h-2zM977 151h2v1h-2zM979 152h2v1h-2zM981 153h1v1h-1zM980 153h2v1h-2zM978 154h2v1h-2zM976 155h2v1h-2zM974 156h2v1h-2zM972 157h2v1h-2zM970 158h2v1h-2zM968 159h2v1h-2zM966 160h2v1h-2zM965 161h1v1h-1zM965 161h2v1h-2zM967 162h2v1h-2zM969 163h2v1h-2zM971 164h3v1h-3zM974 165h2v1h-2zM976 166h2v1h-2zM978 167h2v1h-2zM980 168h2v1h-2zM980 168h2v1h-2zM978 169h2v1h-2zM976 170h2v1h-2zM974 171h2v1h-2zM972 172h2v1h-2zM970 173h2v1h-2zM968 174h2v1h-2zM966 175h2v1h-2zM965 176h1v1h-1zM965 176h2v1h-2zM967 177h2v1h-2zM969 178h2v1h-2zM971 179h2v1h-2zM973 180h1v1h-1zM973 180h1v4h-1zM973 328h1v5h-1zM973 332h2v1h-2zM975 333h2v1h-2zM977 334h2v1h-2zM979 335h2v1h-2zM981 336h1v1h-1zM980 336h2v1h-2zM978 337h2v1h-2zM976 338h2v1h-2zM973 339h3v1h-3zM971 340h2v1h-2zM969 341h2v1h-2zM967 342h2v1h-2zM965 343h2v1h-2zM965 343h2v1h-2zM967 344h2v1h-2zM969 345h2v1h-2zM971 346h2v1h-2zM973 347h2v1h-2zM975 348h2v1h-2zM977 349h2v1h-2zM979 350h2v1h-2zM981 351h1v1h-1zM980 351h2v1h-2zM978 352h2v1h-2zM976 353h2v1h-2zM974 354h2v1h-2zM972 355h2v1h-2zM970 356h2v1h-2zM968 357h2v1h-2zM966 358h2v1h-2zM965 359h1v1h-1zM965 359h2v1h-2zM967 360h3v1h-3zM970 361h2v1h-2zM972 362h2v1h-2zM973 362h1v5h-1zM973 732h1v5h-1zM973 736h2v1h-2zM975 737h3v1h-3zM978 738h2v1h-2zM980 739h2v1h-2zM980 739h2v1h-2zM978 740h2v1h-2zM976 741h2v1h-2zM974 742h2v1h-2zM972 743h2v1h-2zM970 744h2v1h-2zM968 745h2v1h-2zM966 746h2v1h-2zM965 747h1v1h-1zM965 747h2v1h-2zM967 748h2v1h-2zM969 749h2v1h-2zM971 750h2v1h-2zM973 751h2v1h-2zM975 752h2v1h-2zM977 753h2v1h-2zM979 754h2v1h-2zM981 755h1v1h-1zM980 755h2v1h-2zM978 756h2v1h-2zM976 757h2v1h-2zM973 758h3v1h-3zM971 759h2v1h-2zM969 760h2v1h-2zM967 761h2v1h-2zM965 762h2v1h-2zM965 762h2v1h-2zM967 763h2v1h-2zM969 764h2v1h-2zM971 765h2v1h-2zM973 766h1v1h-1zM973 766h1v5h-1zM1141 130h1v5h-1zM1141 134h1v1h-1zM1142 135h2v1h-2zM1144 136h2v1h-2zM1146 137h2v1h-2zM1148 138h1v1h-1zM1147 138h2v1h-2zM1145 139h2v1h-2zM1143 140h2v1h-2zM1141 141h2v1h-2zM1139 142h2v1h-2zM1137 143h2v1h-2zM1135 144h2v1h-2zM1133 145h2v1h-2zM1133 145h1v1h-1zM1134 146h2v1h-2zM1136 147h2v1h-2zM1138 148h2v1h-2zM1140 149h2v1h-2zM1142 150h2v1h-2zM1144 151h2v1h-2zM1146 152h2v1h-2zM1148 153h1v1h-1zM1148 153h1v1h-1zM1146 154h2v1h-2zM1144 155h2v1h-2zM1142 156h2v1h-2zM1140 157h2v1h-2zM1138 158h2v1h-2zM1136 159h2v1h-2zM1134 160h2v1h-2zM1133 161h1v1h-1zM1133 161h2v1h-2zM1135 162h3v1h-3zM1138 163h2v1h-2zM1140 164h2v1h-2zM1141 164h1v5h-1zM1141 732h1v5h-1zM1141 736h2v1h-2zM1143 737h2v1h-2zM1145 738h2v1h-2zM1147 739h2v1h-2zM1148 739h1v1h-1zM1146 740h2v1h-2zM1144 741h2v1h-2zM1142 742h2v1h-2zM1140 743h2v1h-2zM1138 744h2v1h-2zM1136 745h2v1h-2zM1134 746h2v1h-2zM1133 747h1v1h-1zM1133 747h1v1h-1zM1134 748h2v1h-2zM1136 749h2v1h-2zM1138 750h2v1h-2zM1140 751h2v1h-2zM1142 752h2v1h-2zM1144 753h2v1h-2zM1146 754h2v1h-2zM1148 755h1v1h-1zM1147 755h2v1h-2zM1145 756h2v1h-2zM1143 757h2v1h-2zM1141 758h2v1h-2zM1139 759h2v1h-2zM1137 760h2v1h-2zM1135 761h2v1h-2zM1133 762h2v1h-2zM1133 762h2v1h-2zM1135 763h2v1h-2zM1137 764h2v1h-2zM1139 765h2v1h-2zM1141 766h1v1h-1zM1141 766h1v5h-1zM1247 107h1v5h-1zM1247 111h2v1h-2zM1249 112h2v1h-2zM1251 113h2v1h-2zM1253 114h2v1h-2zM1255 115h1v1h-1zM1254 115h2v1h-2zM1252 116h2v1h-2zM1250 117h2v1h-2zM1248 118h2v1h-2zM1246 119h2v1h-2zM1244 120h2v1h-2zM1242 121h2v1h-2zM1240 122h2v1h-2zM1240 122h1v1h-1zM1241 123h2v1h-2zM1243 124h2v1h-2zM1245 125h2v1h-2zM1247 126h2v1h-2zM1249 127h2v1h-2zM1251 128h2v1h-2zM1253 129h2v1h-2zM1255 130h1v1h-1zM1255 130h1v1h-1zM1253 131h2v1h-2zM1251 132h2v1h-2zM1249 133h2v1h-2zM1247 134h2v1h-2zM1245 135h2v1h-2zM1243 136h2v1h-2zM1241 137h2v1h-2zM1240 138h1v1h-1zM1240 138h1v1h-1zM1241 139h2v1h-2zM1243 140h2v1h-2zM1245 141h2v1h-2zM1247 142h1v1h-1zM1247 142h1v4h-1zM1247 762h1v5h-1zM1247 766h2v1h-2zM1249 767h2v1h-2zM1251 768h2v1h-2zM1253 769h2v1h-2zM1255 770h1v1h-1zM1255 770h1v1h-1zM1253 771h2v1h-2zM1251 772h2v1h-2zM1249 773h2v1h-2zM1247 774h2v1h-2zM1245 775h2v1h-2zM1243 776h2v1h-2zM1241 777h2v1h-2zM1240 778h1v1h-1zM1240 778h2v1h-2zM1242 779h2v1h-2zM1244 780h2v1h-2zM1246 781h2v1h-2zM1248 782h2v1h-2zM1250 783h2v1h-2zM1252 784h2v1h-2zM1254 785h2v1h-2zM1255 785h1v1h-1zM1253 786h2v1h-2zM1251 787h2v1h-2zM1249 788h2v1h-2zM1247 789h2v1h-2zM1245 790h2v1h-2zM1243 791h2v1h-2zM1241 792h2v1h-2zM1240 793h1v1h-1zM1240 793h1v1h-1zM1241 794h2v1h-2zM1243 795h2v1h-2zM1245 796h2v1h-2zM1247 797h1v1h-1zM1247 797h1v4h-1zM1323 107h1v5h-1zM1323 111h2v1h-2zM1325 112h2v1h-2zM1327 113h2v1h-2zM1329 114h2v1h-2zM1331 115h1v1h-1zM1330 115h2v1h-2zM1328 116h2v1h-2zM1326 117h2v1h-2zM1324 118h2v1h-2zM1322 119h2v1h-2zM1320 120h2v1h-2zM1318 121h2v1h-2zM1316 122h2v1h-2zM1316 122h1v1h-1zM1317 123h2v1h-2zM1319 124h2v1h-2zM1321 125h2v1h-2zM1323 126h2v1h-2zM1325 127h2v1h-2zM1327 128h2v1h-2zM1329 129h2v1h-2zM1331 130h1v1h-1zM1331 130h1v1h-1zM1329 131h2v1h-2zM1327 132h2v1h-2zM1325 133h2v1h-2zM1323 134h2v1h-2zM1321 135h2v1h-2zM1319 136h2v1h-2zM1317 137h2v1h-2zM1316 138h1v1h-1zM1316 138h1v1h-1zM1317 139h2v1h-2zM1319 140h2v1h-2zM1321 141h2v1h-2zM1323 142h1v1h-1zM1323 142h1v4h-1zM1323 381h1v5h-1zM1323 385h2v1h-2zM1325 386h2v1h-2zM1327 387h2v1h-2zM1329 388h2v1h-2zM1331 389h1v1h-1zM1331 389h1v1h-1zM1329 390h2v1h-2zM1327 391h2v1h-2zM1325 392h2v1h-2zM1323 393h2v1h-2zM1321 394h2v1h-2zM1319 395h2v1h-2zM1317 396h2v1h-2zM1316 397h1v1h-1zM1316 397h2v1h-2zM1318 398h2v1h-2zM1320 399h2v1h-2zM1322 400h2v1h-2zM1324 401h2v1h-2zM1326 402h2v1h-2zM1328 403h2v1h-2zM1330 404h2v1h-2zM1331 404h1v1h-1zM1329 405h2v1h-2zM1327 406h2v1h-2zM1325 407h2v1h-2zM1323 408h2v1h-2zM1321 409h2v1h-2zM1319 410h2v1h-2zM1317 411h2v1h-2zM1316 412h1v1h-1zM1316 412h1v1h-1zM1317 413h2v1h-2zM1319 414h2v1h-2zM1321 415h2v1h-2zM1323 416h1v1h-1zM1323 416h1v5h-1zM1392 107h1v5h-1zM1391 111h2v1h-2zM1389 112h2v1h-2zM1387 113h2v1h-2zM1385 114h2v1h-2zM1384 115h1v1h-1zM1384 115h2v1h-2zM1386 116h2v1h-2zM1388 117h2v1h-2zM1390 118h2v1h-2zM1392 119h2v1h-2zM1394 120h2v1h-2zM1396 121h2v1h-2zM1398 122h2v1h-2zM1399 122h1v1h-1zM1397 123h2v1h-2zM1395 124h2v1h-2zM1393 125h2v1h-2zM1391 126h2v1h-2zM1389 127h2v1h-2zM1387 128h2v1h-2zM1385 129h2v1h-2zM1384 130h1v1h-1zM1384 130h1v1h-1zM1385 131h2v1h-2zM1387 132h2v1h-2zM1389 133h2v1h-2zM1391 134h2v1h-2zM1393 135h2v1h-2zM1395 136h2v1h-2zM1397 137h2v1h-2zM1399 138h1v1h-1zM1399 138h1v1h-1zM1397 139h2v1h-2zM1395 140h2v1h-2zM1393 141h2v1h-2zM1392 142h1v1h-1zM1392 142h1v4h-1zM1392 244h1v5h-1zM1391 248h2v1h-2zM1389 249h2v1h-2zM1387 250h2v1h-2zM1385 251h2v1h-2zM1384 252h1v1h-1zM1384 252h1v1h-1zM1385 253h2v1h-2zM1387 254h2v1h-2zM1389 255h2v1h-2zM1391 256h2v1h-2zM1393 257h2v1h-2zM1395 258h2v1h-2zM1397 259h2v1h-2zM1399 260h1v1h-1zM1398 260h2v1h-2zM1396 261h2v1h-2zM1394 262h2v1h-2zM1392 263h2v1h-2zM1390 264h2v1h-2zM1388 265h2v1h-2zM1386 266h2v1h-2zM1384 267h2v1h-2zM1384 267h1v1h-1zM1385 268h2v1h-2zM1387 269h2v1h-2zM1389 270h2v1h-2zM1391 271h2v1h-2zM1393 272h2v1h-2zM1395 273h2v1h-2zM1397 274h2v1h-2zM1399 275h1v1h-1zM1399 275h1v1h-1zM1397 276h2v1h-2zM1395 277h2v1h-2zM1393 278h2v1h-2zM1392 279h1v1h-1zM1392 279h1v4h-1zM1392 595h1v5h-1zM1391 599h2v1h-2zM1388 600h3v1h-3zM1386 601h2v1h-2zM1384 602h2v1h-2zM1384 602h1v1h-1zM1385 603h2v1h-2zM1387 604h2v1h-2zM1389 605h2v1h-2zM1391 606h2v1h-2zM1393 607h2v1h-2zM1395 608h2v1h-2zM1397 609h2v1h-2zM1399 610h1v1h-1zM1399 610h1v1h-1zM1397 611h2v1h-2zM1395 612h2v1h-2zM1393 613h2v1h-2zM1391 614h2v1h-2zM1389 615h2v1h-2zM1387 616h2v1h-2zM1385 617h2v1h-2zM1384 618h1v1h-1zM1384 618h2v1h-2zM1386 619h2v1h-2zM1388 620h2v1h-2zM1390 621h2v1h-2zM1392 622h2v1h-2zM1394 623h2v1h-2zM1396 624h2v1h-2zM1398 625h2v1h-2zM1399 625h1v1h-1zM1397 626h2v1h-2zM1395 627h2v1h-2zM1393 628h2v1h-2zM1392 629h1v1h-1zM1392 629h1v5h-1zM1392 778h1v4h-1zM1391 781h2v1h-2zM1389 782h2v1h-2zM1387 783h2v1h-2zM1385 784h2v1h-2zM1384 785h1v1h-1zM1384 785h1v1h-1zM1385 786h2v1h-2zM1387 787h2v1h-2zM1389 788h2v1h-2zM1391 789h2v1h-2zM1393 790h2v1h-2zM1395 791h2v1h-2zM1397 792h2v1h-2zM1399 793h1v1h-1zM1398 793h2v1h-2zM1396 794h2v1h-2zM1394 795h2v1h-2zM1392 796h2v1h-2zM1390 797h2v1h-2zM1388 798h2v1h-2zM1386 799h2v1h-2zM1384 800h2v1h-2zM1384 800h1v1h-1zM1385 801h2v1h-2zM1387 802h2v1h-2zM1389 803h2v1h-2zM1391 804h2v1h-2zM1393 805h2v1h-2zM1395 806h2v1h-2zM1397 807h2v1h-2zM1399 808h1v1h-1zM1399 808h1v1h-1zM1397 809h2v1h-2zM1395 810h2v1h-2zM1393 811h2v1h-2zM1392 812h1v1h-1zM1392 812h1v5h-1zM1285 751h1v5h-1zM1285 751h1v1h-1zM1283 750h2v1h-2zM1281 749h2v1h-2zM1279 748h2v1h-2zM1278 747h1v1h-1zM1278 747h1v1h-1zM1279 746h2v1h-2zM1281 745h2v1h-2zM1283 744h2v1h-2zM1285 743h2v1h-2zM1287 742h2v1h-2zM1289 741h2v1h-2zM1291 740h2v1h-2zM1293 739h1v1h-1zM1292 739h2v1h-2zM1290 738h2v1h-2zM1288 737h2v1h-2zM1286 736h2v1h-2zM1284 735h2v1h-2zM1282 734h2v1h-2zM1280 733h2v1h-2zM1278 732h2v1h-2zM1278 732h1v1h-1zM1279 731h2v1h-2zM1281 730h2v1h-2zM1283 729h2v1h-2zM1285 728h2v1h-2zM1287 727h2v1h-2zM1289 726h2v1h-2zM1291 725h2v1h-2zM1293 724h1v1h-1zM1292 724h2v1h-2zM1290 723h2v1h-2zM1288 722h2v1h-2zM1286 721h2v1h-2zM1285 720h1v1h-1zM1285 717h1v4h-1zM1788 374h1v5h-1zM1788 378h2v1h-2zM1790 379h3v1h-3zM1793 380h2v1h-2zM1795 381h2v1h-2zM1795 381h2v1h-2zM1793 382h2v1h-2zM1791 383h2v1h-2zM1789 384h2v1h-2zM1787 385h2v1h-2zM1785 386h2v1h-2zM1783 387h2v1h-2zM1781 388h2v1h-2zM1780 389h1v1h-1zM1780 389h2v1h-2zM1782 390h2v1h-2zM1784 391h2v1h-2zM1786 392h2v1h-2zM1788 393h2v1h-2zM1790 394h2v1h-2zM1792 395h2v1h-2zM1794 396h2v1h-2zM1796 397h1v1h-1zM1795 397h2v1h-2zM1793 398h2v1h-2zM1791 399h2v1h-2zM1788 400h3v1h-3zM1786 401h2v1h-2zM1784 402h2v1h-2zM1782 403h2v1h-2zM1780 404h2v1h-2zM1780 404h2v1h-2zM1782 405h2v1h-2zM1784 406h2v1h-2zM1786 407h2v1h-2zM1788 408h1v1h-1zM1788 408h1v5h-1zM1788 488h1v5h-1zM1788 492h2v1h-2zM1790 493h2v1h-2zM1792 494h2v1h-2zM1794 495h2v1h-2zM1796 496h1v1h-1zM1795 496h2v1h-2zM1793 497h2v1h-2zM1791 498h2v1h-2zM1788 499h3v1h-3zM1786 500h2v1h-2zM1784 501h2v1h-2zM1782 502h2v1h-2zM1780 503h2v1h-2zM1780 503h2v1h-2zM1782 504h2v1h-2zM1784 505h2v1h-2zM1786 506h2v1h-2zM1788 507h2v1h-2zM1790 508h2v1h-2zM1792 509h2v1h-2zM1794 510h2v1h-2zM1796 511h1v1h-1zM1795 511h2v1h-2zM1793 512h2v1h-2zM1791 513h2v1h-2zM1789 514h2v1h-2zM1787 515h2v1h-2zM1785 516h2v1h-2zM1783 517h2v1h-2zM1781 518h2v1h-2zM1780 519h1v1h-1zM1780 519h2v1h-2zM1782 520h3v1h-3zM1785 521h2v1h-2zM1787 522h2v1h-2zM1788 522h1v5h-1zM1594 153h5v1h-5zM1594 153h1v2h-1zM1593 155h1v2h-1zM1592 157h1v2h-1zM1591 159h1v2h-1zM1590 161h1v1h-1zM1590 160h1v2h-1zM1589 158h1v2h-1zM1588 156h1v2h-1zM1587 154h1v2h-1zM1586 152h1v2h-1zM1585 150h1v2h-1zM1584 148h1v2h-1zM1583 146h1v2h-1zM1582 145h1v1h-1zM1582 145h1v2h-1zM1581 147h1v2h-1zM1580 149h1v2h-1zM1579 151h1v3h-1zM1578 154h1v2h-1zM1577 156h1v2h-1zM1576 158h1v2h-1zM1575 160h1v2h-1zM1575 160h1v2h-1zM1574 158h1v2h-1zM1573 156h1v2h-1zM1572 154h1v2h-1zM1571 152h1v2h-1zM1570 150h1v2h-1zM1569 148h1v2h-1zM1568 146h1v2h-1zM1567 145h1v1h-1zM1567 145h1v2h-1zM1566 147h1v2h-1zM1565 149h1v2h-1zM1564 151h1v2h-1zM1563 153h1v1h-1zM1559 153h5v1h-5zM1632 397h5v1h-5zM1632 397h1v1h-1zM1631 398h1v2h-1zM1630 400h1v2h-1zM1629 402h1v2h-1zM1628 404h1v1h-1zM1628 404h1v1h-1zM1627 402h1v2h-1zM1626 400h1v2h-1zM1625 398h1v2h-1zM1624 396h1v2h-1zM1623 394h1v2h-1zM1622 392h1v2h-1zM1621 390h1v2h-1zM1620 389h1v1h-1zM1620 389h1v2h-1zM1619 391h1v2h-1zM1618 393h1v2h-1zM1617 395h1v2h-1zM1616 397h1v2h-1zM1615 399h1v2h-1zM1614 401h1v2h-1zM1613 403h1v2h-1zM1613 404h1v1h-1zM1612 402h1v2h-1zM1611 400h1v2h-1zM1610 398h1v2h-1zM1609 396h1v2h-1zM1608 394h1v2h-1zM1607 392h1v2h-1zM1606 390h1v2h-1zM1605 389h1v1h-1zM1605 389h1v2h-1zM1604 391h1v2h-1zM1603 393h1v2h-1zM1602 395h1v2h-1zM1601 397h1v1h-1zM1598 397h4v1h-4zM1632 503h5v1h-5zM1632 503h1v2h-1zM1631 505h1v2h-1zM1630 507h1v2h-1zM1629 509h1v2h-1zM1628 511h1v1h-1zM1628 511h1v1h-1zM1627 509h1v2h-1zM1626 507h1v2h-1zM1625 505h1v2h-1zM1624 503h1v2h-1zM1623 501h1v2h-1zM1622 499h1v2h-1zM1621 497h1v2h-1zM1620 496h1v1h-1zM1620 496h1v2h-1zM1619 498h1v2h-1zM1618 500h1v2h-1zM1617 502h1v2h-1zM1616 504h1v2h-1zM1615 506h1v2h-1zM1614 508h1v2h-1zM1613 510h1v2h-1zM1613 511h1v1h-1zM1612 509h1v2h-1zM1611 507h1v2h-1zM1610 505h1v2h-1zM1609 503h1v2h-1zM1608 501h1v2h-1zM1607 499h1v2h-1zM1606 497h1v2h-1zM1605 496h1v1h-1zM1605 496h1v1h-1zM1604 497h1v2h-1zM1603 499h1v2h-1zM1602 501h1v2h-1zM1601 503h1v1h-1zM1598 503h4v1h-4zM1609 755h5v1h-5zM1609 755h1v1h-1zM1608 756h1v2h-1zM1607 758h1v2h-1zM1606 760h1v2h-1zM1605 762h1v1h-1zM1605 761h1v2h-1zM1604 759h1v2h-1zM1603 757h1v2h-1zM1602 755h1v2h-1zM1601 753h1v2h-1zM1600 751h1v2h-1zM1599 749h1v2h-1zM1598 747h1v2h-1zM1598 747h1v1h-1zM1597 748h1v2h-1zM1596 750h1v2h-1zM1595 752h1v2h-1zM1594 754h1v2h-1zM1593 756h1v2h-1zM1592 758h1v2h-1zM1591 760h1v2h-1zM1590 762h1v1h-1zM1590 762h1v1h-1zM1589 760h1v2h-1zM1588 758h1v2h-1zM1587 756h1v2h-1zM1586 754h1v2h-1zM1585 752h1v2h-1zM1584 750h1v2h-1zM1583 748h1v2h-1zM1582 747h1v1h-1zM1582 747h1v2h-1zM1581 749h1v2h-1zM1580 751h1v2h-1zM1579 753h1v2h-1zM1578 755h1v1h-1zM1575 755h4v1h-4zM1064 161h1v14h-1zM1064 178h1v14h-1zM1057 174h16v1h-16zM1057 178h16v1h-16zM1064 739h1v15h-1zM1064 757h1v14h-1zM1057 753h16v1h-16zM1057 757h16v1h-16zM1141 389h1v14h-1zM1141 406h1v15h-1zM1133 402h16v1h-16zM1133 406h16v1h-16zM1498 183h1v15h-1zM1498 201h1v14h-1zM1491 197h16v1h-16zM1491 201h16v1h-16zM1498 709h1v14h-1zM1498 726h1v14h-1zM1491 722h16v1h-16zM1491 726h16v1h-16zM1620 115h1v14h-1zM1620 132h1v14h-1zM1613 128h16v1h-16zM1613 132h16v1h-16zM1628 770h1v14h-1zM1628 787h1v14h-1zM1620 783h17v1h-17zM1620 787h17v1h-17zM1278 153h14v1h-14zM1295 153h14v1h-14zM1291 145h1v17h-1zM1295 145h1v17h-1zM1346 336h14v1h-14zM1363 336h15v1h-15zM1359 328h1v16h-1zM1363 328h1v16h-1zM1278 656h14v1h-14zM1295 656h14v1h-14zM1291 648h1v16h-1zM1295 648h1v16h-1zM973 282h1v11h-1zM973 303h1v11h-1zM965 303h17v1h-17zM965 292h17v1h-17zM981 292h1v1h-1zM980 293h1v2h-1zM979 295h1v1h-1zM978 296h1v1h-1zM977 297h1v2h-1zM976 299h1v1h-1zM975 300h1v1h-1zM974 301h1v2h-1zM973 303h1v1h-1zM973 303h1v1h-1zM972 301h1v2h-1zM971 300h1v1h-1zM970 299h1v1h-1zM969 297h1v2h-1zM968 296h1v1h-1zM967 295h1v1h-1zM966 293h1v2h-1zM965 292h1v1h-1zM973 381h1v11h-1zM973 402h1v11h-1zM965 402h17v1h-17zM965 391h17v1h-17zM981 391h1v1h-1zM980 392h1v2h-1zM979 394h1v1h-1zM978 395h1v1h-1zM977 396h1v2h-1zM976 398h1v1h-1zM975 399h1v1h-1zM974 400h1v2h-1zM973 402h1v1h-1zM973 402h1v1h-1zM972 400h1v2h-1zM971 399h1v1h-1zM970 398h1v1h-1zM969 396h1v2h-1zM968 395h1v1h-1zM967 394h1v1h-1zM966 392h1v2h-1zM965 391h1v1h-1zM1620 204h1v11h-1zM1620 183h1v11h-1zM1613 193h16v1h-16zM1613 204h16v1h-16zM1613 204h1v1h-1zM1614 202h1v2h-1zM1615 201h1v1h-1zM1616 199h1v2h-1zM1617 197h1v2h-1zM1618 196h1v1h-1zM1619 194h1v2h-1zM1620 193h1v1h-1zM1620 193h1v1h-1zM1621 194h1v2h-1zM1622 196h1v1h-1zM1623 197h1v1h-1zM1624 198h1v2h-1zM1625 200h1v1h-1zM1626 201h1v1h-1zM1627 202h1v2h-1zM1628 204h1v1h-1zM1628 715h1v10h-1zM1628 694h1v10h-1zM1620 703h17v1h-17zM1620 715h17v1h-17zM1620 715h1v1h-1zM1621 713h1v2h-1zM1622 712h1v1h-1zM1623 710h1v2h-1zM1624 709h1v1h-1zM1625 707h1v2h-1zM1626 706h1v1h-1zM1627 704h1v2h-1zM1628 703h1v1h-1zM1628 703h1v1h-1zM1629 704h1v2h-1zM1630 706h1v1h-1zM1631 707h1v2h-1zM1632 709h1v1h-1zM1633 710h1v2h-1zM1634 712h1v1h-1zM1635 713h1v2h-1zM1636 715h1v1h-1zM1110 206h1v5h-1zM1110 241h1v4h-1zM1106 216h9v1h-9zM1110 212h1v9h-1zM1106 235h9v1h-9zM988 229h1v32h-1zM981 244h8v1h-8zM988 237h1v1h-1zM989 236h2v1h-2zM991 235h1v1h-1zM992 234h2v1h-2zM994 233h1v1h-1zM995 232h2v1h-2zM997 231h1v1h-1zM998 230h2v1h-2zM1000 229h2v1h-2zM1002 228h1v1h-1zM1003 227h2v1h-2zM1005 226h1v1h-1zM1006 225h2v1h-2zM1008 224h1v1h-1zM1009 223h2v1h-2zM1011 222h1v1h-1zM988 252h1v1h-1zM989 253h2v1h-2zM991 254h1v1h-1zM992 255h2v1h-2zM994 256h1v1h-1zM995 257h2v1h-2zM997 258h1v1h-1zM998 259h2v1h-2zM1000 260h1v1h-1zM1011 267h1v1h-1zM1010 266h1v1h-1zM1009 265h1v1h-1zM1008 264h1v1h-1zM1007 263h1v1h-1zM1006 262h1v1h-1zM1005 261h1v1h-1zM1004 260h1v1h-1zM1003 259h1v1h-1zM1002 258h1v1h-1zM1002 258h1v1h-1zM1001 259h1v1h-1zM1000 260h1v1h-1zM999 261h1v1h-1zM998 262h1v1h-1zM998 262h2v1h-2zM1000 263h2v1h-2zM1002 264h3v1h-3zM1005 265h3v1h-3zM1008 266h2v1h-2zM1010 267h2v1h-2zM988 435h1v31h-1zM981 450h8v1h-8zM988 458h1v1h-1zM989 459h2v1h-2zM991 460h1v1h-1zM992 461h2v1h-2zM994 462h1v1h-1zM995 463h2v1h-2zM997 464h1v1h-1zM998 465h2v1h-2zM1000 466h2v1h-2zM1002 467h1v1h-1zM1003 468h2v1h-2zM1005 469h1v1h-1zM1006 470h2v1h-2zM1008 471h1v1h-1zM1009 472h2v1h-2zM1011 473h1v1h-1zM1000 435h1v1h-1zM1001 434h2v1h-2zM1003 433h1v1h-1zM1004 432h1v1h-1zM1005 431h2v1h-2zM1007 430h1v1h-1zM1008 429h1v1h-1zM1009 428h2v1h-2zM1011 427h1v1h-1zM988 442h1v1h-1zM989 441h1v1h-1zM990 440h1v1h-1zM991 439h1v1h-1zM992 438h2v1h-2zM994 437h1v1h-1zM995 436h1v1h-1zM996 435h1v1h-1zM997 434h1v1h-1zM998 433h1v1h-1zM998 433h1v1h-1zM999 434h1v1h-1zM1000 435h1v1h-1zM1001 436h1v1h-1zM1002 437h1v1h-1zM1001 437h2v1h-2zM998 438h3v1h-3zM995 439h3v1h-3zM993 440h2v1h-2zM990 441h3v1h-3zM988 442h2v1h-2zM1201 321h1v31h-1zM1201 336h9v1h-9zM1201 343h1v1h-1zM1199 344h2v1h-2zM1198 345h1v1h-1zM1197 346h1v1h-1zM1195 347h2v1h-2zM1194 348h1v1h-1zM1193 349h1v1h-1zM1191 350h2v1h-2zM1190 351h1v1h-1zM1188 352h2v1h-2zM1187 353h1v1h-1zM1186 354h1v1h-1zM1184 355h2v1h-2zM1183 356h1v1h-1zM1182 357h1v1h-1zM1180 358h2v1h-2zM1179 359h1v1h-1zM1190 321h1v1h-1zM1188 320h2v1h-2zM1187 319h1v1h-1zM1186 318h1v1h-1zM1184 317h2v1h-2zM1183 316h1v1h-1zM1182 315h1v1h-1zM1180 314h2v1h-2zM1179 313h1v1h-1zM1201 328h1v1h-1zM1200 327h1v1h-1zM1199 326h1v1h-1zM1198 325h1v1h-1zM1197 324h1v1h-1zM1196 323h1v1h-1zM1195 322h1v1h-1zM1194 321h1v1h-1zM1193 320h1v1h-1zM1192 319h1v1h-1zM1192 319h1v1h-1zM1190 320h2v1h-2zM1189 321h1v1h-1zM1188 322h1v1h-1zM1188 322h2v1h-2zM1190 323h2v1h-2zM1192 324h2v1h-2zM1194 325h2v1h-2zM1196 326h2v1h-2zM1198 327h2v1h-2zM1200 328h2v1h-2zM1194 374h1v31h-1zM1186 389h9v1h-9zM1194 381h1v1h-1zM1195 380h2v1h-2zM1197 379h1v1h-1zM1198 378h2v1h-2zM1200 377h1v1h-1zM1201 376h2v1h-2zM1203 375h1v1h-1zM1204 374h2v1h-2zM1206 373h2v1h-2zM1208 372h1v1h-1zM1209 371h2v1h-2zM1211 370h1v1h-1zM1212 369h2v1h-2zM1214 368h1v1h-1zM1215 367h2v1h-2zM1217 366h1v1h-1zM1194 397h1v1h-1zM1195 398h2v1h-2zM1197 399h1v1h-1zM1198 400h2v1h-2zM1200 401h2v1h-2zM1202 402h1v1h-1zM1203 403h2v1h-2zM1205 404h1v1h-1zM1217 412h1v1h-1zM1216 411h1v1h-1zM1215 410h1v1h-1zM1214 409h1v1h-1zM1213 408h1v1h-1zM1212 407h1v1h-1zM1211 406h1v1h-1zM1210 405h1v1h-1zM1209 404h1v1h-1zM1208 403h1v1h-1zM1207 402h1v1h-1zM1207 402h1v1h-1zM1206 403h1v1h-1zM1205 404h1v1h-1zM1204 405h1v1h-1zM1203 406h1v1h-1zM1203 406h2v1h-2zM1205 407h2v1h-2zM1207 408h2v1h-2zM1209 409h3v1h-3zM1212 410h2v1h-2zM1214 411h2v1h-2zM1216 412h2v1h-2zM1415 176h1v31h-1zM1415 191h8v1h-8zM1415 199h1v1h-1zM1413 200h2v1h-2zM1412 201h1v1h-1zM1410 202h2v1h-2zM1409 203h1v1h-1zM1407 204h2v1h-2zM1406 205h1v1h-1zM1404 206h2v1h-2zM1402 207h2v1h-2zM1401 208h1v1h-1zM1399 209h2v1h-2zM1398 210h1v1h-1zM1396 211h2v1h-2zM1395 212h1v1h-1zM1393 213h2v1h-2zM1392 214h1v1h-1zM1403 176h1v1h-1zM1401 175h2v1h-2zM1400 174h1v1h-1zM1399 173h1v1h-1zM1397 172h2v1h-2zM1396 171h1v1h-1zM1395 170h1v1h-1zM1393 169h2v1h-2zM1392 168h1v1h-1zM1415 183h1v1h-1zM1414 182h1v1h-1zM1413 181h1v1h-1zM1412 180h1v1h-1zM1410 179h2v1h-2zM1409 178h1v1h-1zM1408 177h1v1h-1zM1407 176h1v1h-1zM1406 175h1v1h-1zM1405 174h1v1h-1zM1405 174h1v1h-1zM1404 175h1v1h-1zM1403 176h1v1h-1zM1402 177h1v1h-1zM1401 178h1v1h-1zM1401 178h2v1h-2zM1403 179h3v1h-3zM1406 180h3v1h-3zM1409 181h2v1h-2zM1411 182h3v1h-3zM1414 183h2v1h-2zM1422 222h1v31h-1zM1415 237h8v1h-8zM1422 229h1v1h-1zM1423 228h2v1h-2zM1425 227h1v1h-1zM1426 226h2v1h-2zM1428 225h1v1h-1zM1429 224h2v1h-2zM1431 223h1v1h-1zM1432 222h2v1h-2zM1434 221h2v1h-2zM1436 220h1v1h-1zM1437 219h2v1h-2zM1439 218h1v1h-1zM1440 217h2v1h-2zM1442 216h1v1h-1zM1443 215h2v1h-2zM1445 214h1v1h-1zM1422 244h1v1h-1zM1423 245h2v1h-2zM1425 246h1v1h-1zM1426 247h2v1h-2zM1428 248h1v1h-1zM1429 249h2v1h-2zM1431 250h1v1h-1zM1432 251h2v1h-2zM1434 252h1v1h-1zM1445 260h1v1h-1zM1444 259h1v1h-1zM1443 258h1v1h-1zM1442 257h1v1h-1zM1441 255h1v2h-1zM1440 254h1v1h-1zM1439 253h1v1h-1zM1438 252h1v1h-1zM1437 251h1v1h-1zM1436 250h1v1h-1zM1436 250h1v1h-1zM1435 251h1v1h-1zM1434 252h1v1h-1zM1433 253h1v1h-1zM1432 254h1v1h-1zM1432 254h2v1h-2zM1434 255h2v1h-2zM1436 256h2v1h-2zM1438 257h2v1h-2zM1440 258h2v1h-2zM1442 259h2v1h-2zM1444 260h2v1h-2zM1460 374h32v1h-32zM1476 374h1v8h-1zM1483 374h1v1h-1zM1484 372h1v2h-1zM1485 371h1v1h-1zM1486 369h1v2h-1zM1487 368h1v1h-1zM1488 366h1v2h-1zM1489 365h1v1h-1zM1490 363h1v2h-1zM1491 361h1v2h-1zM1492 360h1v1h-1zM1493 358h1v2h-1zM1494 357h1v1h-1zM1495 355h1v2h-1zM1496 354h1v1h-1zM1497 352h1v2h-1zM1498 351h1v1h-1zM1468 374h1v1h-1zM1467 372h1v2h-1zM1466 371h1v1h-1zM1465 369h1v2h-1zM1464 368h1v1h-1zM1463 366h1v2h-1zM1462 365h1v1h-1zM1461 363h1v2h-1zM1460 362h1v1h-1zM1453 351h1v1h-1zM1454 352h1v1h-1zM1455 353h1v1h-1zM1456 354h1v1h-1zM1457 355h1v2h-1zM1458 357h1v1h-1zM1459 358h1v1h-1zM1460 359h1v1h-1zM1461 360h1v1h-1zM1462 361h1v1h-1zM1462 361h1v1h-1zM1461 362h1v1h-1zM1460 363h1v1h-1zM1459 364h1v1h-1zM1459 363h1v2h-1zM1458 361h1v2h-1zM1457 359h1v2h-1zM1456 357h1v2h-1zM1455 355h1v2h-1zM1454 353h1v2h-1zM1453 351h1v2h-1zM1521 336h1v31h-1zM1514 351h8v1h-8zM1521 343h1v1h-1zM1522 342h2v1h-2zM1524 341h1v1h-1zM1525 340h2v1h-2zM1527 339h1v1h-1zM1528 338h2v1h-2zM1530 337h1v1h-1zM1531 336h2v1h-2zM1533 335h2v1h-2zM1535 334h1v1h-1zM1536 333h2v1h-2zM1538 332h1v1h-1zM1539 331h2v1h-2zM1541 330h1v1h-1zM1542 329h2v1h-2zM1544 328h1v1h-1zM1521 359h1v1h-1zM1522 360h2v1h-2zM1524 361h2v1h-2zM1526 362h2v1h-2zM1528 363h1v1h-1zM1529 364h2v1h-2zM1531 365h2v1h-2zM1533 366h1v1h-1zM1544 374h1v1h-1zM1543 373h1v1h-1zM1542 372h1v1h-1zM1541 371h1v1h-1zM1540 369h1v2h-1zM1539 368h1v1h-1zM1538 367h1v1h-1zM1537 366h1v1h-1zM1536 365h1v1h-1zM1535 364h1v1h-1zM1535 364h1v1h-1zM1534 365h1v1h-1zM1533 366h1v1h-1zM1532 367h1v1h-1zM1531 368h1v1h-1zM1531 368h2v1h-2zM1533 369h2v1h-2zM1535 370h2v1h-2zM1537 371h2v1h-2zM1539 372h2v1h-2zM1541 373h2v1h-2zM1543 374h2v1h-2zM1651 138h1v31h-1zM1643 153h9v1h-9zM1651 145h1v1h-1zM1652 144h2v1h-2zM1654 143h1v1h-1zM1655 142h2v1h-2zM1657 141h1v1h-1zM1658 140h2v1h-2zM1660 139h1v1h-1zM1661 138h2v1h-2zM1663 137h2v1h-2zM1665 136h1v1h-1zM1666 135h2v1h-2zM1668 134h1v1h-1zM1669 133h2v1h-2zM1671 132h1v1h-1zM1672 131h2v1h-2zM1674 130h1v1h-1zM1651 161h1v1h-1zM1652 162h2v1h-2zM1654 163h1v1h-1zM1655 164h2v1h-2zM1657 165h2v1h-2zM1659 166h1v1h-1zM1660 167h2v1h-2zM1662 168h1v1h-1zM1674 176h1v1h-1zM1673 175h1v1h-1zM1672 174h1v1h-1zM1671 173h1v1h-1zM1670 172h1v1h-1zM1669 171h1v1h-1zM1668 170h1v1h-1zM1667 169h1v1h-1zM1666 168h1v1h-1zM1665 167h1v1h-1zM1664 166h1v1h-1zM1664 166h1v1h-1zM1663 167h1v1h-1zM1662 168h1v1h-1zM1661 169h1v1h-1zM1660 170h1v1h-1zM1660 170h2v1h-2zM1662 171h2v1h-2zM1664 172h2v1h-2zM1666 173h3v1h-3zM1669 174h2v1h-2zM1671 175h2v1h-2zM1673 176h2v1h-2zM1697 222h1v31h-1zM1697 237h8v1h-8zM1697 244h1v1h-1zM1695 245h2v1h-2zM1694 246h1v1h-1zM1692 247h2v1h-2zM1691 248h1v1h-1zM1690 249h1v1h-1zM1688 250h2v1h-2zM1687 251h1v1h-1zM1685 252h2v1h-2zM1684 253h1v1h-1zM1682 254h2v1h-2zM1681 255h1v1h-1zM1680 256h1v1h-1zM1678 257h2v1h-2zM1677 258h1v1h-1zM1675 259h2v1h-2zM1674 260h1v1h-1zM1685 222h1v1h-1zM1683 221h2v1h-2zM1682 220h1v1h-1zM1681 219h1v1h-1zM1679 218h2v1h-2zM1678 217h1v1h-1zM1677 216h1v1h-1zM1675 215h2v1h-2zM1674 214h1v1h-1zM1697 229h1v1h-1zM1696 228h1v1h-1zM1695 227h1v1h-1zM1694 226h1v1h-1zM1692 225h2v1h-2zM1691 224h1v1h-1zM1690 223h1v1h-1zM1689 222h1v1h-1zM1688 221h1v1h-1zM1687 220h1v1h-1zM1687 220h1v1h-1zM1685 221h2v1h-2zM1684 222h1v1h-1zM1683 223h1v1h-1zM1683 223h2v1h-2zM1685 224h2v1h-2zM1687 225h2v1h-2zM1689 226h3v1h-3zM1692 227h2v1h-2zM1694 228h2v1h-2zM1696 229h2v1h-2zM1765 222h1v31h-1zM1757 237h9v1h-9zM1765 244h1v1h-1zM1766 245h2v1h-2zM1768 246h1v1h-1zM1769 247h2v1h-2zM1771 248h1v1h-1zM1772 249h1v1h-1zM1773 250h2v1h-2zM1775 251h1v1h-1zM1776 252h2v1h-2zM1778 253h1v1h-1zM1779 254h2v1h-2zM1781 255h1v1h-1zM1782 256h1v1h-1zM1783 257h2v1h-2zM1785 258h1v1h-1zM1786 259h2v1h-2zM1788 260h1v1h-1zM1776 222h1v1h-1zM1777 221h2v1h-2zM1779 220h1v1h-1zM1780 219h2v1h-2zM1782 218h1v1h-1zM1783 217h2v1h-2zM1785 216h1v1h-1zM1786 215h2v1h-2zM1788 214h1v1h-1zM1765 229h1v1h-1zM1766 228h1v1h-1zM1767 227h1v1h-1zM1768 226h1v1h-1zM1769 225h2v1h-2zM1771 224h1v1h-1zM1772 223h1v1h-1zM1773 222h1v1h-1zM1774 221h1v1h-1zM1775 220h1v1h-1zM1775 220h1v1h-1zM1776 221h1v1h-1zM1777 222h1v1h-1zM1778 223h1v1h-1zM1777 223h2v1h-2zM1775 224h2v1h-2zM1773 225h2v1h-2zM1771 226h2v1h-2zM1769 227h2v1h-2zM1767 228h2v1h-2zM1765 229h2v1h-2zM1765 290h1v32h-1zM1757 305h9v1h-9zM1765 313h1v1h-1zM1766 314h2v1h-2zM1768 315h1v1h-1zM1769 316h2v1h-2zM1771 317h1v1h-1zM1772 318h2v1h-2zM1774 319h1v1h-1zM1775 320h2v1h-2zM1777 321h2v1h-2zM1779 322h1v1h-1zM1780 323h2v1h-2zM1782 324h1v1h-1zM1783 325h2v1h-2zM1785 326h1v1h-1zM1786 327h2v1h-2zM1788 328h1v1h-1zM1776 290h1v1h-1zM1777 289h2v1h-2zM1779 288h1v1h-1zM1780 287h2v1h-2zM1782 286h1v1h-1zM1783 285h2v1h-2zM1785 284h1v1h-1zM1786 283h2v1h-2zM1788 282h1v1h-1zM1765 298h1v1h-1zM1766 297h1v1h-1zM1767 296h1v1h-1zM1768 295h1v1h-1zM1769 294h1v1h-1zM1770 293h1v1h-1zM1771 292h1v1h-1zM1772 291h1v1h-1zM1773 290h1v1h-1zM1774 289h1v1h-1zM1775 288h1v1h-1zM1775 288h1v1h-1zM1776 289h1v2h-1zM1777 291h1v1h-1zM1778 292h1v1h-1zM1777 292h2v1h-2zM1775 293h2v1h-2zM1773 294h2v1h-2zM1771 295h2v1h-2zM1769 296h2v1h-2zM1767 297h2v1h-2zM1765 298h2v1h-2zM1651 381h1v32h-1zM1643 397h9v1h-9zM1651 389h1v1h-1zM1652 388h2v1h-2zM1654 387h1v1h-1zM1655 386h2v1h-2zM1657 385h1v1h-1zM1658 384h2v1h-2zM1660 383h1v1h-1zM1661 382h2v1h-2zM1663 381h2v1h-2zM1665 380h1v1h-1zM1666 379h2v1h-2zM1668 378h1v1h-1zM1669 377h2v1h-2zM1671 376h1v1h-1zM1672 375h2v1h-2zM1674 374h1v1h-1zM1651 404h1v1h-1zM1652 405h2v1h-2zM1654 406h1v1h-1zM1655 407h1v1h-1zM1656 408h2v1h-2zM1658 409h1v1h-1zM1659 410h1v1h-1zM1660 411h2v1h-2zM1662 412h1v1h-1zM1674 420h1v1h-1zM1673 419h1v1h-1zM1672 418h1v1h-1zM1671 417h1v1h-1zM1670 416h1v1h-1zM1669 415h1v1h-1zM1668 414h1v1h-1zM1667 413h1v1h-1zM1666 412h1v1h-1zM1665 411h1v1h-1zM1664 410h1v1h-1zM1664 410h1v1h-1zM1663 411h1v1h-1zM1662 412h1v1h-1zM1661 413h1v1h-1zM1660 414h1v1h-1zM1660 414h2v1h-2zM1662 415h2v1h-2zM1664 416h2v1h-2zM1666 417h3v1h-3zM1669 418h2v1h-2zM1671 419h2v1h-2zM1673 420h2v1h-2zM1651 488h1v32h-1zM1643 503h9v1h-9zM1651 511h1v1h-1zM1652 512h2v1h-2zM1654 513h1v1h-1zM1655 514h2v1h-2zM1657 515h1v1h-1zM1658 516h2v1h-2zM1660 517h1v1h-1zM1661 518h2v1h-2zM1663 519h2v1h-2zM1665 520h1v1h-1zM1666 521h2v1h-2zM1668 522h1v1h-1zM1669 523h2v1h-2zM1671 524h1v1h-1zM1672 525h2v1h-2zM1674 526h1v1h-1zM1662 488h1v1h-1zM1663 487h2v1h-2zM1665 486h1v1h-1zM1666 485h2v1h-2zM1668 484h1v1h-1zM1669 483h2v1h-2zM1671 482h1v1h-1zM1672 481h2v1h-2zM1674 480h1v1h-1zM1651 496h1v1h-1zM1652 495h1v1h-1zM1653 494h1v1h-1zM1654 493h1v1h-1zM1655 491h1v2h-1zM1656 490h1v1h-1zM1657 489h1v1h-1zM1658 488h1v1h-1zM1659 487h1v1h-1zM1660 486h1v1h-1zM1660 486h1v1h-1zM1661 487h1v1h-1zM1662 488h1v1h-1zM1663 489h1v1h-1zM1664 490h1v1h-1zM1663 490h2v1h-2zM1661 491h2v1h-2zM1659 492h2v1h-2zM1657 493h2v1h-2zM1655 494h2v1h-2zM1653 495h2v1h-2zM1651 496h2v1h-2zM1460 526h32v1h-32zM1476 519h1v8h-1zM1483 526h1v1h-1zM1484 527h1v2h-1zM1485 529h1v1h-1zM1486 530h1v2h-1zM1487 532h1v1h-1zM1488 533h1v2h-1zM1489 535h1v1h-1zM1490 536h1v2h-1zM1491 538h1v2h-1zM1492 540h1v1h-1zM1493 541h1v2h-1zM1494 543h1v1h-1zM1495 544h1v2h-1zM1496 546h1v1h-1zM1497 547h1v2h-1zM1498 549h1v1h-1zM1460 538h1v1h-1zM1459 539h1v2h-1zM1458 541h1v1h-1zM1457 542h1v2h-1zM1456 544h1v2h-1zM1455 546h1v1h-1zM1454 547h1v2h-1zM1453 549h1v1h-1zM1468 526h1v1h-1zM1467 527h1v1h-1zM1466 528h1v1h-1zM1465 529h1v1h-1zM1464 530h1v2h-1zM1463 532h1v1h-1zM1462 533h1v1h-1zM1461 534h1v1h-1zM1460 535h1v1h-1zM1459 536h1v1h-1zM1459 536h1v1h-1zM1460 537h1v2h-1zM1461 539h1v1h-1zM1462 540h1v1h-1zM1462 539h1v2h-1zM1463 537h1v2h-1zM1464 535h1v2h-1zM1465 532h1v3h-1zM1466 530h1v2h-1zM1467 528h1v2h-1zM1468 526h1v2h-1zM1529 534h1v31h-1zM1521 549h9v1h-9zM1529 557h1v1h-1zM1530 558h2v1h-2zM1532 559h1v1h-1zM1533 560h2v1h-2zM1535 561h1v1h-1zM1536 562h2v1h-2zM1538 563h1v1h-1zM1539 564h2v1h-2zM1541 565h2v1h-2zM1543 566h1v1h-1zM1544 567h2v1h-2zM1546 568h1v1h-1zM1547 569h2v1h-2zM1549 570h1v1h-1zM1550 571h2v1h-2zM1552 572h1v1h-1zM1540 534h1v1h-1zM1541 533h2v1h-2zM1543 532h1v1h-1zM1544 531h2v1h-2zM1546 530h1v1h-1zM1547 529h2v1h-2zM1549 528h1v1h-1zM1550 527h2v1h-2zM1552 526h1v1h-1zM1529 541h1v1h-1zM1530 540h1v1h-1zM1531 539h1v1h-1zM1532 538h1v1h-1zM1533 537h1v1h-1zM1534 536h1v1h-1zM1535 535h1v1h-1zM1536 534h1v1h-1zM1537 533h1v1h-1zM1538 532h1v1h-1zM1538 532h1v1h-1zM1539 533h1v1h-1zM1540 534h1v1h-1zM1541 535h1v1h-1zM1542 536h1v1h-1zM1541 536h2v1h-2zM1539 537h2v1h-2zM1536 538h3v1h-3zM1533 539h3v1h-3zM1531 540h2v1h-2zM1529 541h2v1h-2zM1765 579h1v32h-1zM1757 595h9v1h-9zM1765 587h1v1h-1zM1766 586h2v1h-2zM1768 585h1v1h-1zM1769 584h2v1h-2zM1771 583h1v1h-1zM1772 582h2v1h-2zM1774 581h1v1h-1zM1775 580h2v1h-2zM1777 579h2v1h-2zM1779 578h1v1h-1zM1780 577h2v1h-2zM1782 576h1v1h-1zM1783 575h2v1h-2zM1785 574h1v1h-1zM1786 573h2v1h-2zM1788 572h1v1h-1zM1765 602h1v1h-1zM1766 603h2v1h-2zM1768 604h1v1h-1zM1769 605h1v1h-1zM1770 606h2v1h-2zM1772 607h1v1h-1zM1773 608h1v1h-1zM1774 609h2v1h-2zM1776 610h1v1h-1zM1788 618h1v1h-1zM1787 617h1v1h-1zM1786 616h1v1h-1zM1785 615h1v1h-1zM1784 614h1v1h-1zM1783 613h1v1h-1zM1782 612h1v1h-1zM1781 611h1v1h-1zM1780 610h1v1h-1zM1779 609h1v1h-1zM1778 608h1v1h-1zM1778 608h1v1h-1zM1777 609h1v2h-1zM1776 611h1v1h-1zM1775 612h1v1h-1zM1775 612h2v1h-2zM1777 613h2v1h-2zM1779 614h2v1h-2zM1781 615h2v1h-2zM1783 616h2v1h-2zM1785 617h2v1h-2zM1787 618h2v1h-2zM1765 656h1v31h-1zM1757 671h9v1h-9zM1765 663h1v1h-1zM1766 662h2v1h-2zM1768 661h1v1h-1zM1769 660h2v1h-2zM1771 659h1v1h-1zM1772 658h2v1h-2zM1774 657h1v1h-1zM1775 656h2v1h-2zM1777 655h2v1h-2zM1779 654h1v1h-1zM1780 653h2v1h-2zM1782 652h1v1h-1zM1783 651h2v1h-2zM1785 650h1v1h-1zM1786 649h2v1h-2zM1788 648h1v1h-1zM1765 679h1v1h-1zM1766 680h2v1h-2zM1768 681h1v1h-1zM1769 682h2v1h-2zM1771 683h2v1h-2zM1773 684h1v1h-1zM1774 685h2v1h-2zM1776 686h1v1h-1zM1788 694h1v1h-1zM1787 693h1v1h-1zM1786 692h1v1h-1zM1785 691h1v1h-1zM1784 690h1v1h-1zM1783 689h1v1h-1zM1782 688h1v1h-1zM1781 687h1v1h-1zM1780 686h1v1h-1zM1779 685h1v1h-1zM1778 684h1v1h-1zM1778 684h1v1h-1zM1777 685h1v2h-1zM1776 687h1v1h-1zM1775 688h1v1h-1zM1775 688h2v1h-2zM1777 689h2v1h-2zM1779 690h2v1h-2zM1781 691h2v1h-2zM1783 692h2v1h-2zM1785 693h2v1h-2zM1787 694h2v1h-2zM1697 656h1v31h-1zM1697 671h8v1h-8zM1697 663h1v1h-1zM1695 662h2v1h-2zM1694 661h1v1h-1zM1692 660h2v1h-2zM1691 659h1v1h-1zM1689 658h2v1h-2zM1688 657h1v1h-1zM1686 656h2v1h-2zM1684 655h2v1h-2zM1683 654h1v1h-1zM1681 653h2v1h-2zM1680 652h1v1h-1zM1678 651h2v1h-2zM1677 650h1v1h-1zM1675 649h2v1h-2zM1674 648h1v1h-1zM1697 679h1v1h-1zM1695 680h2v1h-2zM1693 681h2v1h-2zM1691 682h2v1h-2zM1690 683h1v1h-1zM1688 684h2v1h-2zM1686 685h2v1h-2zM1685 686h1v1h-1zM1674 694h1v1h-1zM1675 693h1v1h-1zM1676 692h1v1h-1zM1677 691h1v1h-1zM1678 689h1v2h-1zM1679 688h1v1h-1zM1680 687h1v1h-1zM1681 686h1v1h-1zM1682 685h1v1h-1zM1683 684h1v1h-1zM1683 684h1v1h-1zM1684 685h1v1h-1zM1685 686h1v1h-1zM1686 687h1v1h-1zM1687 688h1v1h-1zM1686 688h2v1h-2zM1684 689h2v1h-2zM1682 690h2v1h-2zM1680 691h2v1h-2zM1678 692h2v1h-2zM1676 693h2v1h-2zM1674 694h2v1h-2zM1651 739h1v32h-1zM1643 755h9v1h-9zM1651 762h1v1h-1zM1652 763h2v1h-2zM1654 764h1v1h-1zM1655 765h2v1h-2zM1657 766h1v1h-1zM1658 767h1v1h-1zM1659 768h2v1h-2zM1661 769h1v1h-1zM1662 770h2v1h-2zM1664 771h1v1h-1zM1665 772h2v1h-2zM1667 773h1v1h-1zM1668 774h1v1h-1zM1669 775h2v1h-2zM1671 776h1v1h-1zM1672 777h2v1h-2zM1674 778h1v1h-1zM1662 739h1v1h-1zM1663 738h2v1h-2zM1665 737h2v1h-2zM1667 736h2v1h-2zM1669 735h1v1h-1zM1670 734h2v1h-2zM1672 733h2v1h-2zM1674 732h1v1h-1zM1651 747h1v1h-1zM1652 746h1v1h-1zM1653 745h1v1h-1zM1654 744h1v1h-1zM1655 743h1v1h-1zM1656 742h1v1h-1zM1657 741h1v1h-1zM1658 740h1v1h-1zM1659 739h1v1h-1zM1660 738h1v1h-1zM1660 738h1v1h-1zM1661 739h2v1h-2zM1663 740h1v1h-1zM1664 741h1v1h-1zM1663 741h2v1h-2zM1661 742h2v1h-2zM1659 743h2v1h-2zM1657 744h2v1h-2zM1655 745h2v1h-2zM1653 746h2v1h-2zM1651 747h2v1h-2zM1422 694h1v31h-1zM1415 709h8v1h-8zM1422 717h1v1h-1zM1423 718h2v1h-2zM1425 719h1v1h-1zM1426 720h2v1h-2zM1428 721h1v1h-1zM1429 722h2v1h-2zM1431 723h1v1h-1zM1432 724h2v1h-2zM1434 725h2v1h-2zM1436 726h1v1h-1zM1437 727h2v1h-2zM1439 728h1v1h-1zM1440 729h2v1h-2zM1442 730h1v1h-1zM1443 731h2v1h-2zM1445 732h1v1h-1zM1434 694h1v1h-1zM1435 693h2v1h-2zM1437 692h1v1h-1zM1438 691h1v1h-1zM1439 690h2v1h-2zM1441 689h1v1h-1zM1442 688h1v1h-1zM1443 687h2v1h-2zM1445 686h1v1h-1zM1422 701h1v1h-1zM1423 700h1v1h-1zM1424 699h1v1h-1zM1425 698h1v1h-1zM1426 697h2v1h-2zM1428 696h1v1h-1zM1429 695h1v1h-1zM1430 694h1v1h-1zM1431 693h1v1h-1zM1432 692h1v1h-1zM1432 692h1v1h-1zM1433 693h1v1h-1zM1434 694h1v1h-1zM1435 695h1v1h-1zM1436 696h1v1h-1zM1435 696h2v1h-2zM1432 697h3v1h-3zM1429 698h3v1h-3zM1427 699h2v1h-2zM1424 700h3v1h-3zM1422 701h2v1h-2zM1415 732h1v31h-1zM1415 747h8v1h-8zM1415 739h1v1h-1zM1413 738h2v1h-2zM1412 737h1v1h-1zM1410 736h2v1h-2zM1409 735h1v1h-1zM1407 734h2v1h-2zM1406 733h1v1h-1zM1404 732h2v1h-2zM1402 731h2v1h-2zM1401 730h1v1h-1zM1399 729h2v1h-2zM1398 728h1v1h-1zM1396 727h2v1h-2zM1395 726h1v1h-1zM1393 725h2v1h-2zM1392 724h1v1h-1zM1415 755h1v1h-1zM1413 756h2v1h-2zM1411 757h2v1h-2zM1409 758h2v1h-2zM1408 759h1v1h-1zM1406 760h2v1h-2zM1404 761h2v1h-2zM1403 762h1v1h-1zM1392 770h1v1h-1zM1393 769h1v1h-1zM1394 768h1v1h-1zM1395 767h1v1h-1zM1396 765h1v2h-1zM1397 764h1v1h-1zM1398 763h1v1h-1zM1399 762h1v1h-1zM1400 761h1v1h-1zM1401 760h1v1h-1zM1401 760h1v1h-1zM1402 761h1v1h-1zM1403 762h1v1h-1zM1404 763h1v1h-1zM1405 764h1v1h-1zM1404 764h2v1h-2zM1402 765h2v1h-2zM1400 766h2v1h-2zM1398 767h2v1h-2zM1396 768h2v1h-2zM1394 769h2v1h-2zM1392 770h2v1h-2zM1300 778h1v31h-1zM1293 793h8v1h-8zM1300 785h1v1h-1zM1301 784h2v1h-2zM1303 783h1v1h-1zM1304 782h2v1h-2zM1306 781h1v1h-1zM1307 780h2v1h-2zM1309 779h1v1h-1zM1310 778h2v1h-2zM1312 777h2v1h-2zM1314 776h1v1h-1zM1315 775h2v1h-2zM1317 774h1v1h-1zM1318 773h2v1h-2zM1320 772h1v1h-1zM1321 771h2v1h-2zM1323 770h1v1h-1zM1300 800h1v1h-1zM1301 801h2v1h-2zM1303 802h1v1h-1zM1304 803h2v1h-2zM1306 804h1v1h-1zM1307 805h2v1h-2zM1309 806h1v1h-1zM1310 807h2v1h-2zM1312 808h1v1h-1zM1323 816h1v1h-1zM1322 815h1v1h-1zM1321 814h1v1h-1zM1320 813h1v1h-1zM1319 811h1v2h-1zM1318 810h1v1h-1zM1317 809h1v1h-1zM1316 808h1v1h-1zM1315 807h1v1h-1zM1314 806h1v1h-1zM1314 806h1v1h-1zM1313 807h1v1h-1zM1312 808h1v1h-1zM1311 809h1v1h-1zM1310 810h1v1h-1zM1310 810h2v1h-2zM1312 811h2v1h-2zM1314 812h2v1h-2zM1316 813h2v1h-2zM1318 814h2v1h-2zM1320 815h2v1h-2zM1322 816h2v1h-2zM1041 351h1v9h-1zM1620 214h1v9h-1zM1552 450h1v9h-1zM1628 686h1v9h-1z" fill="#06060f" stroke="none"/>
<path d="M1034 359h16v1h-16zM1049 359h1v1h-1zM1048 360h1v1h-1zM1047 361h1v1h-1zM1045 362h2v1h-2zM1044 363h1v1h-1zM1043 364h1v1h-1zM1042 365h1v1h-1zM1041 366h1v1h-1zM1041 366h1v1h-1zM1040 365h1v1h-1zM1039 364h1v1h-1zM1038 363h1v1h-1zM1037 362h1v1h-1zM1036 361h1v1h-1zM1035 360h1v1h-1zM1034 359h1v1h-1zM1613 222h16v1h-16zM1628 222h1v1h-1zM1627 223h1v1h-1zM1626 224h1v1h-1zM1624 225h2v1h-2zM1623 226h1v1h-1zM1622 227h1v1h-1zM1621 228h1v1h-1zM1620 229h1v1h-1zM1620 229h1v1h-1zM1619 228h1v1h-1zM1618 227h1v1h-1zM1617 226h1v1h-1zM1616 225h1v1h-1zM1615 224h1v1h-1zM1614 223h1v1h-1zM1613 222h1v1h-1zM1544 458h16v1h-16zM1559 458h1v1h-1zM1558 459h1v1h-1zM1557 460h1v1h-1zM1556 461h1v1h-1zM1555 462h1v1h-1zM1554 463h1v1h-1zM1553 464h1v1h-1zM1552 465h1v1h-1zM1552 465h1v1h-1zM1551 464h1v1h-1zM1550 463h1v1h-1zM1548 462h2v1h-2zM1547 461h1v1h-1zM1546 460h1v1h-1zM1545 459h1v1h-1zM1544 458h1v1h-1zM1620 686h17v1h-17zM1636 686h1v1h-1zM1635 685h1v1h-1zM1634 684h1v1h-1zM1633 683h1v1h-1zM1632 681h1v2h-1zM1631 680h1v1h-1zM1630 679h1v1h-1zM1629 678h1v1h-1zM1628 677h1v1h-1zM1628 677h1v1h-1zM1627 678h1v1h-1zM1626 679h1v1h-1zM1625 680h1v1h-1zM1624 681h1v2h-1zM1623 683h1v1h-1zM1622 684h1v1h-1zM1621 685h1v1h-1zM1620 686h1v1h-1z" fill="#0000ff" stroke="none"/>
</g>
<g>
<text x="982 989 995" y="161">R14</text>
<text x="982 988 994" y="178">10k</text>
<text x="982 989 995" y="344">R15</text>
<text x="982 988 994" y="361">100</text>
<text x="982 989 995" y="747">R16</text>
<text x="982 988 994" y="764">10k</text>
<text x="1150 1157" y="146">R1</text>
<text x="1150 1156 1162 1168" y="163">470k</text>
<text x="1150 1157" y="747">R2</text>
<text x="1150 1156 1162 1168 1171 1177" y="764">108.2k</text>
<text x="1257 1264" y="123">R3</text>
<text x="1257 1263 1266 1272" y="140">2.2k</text>
<text x="1257 1264" y="778">R4</text>
<text x="1257 1263 1266 1272" y="795">2.2k</text>
<text x="1333 1340 1346" y="123">R12</text>
<text x="1333 1339 1342 1348" y="140">2.2k</text>
<text x="1333 1340 1346" y="397">R22</text>
<text x="1333 1339 1342 1348" y="414">2.2k</text>
<text x="1369 1376" y="123">R9</text>
<text x="1370 1376" y="140">22</text>
<text x="1369 1376" y="260">R5</text>
<text x="1364 1370 1376" y="277">330</text>
<text x="1363 1370 1376" y="610">R21</text>
<text x="1364 1370 1376" y="627">330</text>
<text x="1363 1370 1376" y="793">R20</text>
<text x="1370 1376" y="810">22</text>
<text x="1797 1804" y="389">R6</text>
<text x="1797 1803 1809" y="406">100</text>
<text x="1797 1804 1810" y="503">R19</text>
<text x="1797 1803 1809" y="521">100</text>
<text x="1068 1075" y="168">C3</text>
<text x="1068 1074 1080 1086" y="191">470µ</text>
<text x="1068 1075" y="747">C5</text>
<text x="1068 1074 1080 1086" y="770">470µ</text>
<text x="1144 1151" y="397">C1</text>
<text x="1144 1150 1153 1159" y="420">2.2n</text>
<text x="1502 1509" y="191">C4</text>
<text x="1502 1508 1514 1520" y="214">120n</text>
<text x="1502 1509" y="717">C7</text>
<text x="1502 1508 1514 1520" y="740">120n</text>
<text x="1624 1631 1637" y="123">C10</text>
<text x="1624 1630 1636" y="146">22n</text>
<text x="1632 1639" y="778">C6</text>
<text x="1632 1638 1644" y="801">22n</text>
<text x="977 984" y="286">D3</text>
<text x="977 983 990 996 1002 1008" y="317">1N4148</text>
<text x="977 984" y="385">D4</text>
<text x="977 983 990 996 1002 1008" y="416">1N4148</text>
<text x="1121 1128" y="210">V1</text>
<text x="1121 1127" y="248">24</text>
<text x="1007 1015 1021" y="241">Q13</text>
<text x="1007 1013 1020 1026 1032 1038" y="258">2N1711</text>
<text x="1213 1221" y="385">Q2</text>
<text x="1213 1219 1226 1232 1238 1244" y="403">2N2222</text>
<text x="1441 1449" y="233">Q4</text>
<text x="1441 1447 1454 1460 1466 1472" y="250">2N2222</text>
<text x="1540 1548" y="347">Q7</text>
<text x="1540 1546 1553 1559 1565 1571" y="364">2N2222</text>
<text x="1670 1678" y="149">Q6</text>
<text x="1670 1676 1683 1689 1695 1701" y="166">2N1711</text>
<text x="1670 1676 1683" y="393">TUT</text>
<text x="1670 1676 1683 1689 1695 1701 1707" y="410">2N2219A</text>
<text x="1784 1792 1798" y="591">Q17</text>
<text x="1784 1790 1797 1803 1809 1815 1821" y="608">2N2222_</text>
<text x="1784 1792 1798" y="667">Q16</text>
<text x="1784 1790 1797 1803 1809 1815" y="684">2N2222</text>
<text x="1319 1327" y="789">Q8</text>
<text x="1319 1325 1332 1338 1344 1350" y="806">2N2222</text>
<text x="1657 1665 1671" y="667">Q18</text>
<text x="1640 1646 1653 1659 1665 1671" y="684">2N2222</text>
<text x="1376 1384 1390" y="743">Q21</text>
<text x="1359 1365 1372 1378 1384 1390" y="761">2N2222</text>
<text x="1021 1029 1035" y="462">Q14</text>
<text x="1021 1027 1034 1040 1046 1052" y="444">2N2907</text>
<text x="1797 1805 1811" y="248">Q10</text>
<text x="1797 1803 1810 1816 1822 1828" y="231">2N2907</text>
<text x="1797 1805 1811" y="317">Q11</text>
<text x="1797 1803 1810 1816 1822 1828" y="300">2N2907</text>
<text x="1683 1689 1696 1702 1708 1715" y="515">TUT_P1</text>
<text x="1683 1689 1696 1702 1708 1714" y="498">2N2907</text>
<text x="1561 1569 1575" y="561">Q19</text>
<text x="1561 1567 1574 1580 1586 1592" y="543">2N2907</text>
<text x="1650 1658" y="248">Q9</text>
<text x="1627 1633 1640 1646 1652 1658" y="231">2N2907</text>
<text x="1156 1162 1169 1175 1181 1187" y="334">2N2907</text>
<text x="1155 1163" y="345">Q1</text>
<text x="1665 1671 1678 1684 1690 1696" y="752">2N2907</text>
<text x="1666 1674 1680" y="764">Q15</text>
<text x="1681 1688 1695" y="104">VCC</text>
<text x="1681 1688 1695" y="827">VEE</text>
<text x="1681 1688" y="347">Xn</text>
<text x="1436 1442 1449 1455 1461 1467" y="707">2N2907</text>
<text x="1437 1445 1451" y="719">Q22</text>
<text x="1061 1064 1067 1071 1077 1083 1086 1092 1095 1101 1107 1113 1122 1125 1131 1137 1143 1152 1155 1161 1164 1170 1174 1177 1183" y="850">.tran 0 500m 200m startup</text>
<text x="1527 1534 1537 1543 1549 1555" y="406">Steps1</text>
<text x="1536 1542 1545 1551 1557 1563" y="501">steps2</text>
<text x="1364 1370 1377 1383 1389 1395" y="189">2N2907</text>
<text x="1386 1394" y="201">Q5</text>
<text x="1358 1365 1372 1378" y="241">RAZ1</text>
<text x="1368 1372 1378 1383" y="713">raz2</text>
<text x="1263 1270" y="730">R8</text>
<text x="1252 1258 1264 1270" y="747">100k</text>
<text x="1604 1611" y="187">D2</text>
<text x="1580 1586 1593 1599 1605 1611" y="218">1N4148</text>
<text x="1611 1618" y="698">D1</text>
<text x="1587 1593 1600 1606 1612 1618" y="728">1N4148</text>
<text x="1767 1774" y="347">Yn</text>
<text x="1287 1294" y="143">C9</text>
<text x="1281 1287 1293 1299" y="170">100n</text>
<text x="1355 1362" y="326">C2</text>
<text x="1352 1358 1364" y="352">10n</text>
<text x="1287 1294" y="646">C8</text>
<text x="1281 1287 1293 1299" y="672">100n</text>
<text x="1569 1576 1582" y="143">R13</text>
<text x="1569 1575 1581" y="170">15k</text>
<text x="1611 1618" y="387">R7</text>
<text x="1605 1611 1617 1623" y="413">270k</text>
<text x="1608 1615 1621" y="494">R17</text>
<text x="1605 1611 1617 1623" y="520">270k</text>
<text x="1585 1592 1598" y="745">R18</text>
<text x="1585 1591 1597" y="771">15k</text>
<text transform="translate(1469 355) rotate(-90)" x="0 6 13 19 25 31" y="0">2N2222</text>
<text transform="translate(1486 355) rotate(-90)" x="0 8" y="0">Q3</text>
<text transform="translate(1469 559) rotate(-90)" x="-37 -31 -24 -18 -12 -6" y="0">2N2907</text>
<text transform="translate(1486 559) rotate(-90)" x="-20 -12 -6" y="0">Q20</text>
<text transform="translate(1672 557) rotate(-90)" x="-6 1" y="0">Xp</text>
<text transform="translate(1787 557) rotate(-90)" x="-6 1" y="0">Yp</text>
</g>
</svg>
</body></html>
